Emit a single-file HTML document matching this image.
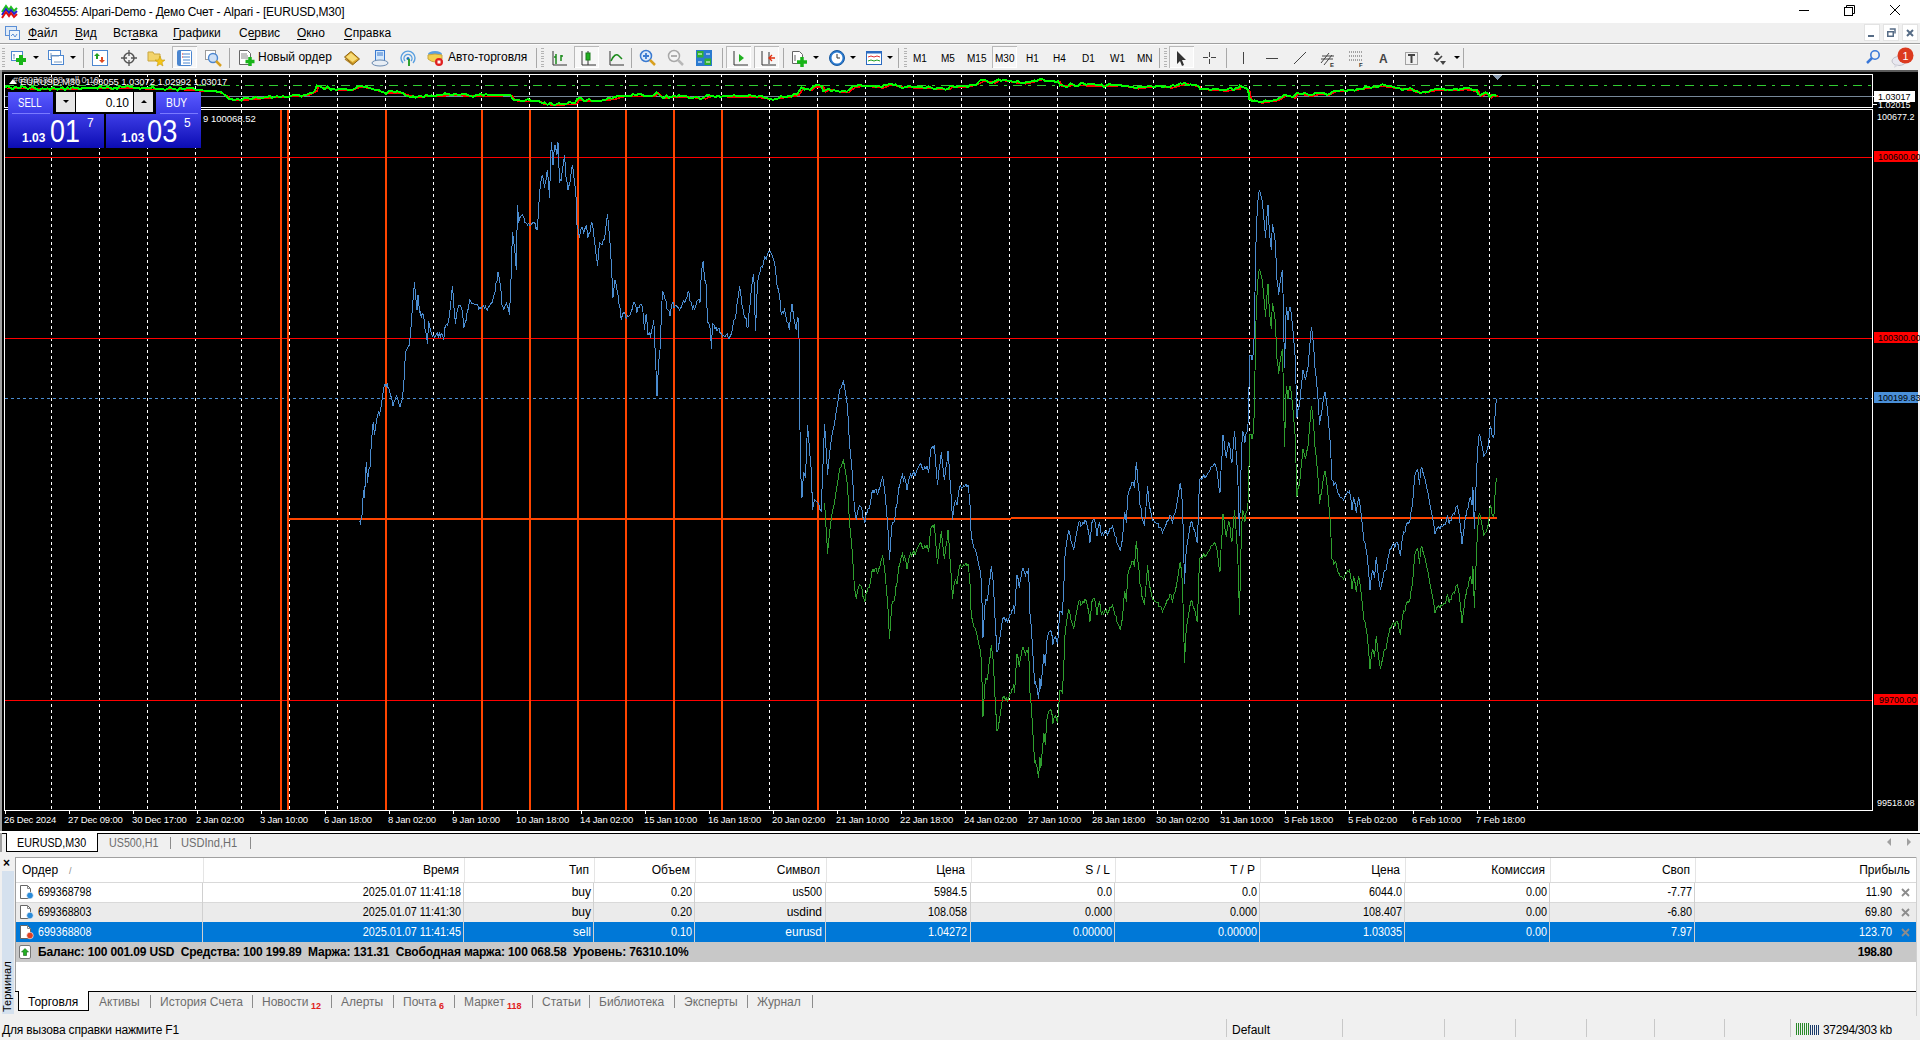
<!DOCTYPE html>
<html><head><meta charset="utf-8"><title>MT4</title>
<style>
html,body{margin:0;padding:0;}
body{width:1920px;height:1040px;position:relative;overflow:hidden;background:#f0f0f0;font-family:"Liberation Sans", sans-serif;}
.t{position:absolute;white-space:nowrap;}
.r{position:absolute;}
</style></head><body>
<div class="r" style="left:0px;top:0px;width:1920px;height:23px;background:#ffffff;"></div>
<svg class="r" style="left:1px;top:3px" width="18" height="16" viewBox="0 0 18 16">
<polyline points="1,9 5,3 8,7 10,4 13,8 16,5" fill="none" stroke="#1fbf1f" stroke-width="2"/>
<polyline points="1,12 5,6 8,10 10,7 13,11 16,8" fill="none" stroke="#2020d0" stroke-width="2"/>
<polyline points="1,15 5,9 8,13 10,10 13,14 16,11" fill="none" stroke="#e01010" stroke-width="2"/>
</svg>
<div class="t" style="left:24px;top:4.53px;font-size:12px;line-height:15px;color:#000;font-weight:normal;letter-spacing:-0.21px;">16304555: Alpari-Demo - Демо Счет - Alpari - [EURUSD,M30]</div>
<div class="r" style="left:1799px;top:10px;width:10px;height:1px;background:#000;"></div>
<svg class="r" style="left:1843px;top:4px" width="13" height="13" viewBox="0 0 13 13">
<rect x="1.5" y="3.5" width="8" height="8" fill="none" stroke="#000" stroke-width="1"/>
<polyline points="3.5,3.5 3.5,1.5 11.5,1.5 11.5,9.5 9.5,9.5" fill="none" stroke="#000" stroke-width="1"/>
</svg>
<svg class="r" style="left:1889px;top:4px" width="12" height="12" viewBox="0 0 12 12">
<path d="M1,1 L11,11 M11,1 L1,11" stroke="#000" stroke-width="1"/></svg>
<div class="r" style="left:0px;top:23px;width:1920px;height:20px;background:#f0f0f0;"></div>
<div class="r" style="left:0px;top:43px;width:1920px;height:1px;background:#a0a0a0;"></div>
<svg class="r" style="left:4px;top:25px" width="16" height="16" viewBox="0 0 16 16">
<rect x="1.5" y="1.5" width="11" height="9" fill="#dfeaf7" stroke="#5b8fd6"/>
<rect x="5.5" y="5.5" width="10" height="9" fill="#eef4fb" stroke="#5b8fd6"/>
<polyline points="7,11 9,9 11,12 13,9" fill="none" stroke="#5b8fd6"/>
</svg>
<div class="t" style="left:28px;top:25.53px;font-size:12px;line-height:15px;color:#000;font-weight:normal;">Файл</div>
<div class="t" style="left:75px;top:25.53px;font-size:12px;line-height:15px;color:#000;font-weight:normal;">Вид</div>
<div class="t" style="left:113px;top:25.53px;font-size:12px;line-height:15px;color:#000;font-weight:normal;">Вставка</div>
<div class="t" style="left:173px;top:25.53px;font-size:12px;line-height:15px;color:#000;font-weight:normal;">Графики</div>
<div class="t" style="left:239px;top:25.53px;font-size:12px;line-height:15px;color:#000;font-weight:normal;">Сервис</div>
<div class="t" style="left:297px;top:25.53px;font-size:12px;line-height:15px;color:#000;font-weight:normal;">Окно</div>
<div class="t" style="left:344px;top:25.53px;font-size:12px;line-height:15px;color:#000;font-weight:normal;">Справка</div>
<div class="r" style="left:28px;top:39px;width:9px;height:1px;background:#000;"></div>
<div class="r" style="left:75px;top:39px;width:8px;height:1px;background:#000;"></div>
<div class="r" style="left:131px;top:39px;width:7px;height:1px;background:#000;"></div>
<div class="r" style="left:173px;top:39px;width:7px;height:1px;background:#000;"></div>
<div class="r" style="left:249px;top:39px;width:7px;height:1px;background:#000;"></div>
<div class="r" style="left:297px;top:39px;width:9px;height:1px;background:#000;"></div>
<div class="r" style="left:344px;top:39px;width:8px;height:1px;background:#000;"></div>
<div class="r" style="left:1864px;top:24px;width:16px;height:17px;background:#ffffff;box-shadow:inset 0 0 0 1px #e3e3e3;"></div>
<div class="r" style="left:1883px;top:24px;width:16px;height:17px;background:#ffffff;box-shadow:inset 0 0 0 1px #e3e3e3;"></div>
<div class="r" style="left:1902px;top:24px;width:16px;height:17px;background:#ffffff;box-shadow:inset 0 0 0 1px #e3e3e3;"></div>
<div class="r" style="left:1868px;top:35px;width:6px;height:2px;background:#556b85;"></div>
<svg class="r" style="left:1887px;top:28px" width="9" height="9" viewBox="0 0 9 9">
<rect x="0.75" y="3.75" width="5.5" height="4.5" fill="none" stroke="#556b85" stroke-width="1.5"/>
<polyline points="2.75,1 8,1 8,5.5" fill="none" stroke="#556b85" stroke-width="1.5"/></svg>
<svg class="r" style="left:1906px;top:29px" width="8" height="8" viewBox="0 0 8 8">
<path d="M1,1 L7,7 M7,1 L1,7" stroke="#556b85" stroke-width="2"/></svg>
<div class="r" style="left:0px;top:44px;width:1920px;height:26px;background:#f0f0f0;"></div>
<div class="r" style="left:0px;top:44px;width:1920px;height:1px;background:#fcfcfc;"></div>
<div class="r" style="left:0px;top:70px;width:1920px;height:2px;background:#5a5a5a;"></div>
<div class="r" style="left:2px;top:48.0px;width:3px;height:1px;background:#b4b4b4;"></div>
<div class="r" style="left:2px;top:50.6px;width:3px;height:1px;background:#b4b4b4;"></div>
<div class="r" style="left:2px;top:53.2px;width:3px;height:1px;background:#b4b4b4;"></div>
<div class="r" style="left:2px;top:55.8px;width:3px;height:1px;background:#b4b4b4;"></div>
<div class="r" style="left:2px;top:58.4px;width:3px;height:1px;background:#b4b4b4;"></div>
<div class="r" style="left:2px;top:61.0px;width:3px;height:1px;background:#b4b4b4;"></div>
<div class="r" style="left:2px;top:63.6px;width:3px;height:1px;background:#b4b4b4;"></div>
<div class="r" style="left:2px;top:66.2px;width:3px;height:1px;background:#b4b4b4;"></div>
<div class="r" style="left:541px;top:48.0px;width:3px;height:1px;background:#b4b4b4;"></div>
<div class="r" style="left:541px;top:50.6px;width:3px;height:1px;background:#b4b4b4;"></div>
<div class="r" style="left:541px;top:53.2px;width:3px;height:1px;background:#b4b4b4;"></div>
<div class="r" style="left:541px;top:55.8px;width:3px;height:1px;background:#b4b4b4;"></div>
<div class="r" style="left:541px;top:58.4px;width:3px;height:1px;background:#b4b4b4;"></div>
<div class="r" style="left:541px;top:61.0px;width:3px;height:1px;background:#b4b4b4;"></div>
<div class="r" style="left:541px;top:63.6px;width:3px;height:1px;background:#b4b4b4;"></div>
<div class="r" style="left:541px;top:66.2px;width:3px;height:1px;background:#b4b4b4;"></div>
<div class="r" style="left:904px;top:48.0px;width:3px;height:1px;background:#b4b4b4;"></div>
<div class="r" style="left:904px;top:50.6px;width:3px;height:1px;background:#b4b4b4;"></div>
<div class="r" style="left:904px;top:53.2px;width:3px;height:1px;background:#b4b4b4;"></div>
<div class="r" style="left:904px;top:55.8px;width:3px;height:1px;background:#b4b4b4;"></div>
<div class="r" style="left:904px;top:58.4px;width:3px;height:1px;background:#b4b4b4;"></div>
<div class="r" style="left:904px;top:61.0px;width:3px;height:1px;background:#b4b4b4;"></div>
<div class="r" style="left:904px;top:63.6px;width:3px;height:1px;background:#b4b4b4;"></div>
<div class="r" style="left:904px;top:66.2px;width:3px;height:1px;background:#b4b4b4;"></div>
<div class="r" style="left:1164px;top:48.0px;width:3px;height:1px;background:#b4b4b4;"></div>
<div class="r" style="left:1164px;top:50.6px;width:3px;height:1px;background:#b4b4b4;"></div>
<div class="r" style="left:1164px;top:53.2px;width:3px;height:1px;background:#b4b4b4;"></div>
<div class="r" style="left:1164px;top:55.8px;width:3px;height:1px;background:#b4b4b4;"></div>
<div class="r" style="left:1164px;top:58.4px;width:3px;height:1px;background:#b4b4b4;"></div>
<div class="r" style="left:1164px;top:61.0px;width:3px;height:1px;background:#b4b4b4;"></div>
<div class="r" style="left:1164px;top:63.6px;width:3px;height:1px;background:#b4b4b4;"></div>
<div class="r" style="left:1164px;top:66.2px;width:3px;height:1px;background:#b4b4b4;"></div>
<div class="r" style="left:1463px;top:48px;width:1px;height:20px;background:#a8a8a8;"></div>
<div class="r" style="left:83px;top:48px;width:1px;height:20px;background:#a8a8a8;"></div>
<div class="r" style="left:229px;top:48px;width:1px;height:20px;background:#a8a8a8;"></div>
<div class="r" style="left:536px;top:48px;width:1px;height:20px;background:#a8a8a8;"></div>
<div class="r" style="left:631px;top:48px;width:1px;height:20px;background:#a8a8a8;"></div>
<div class="r" style="left:722px;top:48px;width:1px;height:20px;background:#a8a8a8;"></div>
<div class="r" style="left:783px;top:48px;width:1px;height:20px;background:#a8a8a8;"></div>
<div class="r" style="left:898px;top:48px;width:1px;height:20px;background:#a8a8a8;"></div>
<div class="r" style="left:1159px;top:48px;width:1px;height:20px;background:#a8a8a8;"></div>
<div class="r" style="left:1226px;top:48px;width:1px;height:20px;background:#a8a8a8;"></div>
<div class="r" style="left:172px;top:46px;width:25px;height:22px;background:#f7f7f7;box-shadow:inset 1px 1px 0 #b9b9b9, inset -1px -1px 0 #ffffff;"></div>
<div class="r" style="left:574px;top:46px;width:25px;height:22px;background:#f7f7f7;box-shadow:inset 1px 1px 0 #b9b9b9, inset -1px -1px 0 #ffffff;"></div>
<div class="r" style="left:726px;top:46px;width:25px;height:22px;background:#f7f7f7;box-shadow:inset 1px 1px 0 #b9b9b9, inset -1px -1px 0 #ffffff;"></div>
<div class="r" style="left:754px;top:46px;width:25px;height:22px;background:#f7f7f7;box-shadow:inset 1px 1px 0 #b9b9b9, inset -1px -1px 0 #ffffff;"></div>
<div class="r" style="left:992px;top:46px;width:25px;height:22px;background:#f7f7f7;box-shadow:inset 1px 1px 0 #b9b9b9, inset -1px -1px 0 #ffffff;"></div>
<div class="r" style="left:1169px;top:46px;width:25px;height:22px;background:#f7f7f7;box-shadow:inset 1px 1px 0 #b9b9b9, inset -1px -1px 0 #ffffff;"></div>
<svg class="r" style="left:10px;top:49px" width="18" height="18" viewBox="0 0 18 18"><rect x="1.5" y="2.5" width="11" height="9" fill="#fff" stroke="#4b86d0"/><path d="M4,5v5M3,6h2" stroke="#7a9ac0"/><path d="M11,6v10M6,11h10" stroke="#18b418" stroke-width="4"/></svg>
<svg class="r" style="left:33px;top:56px" width="6" height="4"><polygon points="0,0 6,0 3,3" fill="#000"/></svg>
<svg class="r" style="left:47px;top:49px" width="18" height="18" viewBox="0 0 18 18"><rect x="1.5" y="1.5" width="12" height="9" fill="#fff" stroke="#4b86d0"/><rect x="4.5" y="6.5" width="12" height="9" fill="#fff" stroke="#4b86d0"/><path d="M4,4v5M4,7h8M7,13h8" stroke="#7a9ac0"/></svg>
<svg class="r" style="left:70px;top:56px" width="6" height="4"><polygon points="0,0 6,0 3,3" fill="#000"/></svg>
<svg class="r" style="left:91px;top:49px" width="18" height="18" viewBox="0 0 18 18"><rect x="1.5" y="1.5" width="15" height="15" fill="#fff" stroke="#4b86d0"/><path d="M6,4l-3,3h2v3h2v-3h2z" fill="#20a020"/><path d="M11,14l3,-3h-2v-3h-2v3h-2z" fill="#e04a20"/></svg>
<svg class="r" style="left:120px;top:49px" width="18" height="18" viewBox="0 0 18 18"><circle cx="9" cy="9" r="5" fill="none" stroke="#555" stroke-width="1.5"/><path d="M9,1v6M9,11v6M1,9h6M11,9h6" stroke="#555" stroke-width="1.3"/></svg>
<svg class="r" style="left:147px;top:49px" width="18" height="18" viewBox="0 0 18 18"><path d="M1,3h5l1,2h6v7h-12z" fill="#f3d46b" stroke="#c9a640"/><polygon points="13,7 14.5,11 18,11 15,13.5 16,17 13,15 10,17 11,13.5 8,11 11.5,11" fill="#f5c518" stroke="#c49a10" stroke-width="0.6"/></svg>
<svg class="r" style="left:176px;top:49px" width="18" height="18" viewBox="0 0 18 18"><rect x="1.5" y="1.5" width="14" height="15" rx="1" fill="#fff" stroke="#4b86d0"/><rect x="2" y="2" width="3" height="14" fill="#4b86d0"/><path d="M7,5h7M7,8h7M7,11h7M7,14h7" stroke="#4b86d0"/><path d="M6,5h1M6,8h1" stroke="#e02020"/></svg>
<svg class="r" style="left:204px;top:49px" width="18" height="18" viewBox="0 0 18 18"><rect x="1.5" y="1.5" width="10" height="9" fill="#fff" stroke="#9a9a9a"/><circle cx="9" cy="9" r="4.5" fill="#cfe0f5" stroke="#4b86d0" stroke-width="1.4"/><path d="M12,12l5,5" stroke="#d8a020" stroke-width="2.5"/></svg>
<svg class="r" style="left:238px;top:49px" width="18" height="18" viewBox="0 0 18 18"><path d="M1.5,1.5h8l3,3v11h-11z" fill="#fff" stroke="#666"/><path d="M3,5h6M3,7h7M3,9h7" stroke="#888"/><path d="M12,8v9M7.5,12.5h9" stroke="#18b418" stroke-width="3.5"/></svg>
<div class="t" style="left:258px;top:49.53px;font-size:12px;line-height:15px;color:#000;font-weight:normal;">Новый ордер</div>
<svg class="r" style="left:343px;top:49px" width="18" height="18" viewBox="0 0 18 18"><polygon points="1.5,8 8,2.5 16.5,10 10,15.5" fill="#d9a52a" stroke="#8a6010"/><polygon points="3,8 8,4 14.5,9.5 9.5,13" fill="#f8dc78"/><path d="M2,10l8,6" stroke="#b08020" stroke-width="1.2"/></svg>
<svg class="r" style="left:371px;top:49px" width="18" height="18" viewBox="0 0 18 18"><rect x="4.5" y="1.5" width="9" height="11" fill="#d6e8fa" stroke="#3a7ad0"/><path d="M6,4h6M6,6h6" stroke="#3a7ad0"/><ellipse cx="9" cy="14" rx="8" ry="3" fill="#e8eef5" stroke="#6a8ab0"/></svg>
<svg class="r" style="left:399px;top:49px" width="18" height="18" viewBox="0 0 18 18"><path d="M4,14a7,7 0 1,1 10,0" fill="none" stroke="#5aa0e0" stroke-width="1.4"/><path d="M6,12a4,4 0 1,1 6,0" fill="none" stroke="#5aa0e0" stroke-width="1.4"/><circle cx="9" cy="9.5" r="1.5" fill="#1a6fc0"/><path d="M10,10v7" stroke="#30a030" stroke-width="2"/></svg>
<svg class="r" style="left:426px;top:49px" width="18" height="18" viewBox="0 0 18 18"><ellipse cx="9" cy="5" rx="7" ry="3" fill="#5aa0e0"/><path d="M2,6q7,-2 14,0v4q-7,6 -14,0z" fill="#f2d050" stroke="#c9a640"/><circle cx="13" cy="13" r="4" fill="#e02020"/><rect x="11.5" y="11.5" width="3" height="3" fill="#fff"/></svg>
<div class="t" style="left:448px;top:49.53px;font-size:12px;line-height:15px;color:#000;font-weight:normal;">Авто-торговля</div>
<svg class="r" style="left:550px;top:49px" width="18" height="18" viewBox="0 0 18 18"><path d="M3,2v14h14" stroke="#333" fill="none"/><path d="M6,5v10M6,8h-2M11,6v6M11,7h2" stroke="#1a8a1a" stroke-width="1.5"/></svg>
<svg class="r" style="left:579px;top:49px" width="18" height="18" viewBox="0 0 18 18"><path d="M3,2v14h14" stroke="#333" fill="none"/><path d="M9,2v14" stroke="#333"/><rect x="7" y="4" width="4" height="7" fill="#20b020" stroke="#1a7a1a"/></svg>
<svg class="r" style="left:607px;top:49px" width="18" height="18" viewBox="0 0 18 18"><path d="M3,2v14h14" stroke="#333" fill="none"/><path d="M4,12q4,-9 8,-5l3,3" stroke="#1a8a1a" fill="none" stroke-width="1.5"/></svg>
<svg class="r" style="left:639px;top:49px" width="18" height="18" viewBox="0 0 18 18"><circle cx="7" cy="7" r="5.5" fill="#dceafa" stroke="#3a7ad0" stroke-width="1.5"/><path d="M4,7h6M7,4v6" stroke="#3a7ad0" stroke-width="1.8"/><path d="M11,11l5,5" stroke="#d8a020" stroke-width="2.5"/></svg>
<svg class="r" style="left:667px;top:49px" width="18" height="18" viewBox="0 0 18 18"><circle cx="7" cy="7" r="5.5" fill="#f4f4f4" stroke="#a8a8a8" stroke-width="1.5"/><path d="M4,7h6" stroke="#a8a8a8" stroke-width="1.8"/><path d="M11,11l5,5" stroke="#b8b8b8" stroke-width="2.5"/></svg>
<svg class="r" style="left:695px;top:49px" width="18" height="18" viewBox="0 0 18 18"><rect x="1" y="1" width="16" height="16" fill="#2a7ad0"/><rect x="2" y="2" width="6.5" height="6.5" fill="#30b030"/><rect x="9.5" y="9.5" width="6.5" height="6.5" fill="#30b030"/><path d="M3,5h4M11,5h4M3,13h4M11,13h4" stroke="#fff"/></svg>
<svg class="r" style="left:731px;top:49px" width="18" height="18" viewBox="0 0 18 18"><path d="M3,2v14h14" stroke="#333" fill="none"/><polygon points="8,5 13,9 8,13" fill="#20b020"/></svg>
<svg class="r" style="left:759px;top:49px" width="18" height="18" viewBox="0 0 18 18"><path d="M3,2v14h14M10,3v12" stroke="#333" fill="none"/><path d="M16,9h-5M13,6l-3,3 3,3" stroke="#e03010" fill="none" stroke-width="1.3"/></svg>
<svg class="r" style="left:791px;top:49px" width="18" height="18" viewBox="0 0 18 18"><path d="M1.5,2.5h7l3,3v9h-10z" fill="#fff" stroke="#666"/><path d="M4,6v6" stroke="#666"/><path d="M11,8v10M6,13h10" stroke="#18b418" stroke-width="3.5"/></svg>
<svg class="r" style="left:813px;top:56px" width="6" height="4"><polygon points="0,0 6,0 3,3" fill="#000"/></svg>
<svg class="r" style="left:828px;top:49px" width="18" height="18" viewBox="0 0 18 18"><circle cx="9" cy="9" r="7.5" fill="#2a7ad0" stroke="#1a5aa0"/><circle cx="9" cy="9" r="5.5" fill="#fff"/><path d="M9,5v4h3" stroke="#333" fill="none"/></svg>
<svg class="r" style="left:850px;top:56px" width="6" height="4"><polygon points="0,0 6,0 3,3" fill="#000"/></svg>
<svg class="r" style="left:865px;top:49px" width="18" height="18" viewBox="0 0 18 18"><rect x="1.5" y="2.5" width="15" height="13" fill="#fff" stroke="#2a6ac0"/><rect x="1.5" y="2.5" width="15" height="2" fill="#2a6ac0"/><path d="M3,8l3,-1 3,1 3,-1 3,1" stroke="#e03030" fill="none"/><path d="M3,12l3,-1 3,1 3,-1 3,1" stroke="#20a020" fill="none"/></svg>
<svg class="r" style="left:887px;top:56px" width="6" height="4"><polygon points="0,0 6,0 3,3" fill="#000"/></svg>
<div class="t" style="left:913px;top:52.70px;font-size:10px;line-height:12px;color:#000;font-weight:normal;">M1</div>
<div class="t" style="left:941px;top:52.70px;font-size:10px;line-height:12px;color:#000;font-weight:normal;">M5</div>
<div class="t" style="left:967px;top:52.70px;font-size:10px;line-height:12px;color:#000;font-weight:normal;">M15</div>
<div class="t" style="left:995px;top:52.70px;font-size:10px;line-height:12px;color:#000;font-weight:normal;">M30</div>
<div class="t" style="left:1026px;top:52.70px;font-size:10px;line-height:12px;color:#000;font-weight:normal;">H1</div>
<div class="t" style="left:1053px;top:52.70px;font-size:10px;line-height:12px;color:#000;font-weight:normal;">H4</div>
<div class="t" style="left:1082px;top:52.70px;font-size:10px;line-height:12px;color:#000;font-weight:normal;">D1</div>
<div class="t" style="left:1110px;top:52.70px;font-size:10px;line-height:12px;color:#000;font-weight:normal;">W1</div>
<div class="t" style="left:1137px;top:52.70px;font-size:10px;line-height:12px;color:#000;font-weight:normal;">MN</div>
<svg class="r" style="left:1172px;top:49px" width="18" height="18" viewBox="0 0 18 18"><polygon points="5,2 5,15 8,12 10,17 12,16 10,11 14,11" fill="#333"/></svg>
<svg class="r" style="left:1201px;top:49px" width="18" height="18" shape-rendering="crispEdges"><path d="M8.5,3v5M8.5,10v5M2,8.5h5M10,8.5h5" stroke="#444" stroke-width="1"/></svg>
<div class="r" style="left:1243px;top:52px;width:1px;height:12px;background:#444;"></div>
<div class="r" style="left:1266px;top:58px;width:12px;height:1px;background:#444;"></div>
<svg class="r" style="left:1293px;top:51px" width="14" height="14"><path d="M1,13L13,1" stroke="#444"/></svg>
<svg class="r" style="left:1319px;top:49px" width="18" height="18" viewBox="0 0 18 18"><path d="M2,14l8,-10M5,16l8,-10M2,10h12M3,7h12" stroke="#444" fill="none"/><text x="11" y="18" font-size="6" font-family="Liberation Sans" fill="#333" font-weight="bold">E</text></svg>
<svg class="r" style="left:1348px;top:49px" width="18" height="18" viewBox="0 0 18 18"><path d="M1,3h13M1,7h13M1,11h13" stroke="#555" stroke-dasharray="1,1" fill="none"/><text x="11" y="18" font-size="6" font-family="Liberation Sans" fill="#333" font-weight="bold">F</text></svg>
<div class="t" style="left:1379px;top:51.53px;font-size:12px;line-height:15px;color:#444;font-weight:bold;">A</div>
<svg class="r" style="left:1403px;top:49px" width="18" height="18" viewBox="0 0 18 18"><rect x="2.5" y="3.5" width="12" height="12" fill="none" stroke="#555" stroke-dasharray="1,1"/><path d="M5,6h7M8.5,6v8" stroke="#444" stroke-width="2"/></svg>
<svg class="r" style="left:1431px;top:49px" width="18" height="18" viewBox="0 0 18 18"><polygon points="3,6 6,2 9,6" fill="#444"/><path d="M3,9l3,3 5,-5" stroke="#444" fill="none" stroke-width="1.6"/><polygon points="9,12 15,12 12,16" fill="#444"/></svg>
<svg class="r" style="left:1454px;top:56px" width="6" height="4"><polygon points="0,0 6,0 3,3" fill="#000"/></svg>
<svg class="r" style="left:1865px;top:49px" width="18" height="18" viewBox="0 0 18 18"><circle cx="10" cy="6" r="4.2" fill="none" stroke="#3a78d8" stroke-width="1.6"/><path d="M7,9l-5,5" stroke="#3a78d8" stroke-width="2.5"/></svg>
<svg class="r" style="left:1889px;top:47px" width="31" height="22" viewBox="0 0 31 22"><ellipse cx="10" cy="14" rx="7" ry="4.5" fill="#e8e8f0" stroke="#c0c0c8"/><polygon points="6,17 5,21 10,18" fill="#d8d8e0"/><circle cx="16.5" cy="8.5" r="8" fill="#dc3a1f"/><text x="16.5" y="13" font-size="11" font-family="Liberation Sans" fill="#fff" text-anchor="middle">1</text></svg>
<div class="r" style="left:0px;top:72px;width:1920px;height:759px;background:#000;"></div>
<div class="r" style="left:0px;top:70px;width:2px;height:763px;background:#a0a0a0;"></div>
<div class="r" style="left:1918px;top:70px;width:2px;height:763px;background:#f0f0f0;"></div>
<svg class="r" style="left:0;top:0" width="1920" height="1040" viewBox="0 0 1920 1040" shape-rendering="crispEdges"><path d="M51.5,74V77M51.5,80V83M51.5,86V89M51.5,92V95M51.5,98V101M51.5,104V107" stroke="#fff" stroke-width="1"/><path d="M51.5,110V113M51.5,116V119M51.5,122V125M51.5,128V131M51.5,134V137M51.5,140V143M51.5,146V149M51.5,152V155M51.5,158V161M51.5,164V167M51.5,170V173M51.5,176V179M51.5,182V185M51.5,188V191M51.5,194V197M51.5,200V203M51.5,206V209M51.5,212V215M51.5,218V221M51.5,224V227M51.5,230V233M51.5,236V239M51.5,242V245M51.5,248V251M51.5,254V257M51.5,260V263M51.5,266V269M51.5,272V275M51.5,278V281M51.5,284V287M51.5,290V293M51.5,296V299M51.5,302V305M51.5,308V311M51.5,314V317M51.5,320V323M51.5,326V329M51.5,332V335M51.5,338V341M51.5,344V347M51.5,350V353M51.5,356V359M51.5,362V365M51.5,368V371M51.5,374V377M51.5,380V383M51.5,386V389M51.5,392V395M51.5,398V401M51.5,404V407M51.5,410V413M51.5,416V419M51.5,422V425M51.5,428V431M51.5,434V437M51.5,440V443M51.5,446V449M51.5,452V455M51.5,458V461M51.5,464V467M51.5,470V473M51.5,476V479M51.5,482V485M51.5,488V491M51.5,494V497M51.5,500V503M51.5,506V509M51.5,512V515M51.5,518V521M51.5,524V527M51.5,530V533M51.5,536V539M51.5,542V545M51.5,548V551M51.5,554V557M51.5,560V563M51.5,566V569M51.5,572V575M51.5,578V581M51.5,584V587M51.5,590V593M51.5,596V599M51.5,602V605M51.5,608V611M51.5,614V617M51.5,620V623M51.5,626V629M51.5,632V635M51.5,638V641M51.5,644V647M51.5,650V653M51.5,656V659M51.5,662V665M51.5,668V671M51.5,674V677M51.5,680V683M51.5,686V689M51.5,692V695M51.5,698V701M51.5,704V707M51.5,710V713M51.5,716V719M51.5,722V725M51.5,728V731M51.5,734V737M51.5,740V743M51.5,746V749M51.5,752V755M51.5,758V761M51.5,764V767M51.5,770V773M51.5,776V779M51.5,782V785M51.5,788V791M51.5,794V797M51.5,800V803M51.5,806V809" stroke="#fff" stroke-width="1"/><path d="M99.5,74V77M99.5,80V83M99.5,86V89M99.5,92V95M99.5,98V101M99.5,104V107" stroke="#fff" stroke-width="1"/><path d="M99.5,110V113M99.5,116V119M99.5,122V125M99.5,128V131M99.5,134V137M99.5,140V143M99.5,146V149M99.5,152V155M99.5,158V161M99.5,164V167M99.5,170V173M99.5,176V179M99.5,182V185M99.5,188V191M99.5,194V197M99.5,200V203M99.5,206V209M99.5,212V215M99.5,218V221M99.5,224V227M99.5,230V233M99.5,236V239M99.5,242V245M99.5,248V251M99.5,254V257M99.5,260V263M99.5,266V269M99.5,272V275M99.5,278V281M99.5,284V287M99.5,290V293M99.5,296V299M99.5,302V305M99.5,308V311M99.5,314V317M99.5,320V323M99.5,326V329M99.5,332V335M99.5,338V341M99.5,344V347M99.5,350V353M99.5,356V359M99.5,362V365M99.5,368V371M99.5,374V377M99.5,380V383M99.5,386V389M99.5,392V395M99.5,398V401M99.5,404V407M99.5,410V413M99.5,416V419M99.5,422V425M99.5,428V431M99.5,434V437M99.5,440V443M99.5,446V449M99.5,452V455M99.5,458V461M99.5,464V467M99.5,470V473M99.5,476V479M99.5,482V485M99.5,488V491M99.5,494V497M99.5,500V503M99.5,506V509M99.5,512V515M99.5,518V521M99.5,524V527M99.5,530V533M99.5,536V539M99.5,542V545M99.5,548V551M99.5,554V557M99.5,560V563M99.5,566V569M99.5,572V575M99.5,578V581M99.5,584V587M99.5,590V593M99.5,596V599M99.5,602V605M99.5,608V611M99.5,614V617M99.5,620V623M99.5,626V629M99.5,632V635M99.5,638V641M99.5,644V647M99.5,650V653M99.5,656V659M99.5,662V665M99.5,668V671M99.5,674V677M99.5,680V683M99.5,686V689M99.5,692V695M99.5,698V701M99.5,704V707M99.5,710V713M99.5,716V719M99.5,722V725M99.5,728V731M99.5,734V737M99.5,740V743M99.5,746V749M99.5,752V755M99.5,758V761M99.5,764V767M99.5,770V773M99.5,776V779M99.5,782V785M99.5,788V791M99.5,794V797M99.5,800V803M99.5,806V809" stroke="#fff" stroke-width="1"/><path d="M147.5,74V77M147.5,80V83M147.5,86V89M147.5,92V95M147.5,98V101M147.5,104V107" stroke="#fff" stroke-width="1"/><path d="M147.5,110V113M147.5,116V119M147.5,122V125M147.5,128V131M147.5,134V137M147.5,140V143M147.5,146V149M147.5,152V155M147.5,158V161M147.5,164V167M147.5,170V173M147.5,176V179M147.5,182V185M147.5,188V191M147.5,194V197M147.5,200V203M147.5,206V209M147.5,212V215M147.5,218V221M147.5,224V227M147.5,230V233M147.5,236V239M147.5,242V245M147.5,248V251M147.5,254V257M147.5,260V263M147.5,266V269M147.5,272V275M147.5,278V281M147.5,284V287M147.5,290V293M147.5,296V299M147.5,302V305M147.5,308V311M147.5,314V317M147.5,320V323M147.5,326V329M147.5,332V335M147.5,338V341M147.5,344V347M147.5,350V353M147.5,356V359M147.5,362V365M147.5,368V371M147.5,374V377M147.5,380V383M147.5,386V389M147.5,392V395M147.5,398V401M147.5,404V407M147.5,410V413M147.5,416V419M147.5,422V425M147.5,428V431M147.5,434V437M147.5,440V443M147.5,446V449M147.5,452V455M147.5,458V461M147.5,464V467M147.5,470V473M147.5,476V479M147.5,482V485M147.5,488V491M147.5,494V497M147.5,500V503M147.5,506V509M147.5,512V515M147.5,518V521M147.5,524V527M147.5,530V533M147.5,536V539M147.5,542V545M147.5,548V551M147.5,554V557M147.5,560V563M147.5,566V569M147.5,572V575M147.5,578V581M147.5,584V587M147.5,590V593M147.5,596V599M147.5,602V605M147.5,608V611M147.5,614V617M147.5,620V623M147.5,626V629M147.5,632V635M147.5,638V641M147.5,644V647M147.5,650V653M147.5,656V659M147.5,662V665M147.5,668V671M147.5,674V677M147.5,680V683M147.5,686V689M147.5,692V695M147.5,698V701M147.5,704V707M147.5,710V713M147.5,716V719M147.5,722V725M147.5,728V731M147.5,734V737M147.5,740V743M147.5,746V749M147.5,752V755M147.5,758V761M147.5,764V767M147.5,770V773M147.5,776V779M147.5,782V785M147.5,788V791M147.5,794V797M147.5,800V803M147.5,806V809" stroke="#fff" stroke-width="1"/><path d="M195.5,74V77M195.5,80V83M195.5,86V89M195.5,92V95M195.5,98V101M195.5,104V107" stroke="#fff" stroke-width="1"/><path d="M195.5,110V113M195.5,116V119M195.5,122V125M195.5,128V131M195.5,134V137M195.5,140V143M195.5,146V149M195.5,152V155M195.5,158V161M195.5,164V167M195.5,170V173M195.5,176V179M195.5,182V185M195.5,188V191M195.5,194V197M195.5,200V203M195.5,206V209M195.5,212V215M195.5,218V221M195.5,224V227M195.5,230V233M195.5,236V239M195.5,242V245M195.5,248V251M195.5,254V257M195.5,260V263M195.5,266V269M195.5,272V275M195.5,278V281M195.5,284V287M195.5,290V293M195.5,296V299M195.5,302V305M195.5,308V311M195.5,314V317M195.5,320V323M195.5,326V329M195.5,332V335M195.5,338V341M195.5,344V347M195.5,350V353M195.5,356V359M195.5,362V365M195.5,368V371M195.5,374V377M195.5,380V383M195.5,386V389M195.5,392V395M195.5,398V401M195.5,404V407M195.5,410V413M195.5,416V419M195.5,422V425M195.5,428V431M195.5,434V437M195.5,440V443M195.5,446V449M195.5,452V455M195.5,458V461M195.5,464V467M195.5,470V473M195.5,476V479M195.5,482V485M195.5,488V491M195.5,494V497M195.5,500V503M195.5,506V509M195.5,512V515M195.5,518V521M195.5,524V527M195.5,530V533M195.5,536V539M195.5,542V545M195.5,548V551M195.5,554V557M195.5,560V563M195.5,566V569M195.5,572V575M195.5,578V581M195.5,584V587M195.5,590V593M195.5,596V599M195.5,602V605M195.5,608V611M195.5,614V617M195.5,620V623M195.5,626V629M195.5,632V635M195.5,638V641M195.5,644V647M195.5,650V653M195.5,656V659M195.5,662V665M195.5,668V671M195.5,674V677M195.5,680V683M195.5,686V689M195.5,692V695M195.5,698V701M195.5,704V707M195.5,710V713M195.5,716V719M195.5,722V725M195.5,728V731M195.5,734V737M195.5,740V743M195.5,746V749M195.5,752V755M195.5,758V761M195.5,764V767M195.5,770V773M195.5,776V779M195.5,782V785M195.5,788V791M195.5,794V797M195.5,800V803M195.5,806V809" stroke="#fff" stroke-width="1"/><path d="M241.5,74V77M241.5,80V83M241.5,86V89M241.5,92V95M241.5,98V101M241.5,104V107" stroke="#fff" stroke-width="1"/><path d="M241.5,110V113M241.5,116V119M241.5,122V125M241.5,128V131M241.5,134V137M241.5,140V143M241.5,146V149M241.5,152V155M241.5,158V161M241.5,164V167M241.5,170V173M241.5,176V179M241.5,182V185M241.5,188V191M241.5,194V197M241.5,200V203M241.5,206V209M241.5,212V215M241.5,218V221M241.5,224V227M241.5,230V233M241.5,236V239M241.5,242V245M241.5,248V251M241.5,254V257M241.5,260V263M241.5,266V269M241.5,272V275M241.5,278V281M241.5,284V287M241.5,290V293M241.5,296V299M241.5,302V305M241.5,308V311M241.5,314V317M241.5,320V323M241.5,326V329M241.5,332V335M241.5,338V341M241.5,344V347M241.5,350V353M241.5,356V359M241.5,362V365M241.5,368V371M241.5,374V377M241.5,380V383M241.5,386V389M241.5,392V395M241.5,398V401M241.5,404V407M241.5,410V413M241.5,416V419M241.5,422V425M241.5,428V431M241.5,434V437M241.5,440V443M241.5,446V449M241.5,452V455M241.5,458V461M241.5,464V467M241.5,470V473M241.5,476V479M241.5,482V485M241.5,488V491M241.5,494V497M241.5,500V503M241.5,506V509M241.5,512V515M241.5,518V521M241.5,524V527M241.5,530V533M241.5,536V539M241.5,542V545M241.5,548V551M241.5,554V557M241.5,560V563M241.5,566V569M241.5,572V575M241.5,578V581M241.5,584V587M241.5,590V593M241.5,596V599M241.5,602V605M241.5,608V611M241.5,614V617M241.5,620V623M241.5,626V629M241.5,632V635M241.5,638V641M241.5,644V647M241.5,650V653M241.5,656V659M241.5,662V665M241.5,668V671M241.5,674V677M241.5,680V683M241.5,686V689M241.5,692V695M241.5,698V701M241.5,704V707M241.5,710V713M241.5,716V719M241.5,722V725M241.5,728V731M241.5,734V737M241.5,740V743M241.5,746V749M241.5,752V755M241.5,758V761M241.5,764V767M241.5,770V773M241.5,776V779M241.5,782V785M241.5,788V791M241.5,794V797M241.5,800V803M241.5,806V809" stroke="#fff" stroke-width="1"/><path d="M289.5,74V77M289.5,80V83M289.5,86V89M289.5,92V95M289.5,98V101M289.5,104V107" stroke="#fff" stroke-width="1"/><path d="M289.5,110V113M289.5,116V119M289.5,122V125M289.5,128V131M289.5,134V137M289.5,140V143M289.5,146V149M289.5,152V155M289.5,158V161M289.5,164V167M289.5,170V173M289.5,176V179M289.5,182V185M289.5,188V191M289.5,194V197M289.5,200V203M289.5,206V209M289.5,212V215M289.5,218V221M289.5,224V227M289.5,230V233M289.5,236V239M289.5,242V245M289.5,248V251M289.5,254V257M289.5,260V263M289.5,266V269M289.5,272V275M289.5,278V281M289.5,284V287M289.5,290V293M289.5,296V299M289.5,302V305M289.5,308V311M289.5,314V317M289.5,320V323M289.5,326V329M289.5,332V335M289.5,338V341M289.5,344V347M289.5,350V353M289.5,356V359M289.5,362V365M289.5,368V371M289.5,374V377M289.5,380V383M289.5,386V389M289.5,392V395M289.5,398V401M289.5,404V407M289.5,410V413M289.5,416V419M289.5,422V425M289.5,428V431M289.5,434V437M289.5,440V443M289.5,446V449M289.5,452V455M289.5,458V461M289.5,464V467M289.5,470V473M289.5,476V479M289.5,482V485M289.5,488V491M289.5,494V497M289.5,500V503M289.5,506V509M289.5,512V515M289.5,518V521M289.5,524V527M289.5,530V533M289.5,536V539M289.5,542V545M289.5,548V551M289.5,554V557M289.5,560V563M289.5,566V569M289.5,572V575M289.5,578V581M289.5,584V587M289.5,590V593M289.5,596V599M289.5,602V605M289.5,608V611M289.5,614V617M289.5,620V623M289.5,626V629M289.5,632V635M289.5,638V641M289.5,644V647M289.5,650V653M289.5,656V659M289.5,662V665M289.5,668V671M289.5,674V677M289.5,680V683M289.5,686V689M289.5,692V695M289.5,698V701M289.5,704V707M289.5,710V713M289.5,716V719M289.5,722V725M289.5,728V731M289.5,734V737M289.5,740V743M289.5,746V749M289.5,752V755M289.5,758V761M289.5,764V767M289.5,770V773M289.5,776V779M289.5,782V785M289.5,788V791M289.5,794V797M289.5,800V803M289.5,806V809" stroke="#fff" stroke-width="1"/><path d="M337.5,74V77M337.5,80V83M337.5,86V89M337.5,92V95M337.5,98V101M337.5,104V107" stroke="#fff" stroke-width="1"/><path d="M337.5,110V113M337.5,116V119M337.5,122V125M337.5,128V131M337.5,134V137M337.5,140V143M337.5,146V149M337.5,152V155M337.5,158V161M337.5,164V167M337.5,170V173M337.5,176V179M337.5,182V185M337.5,188V191M337.5,194V197M337.5,200V203M337.5,206V209M337.5,212V215M337.5,218V221M337.5,224V227M337.5,230V233M337.5,236V239M337.5,242V245M337.5,248V251M337.5,254V257M337.5,260V263M337.5,266V269M337.5,272V275M337.5,278V281M337.5,284V287M337.5,290V293M337.5,296V299M337.5,302V305M337.5,308V311M337.5,314V317M337.5,320V323M337.5,326V329M337.5,332V335M337.5,338V341M337.5,344V347M337.5,350V353M337.5,356V359M337.5,362V365M337.5,368V371M337.5,374V377M337.5,380V383M337.5,386V389M337.5,392V395M337.5,398V401M337.5,404V407M337.5,410V413M337.5,416V419M337.5,422V425M337.5,428V431M337.5,434V437M337.5,440V443M337.5,446V449M337.5,452V455M337.5,458V461M337.5,464V467M337.5,470V473M337.5,476V479M337.5,482V485M337.5,488V491M337.5,494V497M337.5,500V503M337.5,506V509M337.5,512V515M337.5,518V521M337.5,524V527M337.5,530V533M337.5,536V539M337.5,542V545M337.5,548V551M337.5,554V557M337.5,560V563M337.5,566V569M337.5,572V575M337.5,578V581M337.5,584V587M337.5,590V593M337.5,596V599M337.5,602V605M337.5,608V611M337.5,614V617M337.5,620V623M337.5,626V629M337.5,632V635M337.5,638V641M337.5,644V647M337.5,650V653M337.5,656V659M337.5,662V665M337.5,668V671M337.5,674V677M337.5,680V683M337.5,686V689M337.5,692V695M337.5,698V701M337.5,704V707M337.5,710V713M337.5,716V719M337.5,722V725M337.5,728V731M337.5,734V737M337.5,740V743M337.5,746V749M337.5,752V755M337.5,758V761M337.5,764V767M337.5,770V773M337.5,776V779M337.5,782V785M337.5,788V791M337.5,794V797M337.5,800V803M337.5,806V809" stroke="#fff" stroke-width="1"/><path d="M385.5,74V77M385.5,80V83M385.5,86V89M385.5,92V95M385.5,98V101M385.5,104V107" stroke="#fff" stroke-width="1"/><path d="M385.5,110V113M385.5,116V119M385.5,122V125M385.5,128V131M385.5,134V137M385.5,140V143M385.5,146V149M385.5,152V155M385.5,158V161M385.5,164V167M385.5,170V173M385.5,176V179M385.5,182V185M385.5,188V191M385.5,194V197M385.5,200V203M385.5,206V209M385.5,212V215M385.5,218V221M385.5,224V227M385.5,230V233M385.5,236V239M385.5,242V245M385.5,248V251M385.5,254V257M385.5,260V263M385.5,266V269M385.5,272V275M385.5,278V281M385.5,284V287M385.5,290V293M385.5,296V299M385.5,302V305M385.5,308V311M385.5,314V317M385.5,320V323M385.5,326V329M385.5,332V335M385.5,338V341M385.5,344V347M385.5,350V353M385.5,356V359M385.5,362V365M385.5,368V371M385.5,374V377M385.5,380V383M385.5,386V389M385.5,392V395M385.5,398V401M385.5,404V407M385.5,410V413M385.5,416V419M385.5,422V425M385.5,428V431M385.5,434V437M385.5,440V443M385.5,446V449M385.5,452V455M385.5,458V461M385.5,464V467M385.5,470V473M385.5,476V479M385.5,482V485M385.5,488V491M385.5,494V497M385.5,500V503M385.5,506V509M385.5,512V515M385.5,518V521M385.5,524V527M385.5,530V533M385.5,536V539M385.5,542V545M385.5,548V551M385.5,554V557M385.5,560V563M385.5,566V569M385.5,572V575M385.5,578V581M385.5,584V587M385.5,590V593M385.5,596V599M385.5,602V605M385.5,608V611M385.5,614V617M385.5,620V623M385.5,626V629M385.5,632V635M385.5,638V641M385.5,644V647M385.5,650V653M385.5,656V659M385.5,662V665M385.5,668V671M385.5,674V677M385.5,680V683M385.5,686V689M385.5,692V695M385.5,698V701M385.5,704V707M385.5,710V713M385.5,716V719M385.5,722V725M385.5,728V731M385.5,734V737M385.5,740V743M385.5,746V749M385.5,752V755M385.5,758V761M385.5,764V767M385.5,770V773M385.5,776V779M385.5,782V785M385.5,788V791M385.5,794V797M385.5,800V803M385.5,806V809" stroke="#fff" stroke-width="1"/><path d="M433.5,74V77M433.5,80V83M433.5,86V89M433.5,92V95M433.5,98V101M433.5,104V107" stroke="#fff" stroke-width="1"/><path d="M433.5,110V113M433.5,116V119M433.5,122V125M433.5,128V131M433.5,134V137M433.5,140V143M433.5,146V149M433.5,152V155M433.5,158V161M433.5,164V167M433.5,170V173M433.5,176V179M433.5,182V185M433.5,188V191M433.5,194V197M433.5,200V203M433.5,206V209M433.5,212V215M433.5,218V221M433.5,224V227M433.5,230V233M433.5,236V239M433.5,242V245M433.5,248V251M433.5,254V257M433.5,260V263M433.5,266V269M433.5,272V275M433.5,278V281M433.5,284V287M433.5,290V293M433.5,296V299M433.5,302V305M433.5,308V311M433.5,314V317M433.5,320V323M433.5,326V329M433.5,332V335M433.5,338V341M433.5,344V347M433.5,350V353M433.5,356V359M433.5,362V365M433.5,368V371M433.5,374V377M433.5,380V383M433.5,386V389M433.5,392V395M433.5,398V401M433.5,404V407M433.5,410V413M433.5,416V419M433.5,422V425M433.5,428V431M433.5,434V437M433.5,440V443M433.5,446V449M433.5,452V455M433.5,458V461M433.5,464V467M433.5,470V473M433.5,476V479M433.5,482V485M433.5,488V491M433.5,494V497M433.5,500V503M433.5,506V509M433.5,512V515M433.5,518V521M433.5,524V527M433.5,530V533M433.5,536V539M433.5,542V545M433.5,548V551M433.5,554V557M433.5,560V563M433.5,566V569M433.5,572V575M433.5,578V581M433.5,584V587M433.5,590V593M433.5,596V599M433.5,602V605M433.5,608V611M433.5,614V617M433.5,620V623M433.5,626V629M433.5,632V635M433.5,638V641M433.5,644V647M433.5,650V653M433.5,656V659M433.5,662V665M433.5,668V671M433.5,674V677M433.5,680V683M433.5,686V689M433.5,692V695M433.5,698V701M433.5,704V707M433.5,710V713M433.5,716V719M433.5,722V725M433.5,728V731M433.5,734V737M433.5,740V743M433.5,746V749M433.5,752V755M433.5,758V761M433.5,764V767M433.5,770V773M433.5,776V779M433.5,782V785M433.5,788V791M433.5,794V797M433.5,800V803M433.5,806V809" stroke="#fff" stroke-width="1"/><path d="M481.5,74V77M481.5,80V83M481.5,86V89M481.5,92V95M481.5,98V101M481.5,104V107" stroke="#fff" stroke-width="1"/><path d="M481.5,110V113M481.5,116V119M481.5,122V125M481.5,128V131M481.5,134V137M481.5,140V143M481.5,146V149M481.5,152V155M481.5,158V161M481.5,164V167M481.5,170V173M481.5,176V179M481.5,182V185M481.5,188V191M481.5,194V197M481.5,200V203M481.5,206V209M481.5,212V215M481.5,218V221M481.5,224V227M481.5,230V233M481.5,236V239M481.5,242V245M481.5,248V251M481.5,254V257M481.5,260V263M481.5,266V269M481.5,272V275M481.5,278V281M481.5,284V287M481.5,290V293M481.5,296V299M481.5,302V305M481.5,308V311M481.5,314V317M481.5,320V323M481.5,326V329M481.5,332V335M481.5,338V341M481.5,344V347M481.5,350V353M481.5,356V359M481.5,362V365M481.5,368V371M481.5,374V377M481.5,380V383M481.5,386V389M481.5,392V395M481.5,398V401M481.5,404V407M481.5,410V413M481.5,416V419M481.5,422V425M481.5,428V431M481.5,434V437M481.5,440V443M481.5,446V449M481.5,452V455M481.5,458V461M481.5,464V467M481.5,470V473M481.5,476V479M481.5,482V485M481.5,488V491M481.5,494V497M481.5,500V503M481.5,506V509M481.5,512V515M481.5,518V521M481.5,524V527M481.5,530V533M481.5,536V539M481.5,542V545M481.5,548V551M481.5,554V557M481.5,560V563M481.5,566V569M481.5,572V575M481.5,578V581M481.5,584V587M481.5,590V593M481.5,596V599M481.5,602V605M481.5,608V611M481.5,614V617M481.5,620V623M481.5,626V629M481.5,632V635M481.5,638V641M481.5,644V647M481.5,650V653M481.5,656V659M481.5,662V665M481.5,668V671M481.5,674V677M481.5,680V683M481.5,686V689M481.5,692V695M481.5,698V701M481.5,704V707M481.5,710V713M481.5,716V719M481.5,722V725M481.5,728V731M481.5,734V737M481.5,740V743M481.5,746V749M481.5,752V755M481.5,758V761M481.5,764V767M481.5,770V773M481.5,776V779M481.5,782V785M481.5,788V791M481.5,794V797M481.5,800V803M481.5,806V809" stroke="#fff" stroke-width="1"/><path d="M529.5,74V77M529.5,80V83M529.5,86V89M529.5,92V95M529.5,98V101M529.5,104V107" stroke="#fff" stroke-width="1"/><path d="M529.5,110V113M529.5,116V119M529.5,122V125M529.5,128V131M529.5,134V137M529.5,140V143M529.5,146V149M529.5,152V155M529.5,158V161M529.5,164V167M529.5,170V173M529.5,176V179M529.5,182V185M529.5,188V191M529.5,194V197M529.5,200V203M529.5,206V209M529.5,212V215M529.5,218V221M529.5,224V227M529.5,230V233M529.5,236V239M529.5,242V245M529.5,248V251M529.5,254V257M529.5,260V263M529.5,266V269M529.5,272V275M529.5,278V281M529.5,284V287M529.5,290V293M529.5,296V299M529.5,302V305M529.5,308V311M529.5,314V317M529.5,320V323M529.5,326V329M529.5,332V335M529.5,338V341M529.5,344V347M529.5,350V353M529.5,356V359M529.5,362V365M529.5,368V371M529.5,374V377M529.5,380V383M529.5,386V389M529.5,392V395M529.5,398V401M529.5,404V407M529.5,410V413M529.5,416V419M529.5,422V425M529.5,428V431M529.5,434V437M529.5,440V443M529.5,446V449M529.5,452V455M529.5,458V461M529.5,464V467M529.5,470V473M529.5,476V479M529.5,482V485M529.5,488V491M529.5,494V497M529.5,500V503M529.5,506V509M529.5,512V515M529.5,518V521M529.5,524V527M529.5,530V533M529.5,536V539M529.5,542V545M529.5,548V551M529.5,554V557M529.5,560V563M529.5,566V569M529.5,572V575M529.5,578V581M529.5,584V587M529.5,590V593M529.5,596V599M529.5,602V605M529.5,608V611M529.5,614V617M529.5,620V623M529.5,626V629M529.5,632V635M529.5,638V641M529.5,644V647M529.5,650V653M529.5,656V659M529.5,662V665M529.5,668V671M529.5,674V677M529.5,680V683M529.5,686V689M529.5,692V695M529.5,698V701M529.5,704V707M529.5,710V713M529.5,716V719M529.5,722V725M529.5,728V731M529.5,734V737M529.5,740V743M529.5,746V749M529.5,752V755M529.5,758V761M529.5,764V767M529.5,770V773M529.5,776V779M529.5,782V785M529.5,788V791M529.5,794V797M529.5,800V803M529.5,806V809" stroke="#fff" stroke-width="1"/><path d="M577.5,74V77M577.5,80V83M577.5,86V89M577.5,92V95M577.5,98V101M577.5,104V107" stroke="#fff" stroke-width="1"/><path d="M577.5,110V113M577.5,116V119M577.5,122V125M577.5,128V131M577.5,134V137M577.5,140V143M577.5,146V149M577.5,152V155M577.5,158V161M577.5,164V167M577.5,170V173M577.5,176V179M577.5,182V185M577.5,188V191M577.5,194V197M577.5,200V203M577.5,206V209M577.5,212V215M577.5,218V221M577.5,224V227M577.5,230V233M577.5,236V239M577.5,242V245M577.5,248V251M577.5,254V257M577.5,260V263M577.5,266V269M577.5,272V275M577.5,278V281M577.5,284V287M577.5,290V293M577.5,296V299M577.5,302V305M577.5,308V311M577.5,314V317M577.5,320V323M577.5,326V329M577.5,332V335M577.5,338V341M577.5,344V347M577.5,350V353M577.5,356V359M577.5,362V365M577.5,368V371M577.5,374V377M577.5,380V383M577.5,386V389M577.5,392V395M577.5,398V401M577.5,404V407M577.5,410V413M577.5,416V419M577.5,422V425M577.5,428V431M577.5,434V437M577.5,440V443M577.5,446V449M577.5,452V455M577.5,458V461M577.5,464V467M577.5,470V473M577.5,476V479M577.5,482V485M577.5,488V491M577.5,494V497M577.5,500V503M577.5,506V509M577.5,512V515M577.5,518V521M577.5,524V527M577.5,530V533M577.5,536V539M577.5,542V545M577.5,548V551M577.5,554V557M577.5,560V563M577.5,566V569M577.5,572V575M577.5,578V581M577.5,584V587M577.5,590V593M577.5,596V599M577.5,602V605M577.5,608V611M577.5,614V617M577.5,620V623M577.5,626V629M577.5,632V635M577.5,638V641M577.5,644V647M577.5,650V653M577.5,656V659M577.5,662V665M577.5,668V671M577.5,674V677M577.5,680V683M577.5,686V689M577.5,692V695M577.5,698V701M577.5,704V707M577.5,710V713M577.5,716V719M577.5,722V725M577.5,728V731M577.5,734V737M577.5,740V743M577.5,746V749M577.5,752V755M577.5,758V761M577.5,764V767M577.5,770V773M577.5,776V779M577.5,782V785M577.5,788V791M577.5,794V797M577.5,800V803M577.5,806V809" stroke="#fff" stroke-width="1"/><path d="M625.5,74V77M625.5,80V83M625.5,86V89M625.5,92V95M625.5,98V101M625.5,104V107" stroke="#fff" stroke-width="1"/><path d="M625.5,110V113M625.5,116V119M625.5,122V125M625.5,128V131M625.5,134V137M625.5,140V143M625.5,146V149M625.5,152V155M625.5,158V161M625.5,164V167M625.5,170V173M625.5,176V179M625.5,182V185M625.5,188V191M625.5,194V197M625.5,200V203M625.5,206V209M625.5,212V215M625.5,218V221M625.5,224V227M625.5,230V233M625.5,236V239M625.5,242V245M625.5,248V251M625.5,254V257M625.5,260V263M625.5,266V269M625.5,272V275M625.5,278V281M625.5,284V287M625.5,290V293M625.5,296V299M625.5,302V305M625.5,308V311M625.5,314V317M625.5,320V323M625.5,326V329M625.5,332V335M625.5,338V341M625.5,344V347M625.5,350V353M625.5,356V359M625.5,362V365M625.5,368V371M625.5,374V377M625.5,380V383M625.5,386V389M625.5,392V395M625.5,398V401M625.5,404V407M625.5,410V413M625.5,416V419M625.5,422V425M625.5,428V431M625.5,434V437M625.5,440V443M625.5,446V449M625.5,452V455M625.5,458V461M625.5,464V467M625.5,470V473M625.5,476V479M625.5,482V485M625.5,488V491M625.5,494V497M625.5,500V503M625.5,506V509M625.5,512V515M625.5,518V521M625.5,524V527M625.5,530V533M625.5,536V539M625.5,542V545M625.5,548V551M625.5,554V557M625.5,560V563M625.5,566V569M625.5,572V575M625.5,578V581M625.5,584V587M625.5,590V593M625.5,596V599M625.5,602V605M625.5,608V611M625.5,614V617M625.5,620V623M625.5,626V629M625.5,632V635M625.5,638V641M625.5,644V647M625.5,650V653M625.5,656V659M625.5,662V665M625.5,668V671M625.5,674V677M625.5,680V683M625.5,686V689M625.5,692V695M625.5,698V701M625.5,704V707M625.5,710V713M625.5,716V719M625.5,722V725M625.5,728V731M625.5,734V737M625.5,740V743M625.5,746V749M625.5,752V755M625.5,758V761M625.5,764V767M625.5,770V773M625.5,776V779M625.5,782V785M625.5,788V791M625.5,794V797M625.5,800V803M625.5,806V809" stroke="#fff" stroke-width="1"/><path d="M673.5,74V77M673.5,80V83M673.5,86V89M673.5,92V95M673.5,98V101M673.5,104V107" stroke="#fff" stroke-width="1"/><path d="M673.5,110V113M673.5,116V119M673.5,122V125M673.5,128V131M673.5,134V137M673.5,140V143M673.5,146V149M673.5,152V155M673.5,158V161M673.5,164V167M673.5,170V173M673.5,176V179M673.5,182V185M673.5,188V191M673.5,194V197M673.5,200V203M673.5,206V209M673.5,212V215M673.5,218V221M673.5,224V227M673.5,230V233M673.5,236V239M673.5,242V245M673.5,248V251M673.5,254V257M673.5,260V263M673.5,266V269M673.5,272V275M673.5,278V281M673.5,284V287M673.5,290V293M673.5,296V299M673.5,302V305M673.5,308V311M673.5,314V317M673.5,320V323M673.5,326V329M673.5,332V335M673.5,338V341M673.5,344V347M673.5,350V353M673.5,356V359M673.5,362V365M673.5,368V371M673.5,374V377M673.5,380V383M673.5,386V389M673.5,392V395M673.5,398V401M673.5,404V407M673.5,410V413M673.5,416V419M673.5,422V425M673.5,428V431M673.5,434V437M673.5,440V443M673.5,446V449M673.5,452V455M673.5,458V461M673.5,464V467M673.5,470V473M673.5,476V479M673.5,482V485M673.5,488V491M673.5,494V497M673.5,500V503M673.5,506V509M673.5,512V515M673.5,518V521M673.5,524V527M673.5,530V533M673.5,536V539M673.5,542V545M673.5,548V551M673.5,554V557M673.5,560V563M673.5,566V569M673.5,572V575M673.5,578V581M673.5,584V587M673.5,590V593M673.5,596V599M673.5,602V605M673.5,608V611M673.5,614V617M673.5,620V623M673.5,626V629M673.5,632V635M673.5,638V641M673.5,644V647M673.5,650V653M673.5,656V659M673.5,662V665M673.5,668V671M673.5,674V677M673.5,680V683M673.5,686V689M673.5,692V695M673.5,698V701M673.5,704V707M673.5,710V713M673.5,716V719M673.5,722V725M673.5,728V731M673.5,734V737M673.5,740V743M673.5,746V749M673.5,752V755M673.5,758V761M673.5,764V767M673.5,770V773M673.5,776V779M673.5,782V785M673.5,788V791M673.5,794V797M673.5,800V803M673.5,806V809" stroke="#fff" stroke-width="1"/><path d="M721.5,74V77M721.5,80V83M721.5,86V89M721.5,92V95M721.5,98V101M721.5,104V107" stroke="#fff" stroke-width="1"/><path d="M721.5,110V113M721.5,116V119M721.5,122V125M721.5,128V131M721.5,134V137M721.5,140V143M721.5,146V149M721.5,152V155M721.5,158V161M721.5,164V167M721.5,170V173M721.5,176V179M721.5,182V185M721.5,188V191M721.5,194V197M721.5,200V203M721.5,206V209M721.5,212V215M721.5,218V221M721.5,224V227M721.5,230V233M721.5,236V239M721.5,242V245M721.5,248V251M721.5,254V257M721.5,260V263M721.5,266V269M721.5,272V275M721.5,278V281M721.5,284V287M721.5,290V293M721.5,296V299M721.5,302V305M721.5,308V311M721.5,314V317M721.5,320V323M721.5,326V329M721.5,332V335M721.5,338V341M721.5,344V347M721.5,350V353M721.5,356V359M721.5,362V365M721.5,368V371M721.5,374V377M721.5,380V383M721.5,386V389M721.5,392V395M721.5,398V401M721.5,404V407M721.5,410V413M721.5,416V419M721.5,422V425M721.5,428V431M721.5,434V437M721.5,440V443M721.5,446V449M721.5,452V455M721.5,458V461M721.5,464V467M721.5,470V473M721.5,476V479M721.5,482V485M721.5,488V491M721.5,494V497M721.5,500V503M721.5,506V509M721.5,512V515M721.5,518V521M721.5,524V527M721.5,530V533M721.5,536V539M721.5,542V545M721.5,548V551M721.5,554V557M721.5,560V563M721.5,566V569M721.5,572V575M721.5,578V581M721.5,584V587M721.5,590V593M721.5,596V599M721.5,602V605M721.5,608V611M721.5,614V617M721.5,620V623M721.5,626V629M721.5,632V635M721.5,638V641M721.5,644V647M721.5,650V653M721.5,656V659M721.5,662V665M721.5,668V671M721.5,674V677M721.5,680V683M721.5,686V689M721.5,692V695M721.5,698V701M721.5,704V707M721.5,710V713M721.5,716V719M721.5,722V725M721.5,728V731M721.5,734V737M721.5,740V743M721.5,746V749M721.5,752V755M721.5,758V761M721.5,764V767M721.5,770V773M721.5,776V779M721.5,782V785M721.5,788V791M721.5,794V797M721.5,800V803M721.5,806V809" stroke="#fff" stroke-width="1"/><path d="M769.5,74V77M769.5,80V83M769.5,86V89M769.5,92V95M769.5,98V101M769.5,104V107" stroke="#fff" stroke-width="1"/><path d="M769.5,110V113M769.5,116V119M769.5,122V125M769.5,128V131M769.5,134V137M769.5,140V143M769.5,146V149M769.5,152V155M769.5,158V161M769.5,164V167M769.5,170V173M769.5,176V179M769.5,182V185M769.5,188V191M769.5,194V197M769.5,200V203M769.5,206V209M769.5,212V215M769.5,218V221M769.5,224V227M769.5,230V233M769.5,236V239M769.5,242V245M769.5,248V251M769.5,254V257M769.5,260V263M769.5,266V269M769.5,272V275M769.5,278V281M769.5,284V287M769.5,290V293M769.5,296V299M769.5,302V305M769.5,308V311M769.5,314V317M769.5,320V323M769.5,326V329M769.5,332V335M769.5,338V341M769.5,344V347M769.5,350V353M769.5,356V359M769.5,362V365M769.5,368V371M769.5,374V377M769.5,380V383M769.5,386V389M769.5,392V395M769.5,398V401M769.5,404V407M769.5,410V413M769.5,416V419M769.5,422V425M769.5,428V431M769.5,434V437M769.5,440V443M769.5,446V449M769.5,452V455M769.5,458V461M769.5,464V467M769.5,470V473M769.5,476V479M769.5,482V485M769.5,488V491M769.5,494V497M769.5,500V503M769.5,506V509M769.5,512V515M769.5,518V521M769.5,524V527M769.5,530V533M769.5,536V539M769.5,542V545M769.5,548V551M769.5,554V557M769.5,560V563M769.5,566V569M769.5,572V575M769.5,578V581M769.5,584V587M769.5,590V593M769.5,596V599M769.5,602V605M769.5,608V611M769.5,614V617M769.5,620V623M769.5,626V629M769.5,632V635M769.5,638V641M769.5,644V647M769.5,650V653M769.5,656V659M769.5,662V665M769.5,668V671M769.5,674V677M769.5,680V683M769.5,686V689M769.5,692V695M769.5,698V701M769.5,704V707M769.5,710V713M769.5,716V719M769.5,722V725M769.5,728V731M769.5,734V737M769.5,740V743M769.5,746V749M769.5,752V755M769.5,758V761M769.5,764V767M769.5,770V773M769.5,776V779M769.5,782V785M769.5,788V791M769.5,794V797M769.5,800V803M769.5,806V809" stroke="#fff" stroke-width="1"/><path d="M817.5,74V77M817.5,80V83M817.5,86V89M817.5,92V95M817.5,98V101M817.5,104V107" stroke="#fff" stroke-width="1"/><path d="M817.5,110V113M817.5,116V119M817.5,122V125M817.5,128V131M817.5,134V137M817.5,140V143M817.5,146V149M817.5,152V155M817.5,158V161M817.5,164V167M817.5,170V173M817.5,176V179M817.5,182V185M817.5,188V191M817.5,194V197M817.5,200V203M817.5,206V209M817.5,212V215M817.5,218V221M817.5,224V227M817.5,230V233M817.5,236V239M817.5,242V245M817.5,248V251M817.5,254V257M817.5,260V263M817.5,266V269M817.5,272V275M817.5,278V281M817.5,284V287M817.5,290V293M817.5,296V299M817.5,302V305M817.5,308V311M817.5,314V317M817.5,320V323M817.5,326V329M817.5,332V335M817.5,338V341M817.5,344V347M817.5,350V353M817.5,356V359M817.5,362V365M817.5,368V371M817.5,374V377M817.5,380V383M817.5,386V389M817.5,392V395M817.5,398V401M817.5,404V407M817.5,410V413M817.5,416V419M817.5,422V425M817.5,428V431M817.5,434V437M817.5,440V443M817.5,446V449M817.5,452V455M817.5,458V461M817.5,464V467M817.5,470V473M817.5,476V479M817.5,482V485M817.5,488V491M817.5,494V497M817.5,500V503M817.5,506V509M817.5,512V515M817.5,518V521M817.5,524V527M817.5,530V533M817.5,536V539M817.5,542V545M817.5,548V551M817.5,554V557M817.5,560V563M817.5,566V569M817.5,572V575M817.5,578V581M817.5,584V587M817.5,590V593M817.5,596V599M817.5,602V605M817.5,608V611M817.5,614V617M817.5,620V623M817.5,626V629M817.5,632V635M817.5,638V641M817.5,644V647M817.5,650V653M817.5,656V659M817.5,662V665M817.5,668V671M817.5,674V677M817.5,680V683M817.5,686V689M817.5,692V695M817.5,698V701M817.5,704V707M817.5,710V713M817.5,716V719M817.5,722V725M817.5,728V731M817.5,734V737M817.5,740V743M817.5,746V749M817.5,752V755M817.5,758V761M817.5,764V767M817.5,770V773M817.5,776V779M817.5,782V785M817.5,788V791M817.5,794V797M817.5,800V803M817.5,806V809" stroke="#fff" stroke-width="1"/><path d="M865.5,74V77M865.5,80V83M865.5,86V89M865.5,92V95M865.5,98V101M865.5,104V107" stroke="#fff" stroke-width="1"/><path d="M865.5,110V113M865.5,116V119M865.5,122V125M865.5,128V131M865.5,134V137M865.5,140V143M865.5,146V149M865.5,152V155M865.5,158V161M865.5,164V167M865.5,170V173M865.5,176V179M865.5,182V185M865.5,188V191M865.5,194V197M865.5,200V203M865.5,206V209M865.5,212V215M865.5,218V221M865.5,224V227M865.5,230V233M865.5,236V239M865.5,242V245M865.5,248V251M865.5,254V257M865.5,260V263M865.5,266V269M865.5,272V275M865.5,278V281M865.5,284V287M865.5,290V293M865.5,296V299M865.5,302V305M865.5,308V311M865.5,314V317M865.5,320V323M865.5,326V329M865.5,332V335M865.5,338V341M865.5,344V347M865.5,350V353M865.5,356V359M865.5,362V365M865.5,368V371M865.5,374V377M865.5,380V383M865.5,386V389M865.5,392V395M865.5,398V401M865.5,404V407M865.5,410V413M865.5,416V419M865.5,422V425M865.5,428V431M865.5,434V437M865.5,440V443M865.5,446V449M865.5,452V455M865.5,458V461M865.5,464V467M865.5,470V473M865.5,476V479M865.5,482V485M865.5,488V491M865.5,494V497M865.5,500V503M865.5,506V509M865.5,512V515M865.5,518V521M865.5,524V527M865.5,530V533M865.5,536V539M865.5,542V545M865.5,548V551M865.5,554V557M865.5,560V563M865.5,566V569M865.5,572V575M865.5,578V581M865.5,584V587M865.5,590V593M865.5,596V599M865.5,602V605M865.5,608V611M865.5,614V617M865.5,620V623M865.5,626V629M865.5,632V635M865.5,638V641M865.5,644V647M865.5,650V653M865.5,656V659M865.5,662V665M865.5,668V671M865.5,674V677M865.5,680V683M865.5,686V689M865.5,692V695M865.5,698V701M865.5,704V707M865.5,710V713M865.5,716V719M865.5,722V725M865.5,728V731M865.5,734V737M865.5,740V743M865.5,746V749M865.5,752V755M865.5,758V761M865.5,764V767M865.5,770V773M865.5,776V779M865.5,782V785M865.5,788V791M865.5,794V797M865.5,800V803M865.5,806V809" stroke="#fff" stroke-width="1"/><path d="M913.5,74V77M913.5,80V83M913.5,86V89M913.5,92V95M913.5,98V101M913.5,104V107" stroke="#fff" stroke-width="1"/><path d="M913.5,110V113M913.5,116V119M913.5,122V125M913.5,128V131M913.5,134V137M913.5,140V143M913.5,146V149M913.5,152V155M913.5,158V161M913.5,164V167M913.5,170V173M913.5,176V179M913.5,182V185M913.5,188V191M913.5,194V197M913.5,200V203M913.5,206V209M913.5,212V215M913.5,218V221M913.5,224V227M913.5,230V233M913.5,236V239M913.5,242V245M913.5,248V251M913.5,254V257M913.5,260V263M913.5,266V269M913.5,272V275M913.5,278V281M913.5,284V287M913.5,290V293M913.5,296V299M913.5,302V305M913.5,308V311M913.5,314V317M913.5,320V323M913.5,326V329M913.5,332V335M913.5,338V341M913.5,344V347M913.5,350V353M913.5,356V359M913.5,362V365M913.5,368V371M913.5,374V377M913.5,380V383M913.5,386V389M913.5,392V395M913.5,398V401M913.5,404V407M913.5,410V413M913.5,416V419M913.5,422V425M913.5,428V431M913.5,434V437M913.5,440V443M913.5,446V449M913.5,452V455M913.5,458V461M913.5,464V467M913.5,470V473M913.5,476V479M913.5,482V485M913.5,488V491M913.5,494V497M913.5,500V503M913.5,506V509M913.5,512V515M913.5,518V521M913.5,524V527M913.5,530V533M913.5,536V539M913.5,542V545M913.5,548V551M913.5,554V557M913.5,560V563M913.5,566V569M913.5,572V575M913.5,578V581M913.5,584V587M913.5,590V593M913.5,596V599M913.5,602V605M913.5,608V611M913.5,614V617M913.5,620V623M913.5,626V629M913.5,632V635M913.5,638V641M913.5,644V647M913.5,650V653M913.5,656V659M913.5,662V665M913.5,668V671M913.5,674V677M913.5,680V683M913.5,686V689M913.5,692V695M913.5,698V701M913.5,704V707M913.5,710V713M913.5,716V719M913.5,722V725M913.5,728V731M913.5,734V737M913.5,740V743M913.5,746V749M913.5,752V755M913.5,758V761M913.5,764V767M913.5,770V773M913.5,776V779M913.5,782V785M913.5,788V791M913.5,794V797M913.5,800V803M913.5,806V809" stroke="#fff" stroke-width="1"/><path d="M961.5,74V77M961.5,80V83M961.5,86V89M961.5,92V95M961.5,98V101M961.5,104V107" stroke="#fff" stroke-width="1"/><path d="M961.5,110V113M961.5,116V119M961.5,122V125M961.5,128V131M961.5,134V137M961.5,140V143M961.5,146V149M961.5,152V155M961.5,158V161M961.5,164V167M961.5,170V173M961.5,176V179M961.5,182V185M961.5,188V191M961.5,194V197M961.5,200V203M961.5,206V209M961.5,212V215M961.5,218V221M961.5,224V227M961.5,230V233M961.5,236V239M961.5,242V245M961.5,248V251M961.5,254V257M961.5,260V263M961.5,266V269M961.5,272V275M961.5,278V281M961.5,284V287M961.5,290V293M961.5,296V299M961.5,302V305M961.5,308V311M961.5,314V317M961.5,320V323M961.5,326V329M961.5,332V335M961.5,338V341M961.5,344V347M961.5,350V353M961.5,356V359M961.5,362V365M961.5,368V371M961.5,374V377M961.5,380V383M961.5,386V389M961.5,392V395M961.5,398V401M961.5,404V407M961.5,410V413M961.5,416V419M961.5,422V425M961.5,428V431M961.5,434V437M961.5,440V443M961.5,446V449M961.5,452V455M961.5,458V461M961.5,464V467M961.5,470V473M961.5,476V479M961.5,482V485M961.5,488V491M961.5,494V497M961.5,500V503M961.5,506V509M961.5,512V515M961.5,518V521M961.5,524V527M961.5,530V533M961.5,536V539M961.5,542V545M961.5,548V551M961.5,554V557M961.5,560V563M961.5,566V569M961.5,572V575M961.5,578V581M961.5,584V587M961.5,590V593M961.5,596V599M961.5,602V605M961.5,608V611M961.5,614V617M961.5,620V623M961.5,626V629M961.5,632V635M961.5,638V641M961.5,644V647M961.5,650V653M961.5,656V659M961.5,662V665M961.5,668V671M961.5,674V677M961.5,680V683M961.5,686V689M961.5,692V695M961.5,698V701M961.5,704V707M961.5,710V713M961.5,716V719M961.5,722V725M961.5,728V731M961.5,734V737M961.5,740V743M961.5,746V749M961.5,752V755M961.5,758V761M961.5,764V767M961.5,770V773M961.5,776V779M961.5,782V785M961.5,788V791M961.5,794V797M961.5,800V803M961.5,806V809" stroke="#fff" stroke-width="1"/><path d="M1009.5,74V77M1009.5,80V83M1009.5,86V89M1009.5,92V95M1009.5,98V101M1009.5,104V107" stroke="#fff" stroke-width="1"/><path d="M1009.5,110V113M1009.5,116V119M1009.5,122V125M1009.5,128V131M1009.5,134V137M1009.5,140V143M1009.5,146V149M1009.5,152V155M1009.5,158V161M1009.5,164V167M1009.5,170V173M1009.5,176V179M1009.5,182V185M1009.5,188V191M1009.5,194V197M1009.5,200V203M1009.5,206V209M1009.5,212V215M1009.5,218V221M1009.5,224V227M1009.5,230V233M1009.5,236V239M1009.5,242V245M1009.5,248V251M1009.5,254V257M1009.5,260V263M1009.5,266V269M1009.5,272V275M1009.5,278V281M1009.5,284V287M1009.5,290V293M1009.5,296V299M1009.5,302V305M1009.5,308V311M1009.5,314V317M1009.5,320V323M1009.5,326V329M1009.5,332V335M1009.5,338V341M1009.5,344V347M1009.5,350V353M1009.5,356V359M1009.5,362V365M1009.5,368V371M1009.5,374V377M1009.5,380V383M1009.5,386V389M1009.5,392V395M1009.5,398V401M1009.5,404V407M1009.5,410V413M1009.5,416V419M1009.5,422V425M1009.5,428V431M1009.5,434V437M1009.5,440V443M1009.5,446V449M1009.5,452V455M1009.5,458V461M1009.5,464V467M1009.5,470V473M1009.5,476V479M1009.5,482V485M1009.5,488V491M1009.5,494V497M1009.5,500V503M1009.5,506V509M1009.5,512V515M1009.5,518V521M1009.5,524V527M1009.5,530V533M1009.5,536V539M1009.5,542V545M1009.5,548V551M1009.5,554V557M1009.5,560V563M1009.5,566V569M1009.5,572V575M1009.5,578V581M1009.5,584V587M1009.5,590V593M1009.5,596V599M1009.5,602V605M1009.5,608V611M1009.5,614V617M1009.5,620V623M1009.5,626V629M1009.5,632V635M1009.5,638V641M1009.5,644V647M1009.5,650V653M1009.5,656V659M1009.5,662V665M1009.5,668V671M1009.5,674V677M1009.5,680V683M1009.5,686V689M1009.5,692V695M1009.5,698V701M1009.5,704V707M1009.5,710V713M1009.5,716V719M1009.5,722V725M1009.5,728V731M1009.5,734V737M1009.5,740V743M1009.5,746V749M1009.5,752V755M1009.5,758V761M1009.5,764V767M1009.5,770V773M1009.5,776V779M1009.5,782V785M1009.5,788V791M1009.5,794V797M1009.5,800V803M1009.5,806V809" stroke="#fff" stroke-width="1"/><path d="M1057.5,74V77M1057.5,80V83M1057.5,86V89M1057.5,92V95M1057.5,98V101M1057.5,104V107" stroke="#fff" stroke-width="1"/><path d="M1057.5,110V113M1057.5,116V119M1057.5,122V125M1057.5,128V131M1057.5,134V137M1057.5,140V143M1057.5,146V149M1057.5,152V155M1057.5,158V161M1057.5,164V167M1057.5,170V173M1057.5,176V179M1057.5,182V185M1057.5,188V191M1057.5,194V197M1057.5,200V203M1057.5,206V209M1057.5,212V215M1057.5,218V221M1057.5,224V227M1057.5,230V233M1057.5,236V239M1057.5,242V245M1057.5,248V251M1057.5,254V257M1057.5,260V263M1057.5,266V269M1057.5,272V275M1057.5,278V281M1057.5,284V287M1057.5,290V293M1057.5,296V299M1057.5,302V305M1057.5,308V311M1057.5,314V317M1057.5,320V323M1057.5,326V329M1057.5,332V335M1057.5,338V341M1057.5,344V347M1057.5,350V353M1057.5,356V359M1057.5,362V365M1057.5,368V371M1057.5,374V377M1057.5,380V383M1057.5,386V389M1057.5,392V395M1057.5,398V401M1057.5,404V407M1057.5,410V413M1057.5,416V419M1057.5,422V425M1057.5,428V431M1057.5,434V437M1057.5,440V443M1057.5,446V449M1057.5,452V455M1057.5,458V461M1057.5,464V467M1057.5,470V473M1057.5,476V479M1057.5,482V485M1057.5,488V491M1057.5,494V497M1057.5,500V503M1057.5,506V509M1057.5,512V515M1057.5,518V521M1057.5,524V527M1057.5,530V533M1057.5,536V539M1057.5,542V545M1057.5,548V551M1057.5,554V557M1057.5,560V563M1057.5,566V569M1057.5,572V575M1057.5,578V581M1057.5,584V587M1057.5,590V593M1057.5,596V599M1057.5,602V605M1057.5,608V611M1057.5,614V617M1057.5,620V623M1057.5,626V629M1057.5,632V635M1057.5,638V641M1057.5,644V647M1057.5,650V653M1057.5,656V659M1057.5,662V665M1057.5,668V671M1057.5,674V677M1057.5,680V683M1057.5,686V689M1057.5,692V695M1057.5,698V701M1057.5,704V707M1057.5,710V713M1057.5,716V719M1057.5,722V725M1057.5,728V731M1057.5,734V737M1057.5,740V743M1057.5,746V749M1057.5,752V755M1057.5,758V761M1057.5,764V767M1057.5,770V773M1057.5,776V779M1057.5,782V785M1057.5,788V791M1057.5,794V797M1057.5,800V803M1057.5,806V809" stroke="#fff" stroke-width="1"/><path d="M1105.5,74V77M1105.5,80V83M1105.5,86V89M1105.5,92V95M1105.5,98V101M1105.5,104V107" stroke="#fff" stroke-width="1"/><path d="M1105.5,110V113M1105.5,116V119M1105.5,122V125M1105.5,128V131M1105.5,134V137M1105.5,140V143M1105.5,146V149M1105.5,152V155M1105.5,158V161M1105.5,164V167M1105.5,170V173M1105.5,176V179M1105.5,182V185M1105.5,188V191M1105.5,194V197M1105.5,200V203M1105.5,206V209M1105.5,212V215M1105.5,218V221M1105.5,224V227M1105.5,230V233M1105.5,236V239M1105.5,242V245M1105.5,248V251M1105.5,254V257M1105.5,260V263M1105.5,266V269M1105.5,272V275M1105.5,278V281M1105.5,284V287M1105.5,290V293M1105.5,296V299M1105.5,302V305M1105.5,308V311M1105.5,314V317M1105.5,320V323M1105.5,326V329M1105.5,332V335M1105.5,338V341M1105.5,344V347M1105.5,350V353M1105.5,356V359M1105.5,362V365M1105.5,368V371M1105.5,374V377M1105.5,380V383M1105.5,386V389M1105.5,392V395M1105.5,398V401M1105.5,404V407M1105.5,410V413M1105.5,416V419M1105.5,422V425M1105.5,428V431M1105.5,434V437M1105.5,440V443M1105.5,446V449M1105.5,452V455M1105.5,458V461M1105.5,464V467M1105.5,470V473M1105.5,476V479M1105.5,482V485M1105.5,488V491M1105.5,494V497M1105.5,500V503M1105.5,506V509M1105.5,512V515M1105.5,518V521M1105.5,524V527M1105.5,530V533M1105.5,536V539M1105.5,542V545M1105.5,548V551M1105.5,554V557M1105.5,560V563M1105.5,566V569M1105.5,572V575M1105.5,578V581M1105.5,584V587M1105.5,590V593M1105.5,596V599M1105.5,602V605M1105.5,608V611M1105.5,614V617M1105.5,620V623M1105.5,626V629M1105.5,632V635M1105.5,638V641M1105.5,644V647M1105.5,650V653M1105.5,656V659M1105.5,662V665M1105.5,668V671M1105.5,674V677M1105.5,680V683M1105.5,686V689M1105.5,692V695M1105.5,698V701M1105.5,704V707M1105.5,710V713M1105.5,716V719M1105.5,722V725M1105.5,728V731M1105.5,734V737M1105.5,740V743M1105.5,746V749M1105.5,752V755M1105.5,758V761M1105.5,764V767M1105.5,770V773M1105.5,776V779M1105.5,782V785M1105.5,788V791M1105.5,794V797M1105.5,800V803M1105.5,806V809" stroke="#fff" stroke-width="1"/><path d="M1153.5,74V77M1153.5,80V83M1153.5,86V89M1153.5,92V95M1153.5,98V101M1153.5,104V107" stroke="#fff" stroke-width="1"/><path d="M1153.5,110V113M1153.5,116V119M1153.5,122V125M1153.5,128V131M1153.5,134V137M1153.5,140V143M1153.5,146V149M1153.5,152V155M1153.5,158V161M1153.5,164V167M1153.5,170V173M1153.5,176V179M1153.5,182V185M1153.5,188V191M1153.5,194V197M1153.5,200V203M1153.5,206V209M1153.5,212V215M1153.5,218V221M1153.5,224V227M1153.5,230V233M1153.5,236V239M1153.5,242V245M1153.5,248V251M1153.5,254V257M1153.5,260V263M1153.5,266V269M1153.5,272V275M1153.5,278V281M1153.5,284V287M1153.5,290V293M1153.5,296V299M1153.5,302V305M1153.5,308V311M1153.5,314V317M1153.5,320V323M1153.5,326V329M1153.5,332V335M1153.5,338V341M1153.5,344V347M1153.5,350V353M1153.5,356V359M1153.5,362V365M1153.5,368V371M1153.5,374V377M1153.5,380V383M1153.5,386V389M1153.5,392V395M1153.5,398V401M1153.5,404V407M1153.5,410V413M1153.5,416V419M1153.5,422V425M1153.5,428V431M1153.5,434V437M1153.5,440V443M1153.5,446V449M1153.5,452V455M1153.5,458V461M1153.5,464V467M1153.5,470V473M1153.5,476V479M1153.5,482V485M1153.5,488V491M1153.5,494V497M1153.5,500V503M1153.5,506V509M1153.5,512V515M1153.5,518V521M1153.5,524V527M1153.5,530V533M1153.5,536V539M1153.5,542V545M1153.5,548V551M1153.5,554V557M1153.5,560V563M1153.5,566V569M1153.5,572V575M1153.5,578V581M1153.5,584V587M1153.5,590V593M1153.5,596V599M1153.5,602V605M1153.5,608V611M1153.5,614V617M1153.5,620V623M1153.5,626V629M1153.5,632V635M1153.5,638V641M1153.5,644V647M1153.5,650V653M1153.5,656V659M1153.5,662V665M1153.5,668V671M1153.5,674V677M1153.5,680V683M1153.5,686V689M1153.5,692V695M1153.5,698V701M1153.5,704V707M1153.5,710V713M1153.5,716V719M1153.5,722V725M1153.5,728V731M1153.5,734V737M1153.5,740V743M1153.5,746V749M1153.5,752V755M1153.5,758V761M1153.5,764V767M1153.5,770V773M1153.5,776V779M1153.5,782V785M1153.5,788V791M1153.5,794V797M1153.5,800V803M1153.5,806V809" stroke="#fff" stroke-width="1"/><path d="M1201.5,74V77M1201.5,80V83M1201.5,86V89M1201.5,92V95M1201.5,98V101M1201.5,104V107" stroke="#fff" stroke-width="1"/><path d="M1201.5,110V113M1201.5,116V119M1201.5,122V125M1201.5,128V131M1201.5,134V137M1201.5,140V143M1201.5,146V149M1201.5,152V155M1201.5,158V161M1201.5,164V167M1201.5,170V173M1201.5,176V179M1201.5,182V185M1201.5,188V191M1201.5,194V197M1201.5,200V203M1201.5,206V209M1201.5,212V215M1201.5,218V221M1201.5,224V227M1201.5,230V233M1201.5,236V239M1201.5,242V245M1201.5,248V251M1201.5,254V257M1201.5,260V263M1201.5,266V269M1201.5,272V275M1201.5,278V281M1201.5,284V287M1201.5,290V293M1201.5,296V299M1201.5,302V305M1201.5,308V311M1201.5,314V317M1201.5,320V323M1201.5,326V329M1201.5,332V335M1201.5,338V341M1201.5,344V347M1201.5,350V353M1201.5,356V359M1201.5,362V365M1201.5,368V371M1201.5,374V377M1201.5,380V383M1201.5,386V389M1201.5,392V395M1201.5,398V401M1201.5,404V407M1201.5,410V413M1201.5,416V419M1201.5,422V425M1201.5,428V431M1201.5,434V437M1201.5,440V443M1201.5,446V449M1201.5,452V455M1201.5,458V461M1201.5,464V467M1201.5,470V473M1201.5,476V479M1201.5,482V485M1201.5,488V491M1201.5,494V497M1201.5,500V503M1201.5,506V509M1201.5,512V515M1201.5,518V521M1201.5,524V527M1201.5,530V533M1201.5,536V539M1201.5,542V545M1201.5,548V551M1201.5,554V557M1201.5,560V563M1201.5,566V569M1201.5,572V575M1201.5,578V581M1201.5,584V587M1201.5,590V593M1201.5,596V599M1201.5,602V605M1201.5,608V611M1201.5,614V617M1201.5,620V623M1201.5,626V629M1201.5,632V635M1201.5,638V641M1201.5,644V647M1201.5,650V653M1201.5,656V659M1201.5,662V665M1201.5,668V671M1201.5,674V677M1201.5,680V683M1201.5,686V689M1201.5,692V695M1201.5,698V701M1201.5,704V707M1201.5,710V713M1201.5,716V719M1201.5,722V725M1201.5,728V731M1201.5,734V737M1201.5,740V743M1201.5,746V749M1201.5,752V755M1201.5,758V761M1201.5,764V767M1201.5,770V773M1201.5,776V779M1201.5,782V785M1201.5,788V791M1201.5,794V797M1201.5,800V803M1201.5,806V809" stroke="#fff" stroke-width="1"/><path d="M1249.5,74V77M1249.5,80V83M1249.5,86V89M1249.5,92V95M1249.5,98V101M1249.5,104V107" stroke="#fff" stroke-width="1"/><path d="M1249.5,110V113M1249.5,116V119M1249.5,122V125M1249.5,128V131M1249.5,134V137M1249.5,140V143M1249.5,146V149M1249.5,152V155M1249.5,158V161M1249.5,164V167M1249.5,170V173M1249.5,176V179M1249.5,182V185M1249.5,188V191M1249.5,194V197M1249.5,200V203M1249.5,206V209M1249.5,212V215M1249.5,218V221M1249.5,224V227M1249.5,230V233M1249.5,236V239M1249.5,242V245M1249.5,248V251M1249.5,254V257M1249.5,260V263M1249.5,266V269M1249.5,272V275M1249.5,278V281M1249.5,284V287M1249.5,290V293M1249.5,296V299M1249.5,302V305M1249.5,308V311M1249.5,314V317M1249.5,320V323M1249.5,326V329M1249.5,332V335M1249.5,338V341M1249.5,344V347M1249.5,350V353M1249.5,356V359M1249.5,362V365M1249.5,368V371M1249.5,374V377M1249.5,380V383M1249.5,386V389M1249.5,392V395M1249.5,398V401M1249.5,404V407M1249.5,410V413M1249.5,416V419M1249.5,422V425M1249.5,428V431M1249.5,434V437M1249.5,440V443M1249.5,446V449M1249.5,452V455M1249.5,458V461M1249.5,464V467M1249.5,470V473M1249.5,476V479M1249.5,482V485M1249.5,488V491M1249.5,494V497M1249.5,500V503M1249.5,506V509M1249.5,512V515M1249.5,518V521M1249.5,524V527M1249.5,530V533M1249.5,536V539M1249.5,542V545M1249.5,548V551M1249.5,554V557M1249.5,560V563M1249.5,566V569M1249.5,572V575M1249.5,578V581M1249.5,584V587M1249.5,590V593M1249.5,596V599M1249.5,602V605M1249.5,608V611M1249.5,614V617M1249.5,620V623M1249.5,626V629M1249.5,632V635M1249.5,638V641M1249.5,644V647M1249.5,650V653M1249.5,656V659M1249.5,662V665M1249.5,668V671M1249.5,674V677M1249.5,680V683M1249.5,686V689M1249.5,692V695M1249.5,698V701M1249.5,704V707M1249.5,710V713M1249.5,716V719M1249.5,722V725M1249.5,728V731M1249.5,734V737M1249.5,740V743M1249.5,746V749M1249.5,752V755M1249.5,758V761M1249.5,764V767M1249.5,770V773M1249.5,776V779M1249.5,782V785M1249.5,788V791M1249.5,794V797M1249.5,800V803M1249.5,806V809" stroke="#fff" stroke-width="1"/><path d="M1297.5,74V77M1297.5,80V83M1297.5,86V89M1297.5,92V95M1297.5,98V101M1297.5,104V107" stroke="#fff" stroke-width="1"/><path d="M1297.5,110V113M1297.5,116V119M1297.5,122V125M1297.5,128V131M1297.5,134V137M1297.5,140V143M1297.5,146V149M1297.5,152V155M1297.5,158V161M1297.5,164V167M1297.5,170V173M1297.5,176V179M1297.5,182V185M1297.5,188V191M1297.5,194V197M1297.5,200V203M1297.5,206V209M1297.5,212V215M1297.5,218V221M1297.5,224V227M1297.5,230V233M1297.5,236V239M1297.5,242V245M1297.5,248V251M1297.5,254V257M1297.5,260V263M1297.5,266V269M1297.5,272V275M1297.5,278V281M1297.5,284V287M1297.5,290V293M1297.5,296V299M1297.5,302V305M1297.5,308V311M1297.5,314V317M1297.5,320V323M1297.5,326V329M1297.5,332V335M1297.5,338V341M1297.5,344V347M1297.5,350V353M1297.5,356V359M1297.5,362V365M1297.5,368V371M1297.5,374V377M1297.5,380V383M1297.5,386V389M1297.5,392V395M1297.5,398V401M1297.5,404V407M1297.5,410V413M1297.5,416V419M1297.5,422V425M1297.5,428V431M1297.5,434V437M1297.5,440V443M1297.5,446V449M1297.5,452V455M1297.5,458V461M1297.5,464V467M1297.5,470V473M1297.5,476V479M1297.5,482V485M1297.5,488V491M1297.5,494V497M1297.5,500V503M1297.5,506V509M1297.5,512V515M1297.5,518V521M1297.5,524V527M1297.5,530V533M1297.5,536V539M1297.5,542V545M1297.5,548V551M1297.5,554V557M1297.5,560V563M1297.5,566V569M1297.5,572V575M1297.5,578V581M1297.5,584V587M1297.5,590V593M1297.5,596V599M1297.5,602V605M1297.5,608V611M1297.5,614V617M1297.5,620V623M1297.5,626V629M1297.5,632V635M1297.5,638V641M1297.5,644V647M1297.5,650V653M1297.5,656V659M1297.5,662V665M1297.5,668V671M1297.5,674V677M1297.5,680V683M1297.5,686V689M1297.5,692V695M1297.5,698V701M1297.5,704V707M1297.5,710V713M1297.5,716V719M1297.5,722V725M1297.5,728V731M1297.5,734V737M1297.5,740V743M1297.5,746V749M1297.5,752V755M1297.5,758V761M1297.5,764V767M1297.5,770V773M1297.5,776V779M1297.5,782V785M1297.5,788V791M1297.5,794V797M1297.5,800V803M1297.5,806V809" stroke="#fff" stroke-width="1"/><path d="M1345.5,74V77M1345.5,80V83M1345.5,86V89M1345.5,92V95M1345.5,98V101M1345.5,104V107" stroke="#fff" stroke-width="1"/><path d="M1345.5,110V113M1345.5,116V119M1345.5,122V125M1345.5,128V131M1345.5,134V137M1345.5,140V143M1345.5,146V149M1345.5,152V155M1345.5,158V161M1345.5,164V167M1345.5,170V173M1345.5,176V179M1345.5,182V185M1345.5,188V191M1345.5,194V197M1345.5,200V203M1345.5,206V209M1345.5,212V215M1345.5,218V221M1345.5,224V227M1345.5,230V233M1345.5,236V239M1345.5,242V245M1345.5,248V251M1345.5,254V257M1345.5,260V263M1345.5,266V269M1345.5,272V275M1345.5,278V281M1345.5,284V287M1345.5,290V293M1345.5,296V299M1345.5,302V305M1345.5,308V311M1345.5,314V317M1345.5,320V323M1345.5,326V329M1345.5,332V335M1345.5,338V341M1345.5,344V347M1345.5,350V353M1345.5,356V359M1345.5,362V365M1345.5,368V371M1345.5,374V377M1345.5,380V383M1345.5,386V389M1345.5,392V395M1345.5,398V401M1345.5,404V407M1345.5,410V413M1345.5,416V419M1345.5,422V425M1345.5,428V431M1345.5,434V437M1345.5,440V443M1345.5,446V449M1345.5,452V455M1345.5,458V461M1345.5,464V467M1345.5,470V473M1345.5,476V479M1345.5,482V485M1345.5,488V491M1345.5,494V497M1345.5,500V503M1345.5,506V509M1345.5,512V515M1345.5,518V521M1345.5,524V527M1345.5,530V533M1345.5,536V539M1345.5,542V545M1345.5,548V551M1345.5,554V557M1345.5,560V563M1345.5,566V569M1345.5,572V575M1345.5,578V581M1345.5,584V587M1345.5,590V593M1345.5,596V599M1345.5,602V605M1345.5,608V611M1345.5,614V617M1345.5,620V623M1345.5,626V629M1345.5,632V635M1345.5,638V641M1345.5,644V647M1345.5,650V653M1345.5,656V659M1345.5,662V665M1345.5,668V671M1345.5,674V677M1345.5,680V683M1345.5,686V689M1345.5,692V695M1345.5,698V701M1345.5,704V707M1345.5,710V713M1345.5,716V719M1345.5,722V725M1345.5,728V731M1345.5,734V737M1345.5,740V743M1345.5,746V749M1345.5,752V755M1345.5,758V761M1345.5,764V767M1345.5,770V773M1345.5,776V779M1345.5,782V785M1345.5,788V791M1345.5,794V797M1345.5,800V803M1345.5,806V809" stroke="#fff" stroke-width="1"/><path d="M1393.5,74V77M1393.5,80V83M1393.5,86V89M1393.5,92V95M1393.5,98V101M1393.5,104V107" stroke="#fff" stroke-width="1"/><path d="M1393.5,110V113M1393.5,116V119M1393.5,122V125M1393.5,128V131M1393.5,134V137M1393.5,140V143M1393.5,146V149M1393.5,152V155M1393.5,158V161M1393.5,164V167M1393.5,170V173M1393.5,176V179M1393.5,182V185M1393.5,188V191M1393.5,194V197M1393.5,200V203M1393.5,206V209M1393.5,212V215M1393.5,218V221M1393.5,224V227M1393.5,230V233M1393.5,236V239M1393.5,242V245M1393.5,248V251M1393.5,254V257M1393.5,260V263M1393.5,266V269M1393.5,272V275M1393.5,278V281M1393.5,284V287M1393.5,290V293M1393.5,296V299M1393.5,302V305M1393.5,308V311M1393.5,314V317M1393.5,320V323M1393.5,326V329M1393.5,332V335M1393.5,338V341M1393.5,344V347M1393.5,350V353M1393.5,356V359M1393.5,362V365M1393.5,368V371M1393.5,374V377M1393.5,380V383M1393.5,386V389M1393.5,392V395M1393.5,398V401M1393.5,404V407M1393.5,410V413M1393.5,416V419M1393.5,422V425M1393.5,428V431M1393.5,434V437M1393.5,440V443M1393.5,446V449M1393.5,452V455M1393.5,458V461M1393.5,464V467M1393.5,470V473M1393.5,476V479M1393.5,482V485M1393.5,488V491M1393.5,494V497M1393.5,500V503M1393.5,506V509M1393.5,512V515M1393.5,518V521M1393.5,524V527M1393.5,530V533M1393.5,536V539M1393.5,542V545M1393.5,548V551M1393.5,554V557M1393.5,560V563M1393.5,566V569M1393.5,572V575M1393.5,578V581M1393.5,584V587M1393.5,590V593M1393.5,596V599M1393.5,602V605M1393.5,608V611M1393.5,614V617M1393.5,620V623M1393.5,626V629M1393.5,632V635M1393.5,638V641M1393.5,644V647M1393.5,650V653M1393.5,656V659M1393.5,662V665M1393.5,668V671M1393.5,674V677M1393.5,680V683M1393.5,686V689M1393.5,692V695M1393.5,698V701M1393.5,704V707M1393.5,710V713M1393.5,716V719M1393.5,722V725M1393.5,728V731M1393.5,734V737M1393.5,740V743M1393.5,746V749M1393.5,752V755M1393.5,758V761M1393.5,764V767M1393.5,770V773M1393.5,776V779M1393.5,782V785M1393.5,788V791M1393.5,794V797M1393.5,800V803M1393.5,806V809" stroke="#fff" stroke-width="1"/><path d="M1441.5,74V77M1441.5,80V83M1441.5,86V89M1441.5,92V95M1441.5,98V101M1441.5,104V107" stroke="#fff" stroke-width="1"/><path d="M1441.5,110V113M1441.5,116V119M1441.5,122V125M1441.5,128V131M1441.5,134V137M1441.5,140V143M1441.5,146V149M1441.5,152V155M1441.5,158V161M1441.5,164V167M1441.5,170V173M1441.5,176V179M1441.5,182V185M1441.5,188V191M1441.5,194V197M1441.5,200V203M1441.5,206V209M1441.5,212V215M1441.5,218V221M1441.5,224V227M1441.5,230V233M1441.5,236V239M1441.5,242V245M1441.5,248V251M1441.5,254V257M1441.5,260V263M1441.5,266V269M1441.5,272V275M1441.5,278V281M1441.5,284V287M1441.5,290V293M1441.5,296V299M1441.5,302V305M1441.5,308V311M1441.5,314V317M1441.5,320V323M1441.5,326V329M1441.5,332V335M1441.5,338V341M1441.5,344V347M1441.5,350V353M1441.5,356V359M1441.5,362V365M1441.5,368V371M1441.5,374V377M1441.5,380V383M1441.5,386V389M1441.5,392V395M1441.5,398V401M1441.5,404V407M1441.5,410V413M1441.5,416V419M1441.5,422V425M1441.5,428V431M1441.5,434V437M1441.5,440V443M1441.5,446V449M1441.5,452V455M1441.5,458V461M1441.5,464V467M1441.5,470V473M1441.5,476V479M1441.5,482V485M1441.5,488V491M1441.5,494V497M1441.5,500V503M1441.5,506V509M1441.5,512V515M1441.5,518V521M1441.5,524V527M1441.5,530V533M1441.5,536V539M1441.5,542V545M1441.5,548V551M1441.5,554V557M1441.5,560V563M1441.5,566V569M1441.5,572V575M1441.5,578V581M1441.5,584V587M1441.5,590V593M1441.5,596V599M1441.5,602V605M1441.5,608V611M1441.5,614V617M1441.5,620V623M1441.5,626V629M1441.5,632V635M1441.5,638V641M1441.5,644V647M1441.5,650V653M1441.5,656V659M1441.5,662V665M1441.5,668V671M1441.5,674V677M1441.5,680V683M1441.5,686V689M1441.5,692V695M1441.5,698V701M1441.5,704V707M1441.5,710V713M1441.5,716V719M1441.5,722V725M1441.5,728V731M1441.5,734V737M1441.5,740V743M1441.5,746V749M1441.5,752V755M1441.5,758V761M1441.5,764V767M1441.5,770V773M1441.5,776V779M1441.5,782V785M1441.5,788V791M1441.5,794V797M1441.5,800V803M1441.5,806V809" stroke="#fff" stroke-width="1"/><path d="M1489.5,74V77M1489.5,80V83M1489.5,86V89M1489.5,92V95M1489.5,98V101M1489.5,104V107" stroke="#fff" stroke-width="1"/><path d="M1489.5,110V113M1489.5,116V119M1489.5,122V125M1489.5,128V131M1489.5,134V137M1489.5,140V143M1489.5,146V149M1489.5,152V155M1489.5,158V161M1489.5,164V167M1489.5,170V173M1489.5,176V179M1489.5,182V185M1489.5,188V191M1489.5,194V197M1489.5,200V203M1489.5,206V209M1489.5,212V215M1489.5,218V221M1489.5,224V227M1489.5,230V233M1489.5,236V239M1489.5,242V245M1489.5,248V251M1489.5,254V257M1489.5,260V263M1489.5,266V269M1489.5,272V275M1489.5,278V281M1489.5,284V287M1489.5,290V293M1489.5,296V299M1489.5,302V305M1489.5,308V311M1489.5,314V317M1489.5,320V323M1489.5,326V329M1489.5,332V335M1489.5,338V341M1489.5,344V347M1489.5,350V353M1489.5,356V359M1489.5,362V365M1489.5,368V371M1489.5,374V377M1489.5,380V383M1489.5,386V389M1489.5,392V395M1489.5,398V401M1489.5,404V407M1489.5,410V413M1489.5,416V419M1489.5,422V425M1489.5,428V431M1489.5,434V437M1489.5,440V443M1489.5,446V449M1489.5,452V455M1489.5,458V461M1489.5,464V467M1489.5,470V473M1489.5,476V479M1489.5,482V485M1489.5,488V491M1489.5,494V497M1489.5,500V503M1489.5,506V509M1489.5,512V515M1489.5,518V521M1489.5,524V527M1489.5,530V533M1489.5,536V539M1489.5,542V545M1489.5,548V551M1489.5,554V557M1489.5,560V563M1489.5,566V569M1489.5,572V575M1489.5,578V581M1489.5,584V587M1489.5,590V593M1489.5,596V599M1489.5,602V605M1489.5,608V611M1489.5,614V617M1489.5,620V623M1489.5,626V629M1489.5,632V635M1489.5,638V641M1489.5,644V647M1489.5,650V653M1489.5,656V659M1489.5,662V665M1489.5,668V671M1489.5,674V677M1489.5,680V683M1489.5,686V689M1489.5,692V695M1489.5,698V701M1489.5,704V707M1489.5,710V713M1489.5,716V719M1489.5,722V725M1489.5,728V731M1489.5,734V737M1489.5,740V743M1489.5,746V749M1489.5,752V755M1489.5,758V761M1489.5,764V767M1489.5,770V773M1489.5,776V779M1489.5,782V785M1489.5,788V791M1489.5,794V797M1489.5,800V803M1489.5,806V809" stroke="#fff" stroke-width="1"/><path d="M1537.5,74V77M1537.5,80V83M1537.5,86V89M1537.5,92V95M1537.5,98V101M1537.5,104V107" stroke="#fff" stroke-width="1"/><path d="M1537.5,110V113M1537.5,116V119M1537.5,122V125M1537.5,128V131M1537.5,134V137M1537.5,140V143M1537.5,146V149M1537.5,152V155M1537.5,158V161M1537.5,164V167M1537.5,170V173M1537.5,176V179M1537.5,182V185M1537.5,188V191M1537.5,194V197M1537.5,200V203M1537.5,206V209M1537.5,212V215M1537.5,218V221M1537.5,224V227M1537.5,230V233M1537.5,236V239M1537.5,242V245M1537.5,248V251M1537.5,254V257M1537.5,260V263M1537.5,266V269M1537.5,272V275M1537.5,278V281M1537.5,284V287M1537.5,290V293M1537.5,296V299M1537.5,302V305M1537.5,308V311M1537.5,314V317M1537.5,320V323M1537.5,326V329M1537.5,332V335M1537.5,338V341M1537.5,344V347M1537.5,350V353M1537.5,356V359M1537.5,362V365M1537.5,368V371M1537.5,374V377M1537.5,380V383M1537.5,386V389M1537.5,392V395M1537.5,398V401M1537.5,404V407M1537.5,410V413M1537.5,416V419M1537.5,422V425M1537.5,428V431M1537.5,434V437M1537.5,440V443M1537.5,446V449M1537.5,452V455M1537.5,458V461M1537.5,464V467M1537.5,470V473M1537.5,476V479M1537.5,482V485M1537.5,488V491M1537.5,494V497M1537.5,500V503M1537.5,506V509M1537.5,512V515M1537.5,518V521M1537.5,524V527M1537.5,530V533M1537.5,536V539M1537.5,542V545M1537.5,548V551M1537.5,554V557M1537.5,560V563M1537.5,566V569M1537.5,572V575M1537.5,578V581M1537.5,584V587M1537.5,590V593M1537.5,596V599M1537.5,602V605M1537.5,608V611M1537.5,614V617M1537.5,620V623M1537.5,626V629M1537.5,632V635M1537.5,638V641M1537.5,644V647M1537.5,650V653M1537.5,656V659M1537.5,662V665M1537.5,668V671M1537.5,674V677M1537.5,680V683M1537.5,686V689M1537.5,692V695M1537.5,698V701M1537.5,704V707M1537.5,710V713M1537.5,716V719M1537.5,722V725M1537.5,728V731M1537.5,734V737M1537.5,740V743M1537.5,746V749M1537.5,752V755M1537.5,758V761M1537.5,764V767M1537.5,770V773M1537.5,776V779M1537.5,782V785M1537.5,788V791M1537.5,794V797M1537.5,800V803M1537.5,806V809" stroke="#fff" stroke-width="1"/><path d="M5,85.5H14M20,85.5H23M29,85.5H38M44,85.5H47M53,85.5H62M68,85.5H71M77,85.5H86M92,85.5H95M101,85.5H110M116,85.5H119M125,85.5H134M140,85.5H143M149,85.5H158M164,85.5H167M173,85.5H182M188,85.5H191M197,85.5H206M212,85.5H215M221,85.5H230M236,85.5H239M245,85.5H254M260,85.5H263M269,85.5H278M284,85.5H287M293,85.5H302M308,85.5H311M317,85.5H326M332,85.5H335M341,85.5H350M356,85.5H359M365,85.5H374M380,85.5H383M389,85.5H398M404,85.5H407M413,85.5H422M428,85.5H431M437,85.5H446M452,85.5H455M461,85.5H470M476,85.5H479M485,85.5H494M500,85.5H503M509,85.5H518M524,85.5H527M533,85.5H542M548,85.5H551M557,85.5H566M572,85.5H575M581,85.5H590M596,85.5H599M605,85.5H614M620,85.5H623M629,85.5H638M644,85.5H647M653,85.5H662M668,85.5H671M677,85.5H686M692,85.5H695M701,85.5H710M716,85.5H719M725,85.5H734M740,85.5H743M749,85.5H758M764,85.5H767M773,85.5H782M788,85.5H791M797,85.5H806M812,85.5H815M821,85.5H830M836,85.5H839M845,85.5H854M860,85.5H863M869,85.5H878M884,85.5H887M893,85.5H902M908,85.5H911M917,85.5H926M932,85.5H935M941,85.5H950M956,85.5H959M965,85.5H974M980,85.5H983M989,85.5H998M1004,85.5H1007M1013,85.5H1022M1028,85.5H1031M1037,85.5H1046M1052,85.5H1055M1061,85.5H1070M1076,85.5H1079M1085,85.5H1094M1100,85.5H1103M1109,85.5H1118M1124,85.5H1127M1133,85.5H1142M1148,85.5H1151M1157,85.5H1166M1172,85.5H1175M1181,85.5H1190M1196,85.5H1199M1205,85.5H1214M1220,85.5H1223M1229,85.5H1238M1244,85.5H1247M1253,85.5H1262M1268,85.5H1271M1277,85.5H1286M1292,85.5H1295M1301,85.5H1310M1316,85.5H1319M1325,85.5H1334M1340,85.5H1343M1349,85.5H1358M1364,85.5H1367M1373,85.5H1382M1388,85.5H1391M1397,85.5H1406M1412,85.5H1415M1421,85.5H1430M1436,85.5H1439M1445,85.5H1454M1460,85.5H1463M1469,85.5H1478M1484,85.5H1487M1493,85.5H1502M1508,85.5H1511M1517,85.5H1526M1532,85.5H1535M1541,85.5H1550M1556,85.5H1559M1565,85.5H1574M1580,85.5H1583M1589,85.5H1598M1604,85.5H1607M1613,85.5H1622M1628,85.5H1631M1637,85.5H1646M1652,85.5H1655M1661,85.5H1670M1676,85.5H1679M1685,85.5H1694M1700,85.5H1703M1709,85.5H1718M1724,85.5H1727M1733,85.5H1742M1748,85.5H1751M1757,85.5H1766M1772,85.5H1775M1781,85.5H1790M1796,85.5H1799M1805,85.5H1814M1820,85.5H1823M1829,85.5H1838M1844,85.5H1847M1853,85.5H1862M1868,85.5H1871" stroke="#32cd32" stroke-width="1"/><path d="M5,96.5H1872" stroke="#778899" stroke-width="1"/><polyline points="7.0,88.3 32.0,88.8 62.0,89.3 92.0,88.3 112.0,88.8 132.0,87.8 152.0,89.3 187.0,89.8 205.3,91.3 217.0,91.8 225.3,94.6 231.2,99.6 235.3,100.5 252.0,99.6 268.7,98.0 285.3,96.8 308.7,95.5 317.0,91.3 318.7,86.3 323.7,88.0 335.3,89.6 352.0,90.5 360.3,87.1 368.7,88.0 385.3,93.0 402.0,93.0 415.3,97.1 452.0,95.5 485.3,96.3 512.0,95.5 515.3,100.5 522.0,101.3 540.3,101.3 543.7,103.8 555.3,105.5 577.0,103.8 579.5,99.6 588.7,101.3 613.7,99.6 625.3,96.3 655.3,96.3 658.7,93.0 663.7,98.0 688.7,97.1 705.3,98.8 712.0,96.3 738.7,97.1 757.0,97.1 772.0,99.6 798.7,95.5 803.7,88.0 812.0,90.5 815.3,87.1 823.7,87.1 825.3,92.1 830.3,89.6 842.0,92.5 848.7,92.5 855.3,87.1 867.0,86.3 883.7,88.0 892.0,84.6 900.3,87.1 917.0,88.0 933.7,88.8 950.3,89.6 952.0,87.1 963.7,87.1 975.3,85.5 985.3,80.8 995.3,83.0 1000.3,80.1 1008.7,81.3 1017.0,83.0 1025.3,83.8 1033.7,82.1 1042.0,79.6 1050.3,81.3 1060.3,82.1 1062.0,86.3 1075.3,85.5 1108.7,86.3 1122.0,85.5 1138.7,88.8 1150.3,87.1 1162.0,86.3 1172.0,88.0 1187.0,83.8 1200.3,87.1 1202.0,89.6 1220.3,90.1 1225.3,91.3 1240.3,88.8 1242.0,86.3 1250.3,91.3 1251.2,99.6 1262.0,103.0 1278.7,100.5 1286.2,95.5 1295.3,98.0 1298.7,93.8 1312.0,96.3 1322.0,93.8 1328.7,95.5 1337.0,91.3 1353.7,90.5 1370.3,88.0 1382.0,86.3 1395.3,88.0 1407.0,89.8 1414.5,89.8 1415.8,91.8 1425.3,92.8 1435.3,90.6 1443.7,90.2 1460.3,90.6 1465.3,89.4 1474.5,91.0 1478.7,90.6 1479.9,94.8 1482.0,96.0 1485.3,94.4 1490.3,94.8 1491.6,97.8 1493.7,96.0 1497.0,96.0 1498.7,96.8" fill="none" stroke="#ff0000" stroke-width="1.5"/><polyline points="5.0,87.5 7.5,86.0 10.0,87.6 12.5,89.2 15.0,86.7 17.5,87.8 20.0,87.8 22.5,86.3 25.0,86.9 27.5,89.0 30.0,88.0 32.5,87.0 35.0,88.1 37.5,89.6 40.0,89.7 42.5,88.2 45.0,89.2 47.5,88.3 50.0,89.8 52.5,87.4 55.0,88.4 57.5,89.5 60.0,88.5 62.5,87.4 65.0,89.8 67.5,87.2 70.0,89.2 72.5,87.1 75.0,88.0 77.5,87.9 80.0,89.3 82.5,87.8 85.0,87.7 87.5,87.6 90.0,87.5 92.5,87.6 95.0,87.6 97.5,88.7 100.0,86.2 102.5,87.8 105.0,87.9 107.5,86.9 110.0,88.0 112.5,88.9 115.0,87.8 117.5,89.1 120.0,86.0 122.5,87.4 125.0,87.2 127.5,85.6 130.0,87.0 132.5,87.2 135.0,88.4 137.5,87.6 140.0,88.8 142.5,87.9 145.0,88.1 147.5,88.3 150.0,88.5 152.5,87.0 155.0,88.6 157.5,88.6 160.0,88.6 162.5,88.7 165.0,90.2 167.5,88.8 170.0,87.3 172.5,88.8 175.0,88.9 177.5,90.4 180.0,87.9 182.5,89.0 185.0,89.0 187.6,87.7 190.2,87.9 192.8,88.1 195.5,89.9 198.1,90.1 200.7,90.3 203.3,90.5 206.2,90.6 209.2,90.8 212.1,90.9 215.0,91.0 217.8,91.9 220.5,91.9 223.3,93.8 226.2,96.3 229.2,98.8 233.3,99.7 236.1,99.5 238.9,99.4 241.7,100.8 244.4,97.6 247.2,98.0 250.0,98.8 252.8,98.5 255.6,96.8 258.4,98.0 261.1,97.7 263.9,97.5 266.7,97.2 269.5,96.0 272.2,97.8 275.0,96.6 277.8,96.4 280.5,97.2 283.3,96.0 285.9,97.4 288.5,97.2 291.1,95.6 293.7,95.4 296.3,95.3 298.9,95.1 301.5,96.5 304.1,94.8 306.7,94.7 309.5,93.3 312.2,93.4 315.0,90.5 316.7,85.5 319.2,86.3 321.7,87.2 324.6,89.1 327.5,86.5 330.4,89.9 333.3,88.8 336.1,90.0 338.9,89.1 341.6,89.2 344.4,89.4 347.2,89.5 350.0,89.7 352.8,89.6 355.5,88.4 358.3,86.3 361.1,85.6 363.9,86.9 366.7,87.2 369.5,88.0 372.2,88.9 375.0,89.7 377.8,89.5 380.5,91.4 383.3,92.2 386.1,93.7 388.9,90.7 391.6,90.7 394.4,92.2 397.2,91.2 400.0,92.2 402.7,93.0 405.3,95.3 408.0,96.2 410.6,97.0 413.3,96.3 415.9,97.7 418.5,96.1 421.2,96.0 423.8,97.3 426.4,94.7 429.0,96.6 431.6,95.5 434.3,96.4 436.9,95.3 439.5,95.2 442.1,95.0 444.8,93.4 447.4,93.8 450.0,94.7 452.6,94.8 455.1,93.8 457.7,94.9 460.2,94.9 462.8,93.5 465.4,94.1 467.9,95.1 470.5,96.2 473.1,96.8 475.6,95.3 478.2,95.4 480.7,93.9 483.3,95.5 486.0,93.9 488.6,95.3 491.3,95.3 494.0,95.2 496.6,95.1 499.3,95.0 502.0,94.9 504.7,94.9 507.3,94.8 510.0,94.7 513.3,99.7 516.6,100.1 520.0,100.5 522.6,100.5 525.2,100.5 527.8,99.0 530.5,100.5 533.1,100.5 535.7,100.5 538.3,100.5 541.7,103.0 544.6,102.4 547.5,104.8 550.4,102.8 553.3,104.7 556.0,104.5 558.7,103.3 561.4,104.1 564.1,103.8 566.9,103.6 569.6,101.9 572.3,103.2 575.0,103.0 577.5,98.8 580.6,97.9 583.6,100.9 586.7,100.5 589.2,98.8 591.7,101.2 594.2,101.0 596.7,100.8 599.2,101.2 601.7,100.5 604.2,100.3 606.7,99.1 609.2,97.5 611.7,98.8 614.6,97.0 617.5,96.2 620.4,96.3 623.3,95.5 625.8,95.5 628.3,95.5 630.8,96.5 633.3,94.0 635.8,95.5 638.3,94.0 640.8,94.0 643.3,95.5 645.8,96.5 648.3,95.5 650.8,96.5 653.3,95.5 656.7,92.2 659.2,94.7 661.7,97.2 664.2,98.1 666.7,95.5 669.2,97.9 671.7,96.8 674.2,95.8 676.7,96.7 679.2,95.1 681.7,96.5 684.2,96.4 686.7,96.3 689.5,98.1 692.2,97.9 695.0,97.2 697.8,97.4 700.5,99.2 703.3,98.0 706.6,95.2 710.0,95.5 712.7,95.6 715.3,97.2 718.0,95.7 720.7,97.3 723.4,95.9 726.0,96.0 728.7,96.1 731.4,96.1 734.0,95.2 736.7,96.3 739.3,96.3 741.9,96.3 744.5,96.3 747.2,96.3 749.8,94.8 752.4,96.3 755.0,96.3 757.5,96.7 760.0,96.1 762.5,96.5 765.0,98.0 767.5,98.4 770.0,98.8 772.7,99.9 775.3,99.0 778.0,98.6 780.7,96.2 783.4,96.8 786.0,97.3 788.7,95.9 791.4,96.5 794.0,93.6 796.7,94.7 799.2,91.0 801.7,87.2 804.5,89.5 807.2,88.9 810.0,89.7 813.3,86.3 816.1,85.3 818.9,84.8 821.7,86.3 823.3,91.3 825.8,90.0 828.3,88.8 831.2,91.0 834.1,90.2 837.1,91.0 840.0,91.7 843.4,90.7 846.7,91.7 850.0,89.0 853.3,86.3 856.2,86.1 859.1,84.9 862.1,85.7 865.0,85.5 867.8,85.8 870.6,86.1 873.4,86.3 876.1,86.6 878.9,85.9 881.7,87.2 884.5,84.6 887.2,84.9 890.0,83.8 892.8,84.6 895.5,84.5 898.3,86.3 901.1,87.5 903.9,87.6 906.6,86.8 909.4,85.9 912.2,87.0 915.0,87.2 917.8,87.3 920.6,86.5 923.4,87.6 926.1,87.7 928.9,86.4 931.7,88.0 934.5,89.1 937.2,88.3 940.0,88.4 942.8,88.5 945.5,89.7 948.3,88.8 950.0,86.3 952.9,86.3 955.9,87.3 958.8,86.3 961.7,86.3 964.6,85.9 967.5,87.0 970.4,85.1 973.3,84.7 975.8,85.0 978.3,82.3 980.8,79.7 983.3,80.0 985.8,80.5 988.3,82.1 990.8,83.2 993.3,82.2 995.8,80.8 998.3,79.3 1001.1,80.7 1003.9,80.1 1006.7,80.5 1009.5,81.1 1012.2,81.6 1015.0,82.2 1017.8,81.0 1020.5,82.7 1023.3,83.0 1026.1,82.4 1028.9,81.9 1031.7,81.3 1034.5,80.5 1037.2,80.6 1040.0,78.8 1042.8,79.4 1045.5,81.4 1048.3,80.5 1050.8,80.7 1053.3,80.9 1055.8,82.1 1058.3,81.3 1060.0,85.5 1062.7,85.3 1065.3,86.7 1068.0,86.5 1070.6,83.4 1073.3,84.7 1075.9,86.3 1078.4,85.8 1081.0,83.4 1083.6,83.4 1086.1,85.0 1088.7,83.6 1091.3,84.1 1093.9,83.7 1096.4,85.3 1099.0,85.3 1101.6,84.4 1104.1,86.9 1106.7,85.5 1109.4,83.8 1112.0,85.2 1114.7,85.0 1117.3,84.9 1120.0,84.7 1122.8,86.2 1125.6,85.8 1128.3,86.3 1131.1,86.9 1133.9,87.5 1136.7,88.0 1139.6,86.6 1142.5,87.2 1145.4,86.7 1148.3,86.3 1151.2,86.1 1154.2,87.4 1157.1,85.7 1160.0,85.5 1162.5,87.4 1165.0,86.3 1167.5,86.8 1170.0,87.2 1172.5,85.0 1175.0,85.8 1177.5,85.1 1180.0,83.4 1182.5,83.7 1185.0,83.0 1187.7,85.2 1190.3,84.3 1193.0,85.0 1195.6,84.6 1198.3,86.3 1200.0,88.8 1202.6,88.9 1205.2,88.9 1207.8,89.0 1210.5,90.1 1213.1,89.2 1215.7,89.2 1218.3,89.3 1220.8,89.9 1223.3,90.5 1225.8,90.1 1228.3,88.7 1230.8,87.8 1233.3,90.3 1235.8,88.4 1238.3,88.0 1240.0,85.5 1242.8,87.2 1245.5,87.8 1248.3,90.5 1249.2,98.8 1251.9,100.7 1254.6,100.5 1257.3,101.3 1260.0,102.2 1262.8,101.8 1265.6,100.4 1268.3,101.0 1271.1,101.5 1273.9,100.1 1276.7,99.7 1279.2,98.0 1281.7,97.4 1284.2,94.7 1287.2,95.5 1290.3,96.4 1293.3,97.2 1296.7,93.0 1299.4,93.5 1302.0,94.0 1304.7,93.0 1307.3,94.0 1310.0,95.5 1312.5,94.9 1315.0,93.2 1317.5,92.6 1320.0,93.0 1323.3,92.8 1326.7,94.7 1329.5,94.3 1332.2,91.9 1335.0,90.5 1337.8,91.4 1340.6,90.2 1343.3,90.1 1346.1,91.5 1348.9,89.8 1351.7,89.7 1354.5,90.8 1357.2,88.9 1360.0,89.5 1362.8,89.0 1365.5,86.1 1368.3,87.2 1371.2,87.8 1374.2,86.3 1377.1,87.4 1380.0,85.5 1382.7,84.3 1385.3,85.2 1388.0,86.5 1390.6,85.9 1393.3,87.2 1396.2,87.7 1399.2,88.1 1402.1,90.0 1405.0,89.0 1407.5,89.0 1410.0,88.0 1412.5,89.0 1413.8,91.0 1416.9,91.3 1420.1,93.2 1423.3,92.0 1425.8,91.5 1428.3,91.9 1430.8,90.3 1433.3,89.8 1436.1,88.7 1438.9,89.5 1441.7,89.4 1444.5,89.5 1447.2,89.5 1450.0,89.6 1452.8,89.7 1455.5,88.7 1458.3,89.8 1460.8,89.2 1463.3,88.6 1466.4,87.6 1469.4,88.2 1472.5,90.2 1476.7,89.8 1477.9,94.0 1480.0,95.2 1483.3,93.6 1485.8,92.3 1488.3,94.0 1489.6,97.0 1491.7,95.2 1495.0,95.2 1496.7,96.0" fill="none" stroke="#00ff00" stroke-width="2"/><polygon points="1493,75 1502,75 1497.5,80" fill="#8a9bb0"/><path d="M5,157.5H1872" stroke="#ff0000" stroke-width="1"/><path d="M5,338.5H1872" stroke="#ff0000" stroke-width="1"/><path d="M5,700.5H1872" stroke="#ff0000" stroke-width="1"/><path d="M5,398.5H8M11,398.5H14M17,398.5H20M23,398.5H26M29,398.5H32M35,398.5H38M41,398.5H44M47,398.5H50M53,398.5H56M59,398.5H62M65,398.5H68M71,398.5H74M77,398.5H80M83,398.5H86M89,398.5H92M95,398.5H98M101,398.5H104M107,398.5H110M113,398.5H116M119,398.5H122M125,398.5H128M131,398.5H134M137,398.5H140M143,398.5H146M149,398.5H152M155,398.5H158M161,398.5H164M167,398.5H170M173,398.5H176M179,398.5H182M185,398.5H188M191,398.5H194M197,398.5H200M203,398.5H206M209,398.5H212M215,398.5H218M221,398.5H224M227,398.5H230M233,398.5H236M239,398.5H242M245,398.5H248M251,398.5H254M257,398.5H260M263,398.5H266M269,398.5H272M275,398.5H278M281,398.5H284M287,398.5H290M293,398.5H296M299,398.5H302M305,398.5H308M311,398.5H314M317,398.5H320M323,398.5H326M329,398.5H332M335,398.5H338M341,398.5H344M347,398.5H350M353,398.5H356M359,398.5H362M365,398.5H368M371,398.5H374M377,398.5H380M383,398.5H386M389,398.5H392M395,398.5H398M401,398.5H404M407,398.5H410M413,398.5H416M419,398.5H422M425,398.5H428M431,398.5H434M437,398.5H440M443,398.5H446M449,398.5H452M455,398.5H458M461,398.5H464M467,398.5H470M473,398.5H476M479,398.5H482M485,398.5H488M491,398.5H494M497,398.5H500M503,398.5H506M509,398.5H512M515,398.5H518M521,398.5H524M527,398.5H530M533,398.5H536M539,398.5H542M545,398.5H548M551,398.5H554M557,398.5H560M563,398.5H566M569,398.5H572M575,398.5H578M581,398.5H584M587,398.5H590M593,398.5H596M599,398.5H602M605,398.5H608M611,398.5H614M617,398.5H620M623,398.5H626M629,398.5H632M635,398.5H638M641,398.5H644M647,398.5H650M653,398.5H656M659,398.5H662M665,398.5H668M671,398.5H674M677,398.5H680M683,398.5H686M689,398.5H692M695,398.5H698M701,398.5H704M707,398.5H710M713,398.5H716M719,398.5H722M725,398.5H728M731,398.5H734M737,398.5H740M743,398.5H746M749,398.5H752M755,398.5H758M761,398.5H764M767,398.5H770M773,398.5H776M779,398.5H782M785,398.5H788M791,398.5H794M797,398.5H800M803,398.5H806M809,398.5H812M815,398.5H818M821,398.5H824M827,398.5H830M833,398.5H836M839,398.5H842M845,398.5H848M851,398.5H854M857,398.5H860M863,398.5H866M869,398.5H872M875,398.5H878M881,398.5H884M887,398.5H890M893,398.5H896M899,398.5H902M905,398.5H908M911,398.5H914M917,398.5H920M923,398.5H926M929,398.5H932M935,398.5H938M941,398.5H944M947,398.5H950M953,398.5H956M959,398.5H962M965,398.5H968M971,398.5H974M977,398.5H980M983,398.5H986M989,398.5H992M995,398.5H998M1001,398.5H1004M1007,398.5H1010M1013,398.5H1016M1019,398.5H1022M1025,398.5H1028M1031,398.5H1034M1037,398.5H1040M1043,398.5H1046M1049,398.5H1052M1055,398.5H1058M1061,398.5H1064M1067,398.5H1070M1073,398.5H1076M1079,398.5H1082M1085,398.5H1088M1091,398.5H1094M1097,398.5H1100M1103,398.5H1106M1109,398.5H1112M1115,398.5H1118M1121,398.5H1124M1127,398.5H1130M1133,398.5H1136M1139,398.5H1142M1145,398.5H1148M1151,398.5H1154M1157,398.5H1160M1163,398.5H1166M1169,398.5H1172M1175,398.5H1178M1181,398.5H1184M1187,398.5H1190M1193,398.5H1196M1199,398.5H1202M1205,398.5H1208M1211,398.5H1214M1217,398.5H1220M1223,398.5H1226M1229,398.5H1232M1235,398.5H1238M1241,398.5H1244M1247,398.5H1250M1253,398.5H1256M1259,398.5H1262M1265,398.5H1268M1271,398.5H1274M1277,398.5H1280M1283,398.5H1286M1289,398.5H1292M1295,398.5H1298M1301,398.5H1304M1307,398.5H1310M1313,398.5H1316M1319,398.5H1322M1325,398.5H1328M1331,398.5H1334M1337,398.5H1340M1343,398.5H1346M1349,398.5H1352M1355,398.5H1358M1361,398.5H1364M1367,398.5H1370M1373,398.5H1376M1379,398.5H1382M1385,398.5H1388M1391,398.5H1394M1397,398.5H1400M1403,398.5H1406M1409,398.5H1412M1415,398.5H1418M1421,398.5H1424M1427,398.5H1430M1433,398.5H1436M1439,398.5H1442M1445,398.5H1448M1451,398.5H1454M1457,398.5H1460M1463,398.5H1466M1469,398.5H1472M1475,398.5H1478M1481,398.5H1484M1487,398.5H1490M1493,398.5H1496M1499,398.5H1502M1505,398.5H1508M1511,398.5H1514M1517,398.5H1520M1523,398.5H1526M1529,398.5H1532M1535,398.5H1538M1541,398.5H1544M1547,398.5H1550M1553,398.5H1556M1559,398.5H1562M1565,398.5H1568M1571,398.5H1574M1577,398.5H1580M1583,398.5H1586M1589,398.5H1592M1595,398.5H1598M1601,398.5H1604M1607,398.5H1610M1613,398.5H1616M1619,398.5H1622M1625,398.5H1628M1631,398.5H1634M1637,398.5H1640M1643,398.5H1646M1649,398.5H1652M1655,398.5H1658M1661,398.5H1664M1667,398.5H1670M1673,398.5H1676M1679,398.5H1682M1685,398.5H1688M1691,398.5H1694M1697,398.5H1700M1703,398.5H1706M1709,398.5H1712M1715,398.5H1718M1721,398.5H1724M1727,398.5H1730M1733,398.5H1736M1739,398.5H1742M1745,398.5H1748M1751,398.5H1754M1757,398.5H1760M1763,398.5H1766M1769,398.5H1772M1775,398.5H1778M1781,398.5H1784M1787,398.5H1790M1793,398.5H1796M1799,398.5H1802M1805,398.5H1808M1811,398.5H1814M1817,398.5H1820M1823,398.5H1826M1829,398.5H1832M1835,398.5H1838M1841,398.5H1844M1847,398.5H1850M1853,398.5H1856M1859,398.5H1862M1865,398.5H1868M1871,398.5H1872" stroke="#4a8cd0" stroke-width="1"/><rect x="280" y="110" width="2" height="700" fill="#ff4500"/><rect x="287" y="110" width="2" height="700" fill="#ff4500"/><rect x="385" y="110" width="2" height="700" fill="#ff4500"/><rect x="481" y="110" width="2" height="700" fill="#ff4500"/><rect x="529" y="110" width="2" height="700" fill="#ff4500"/><rect x="577" y="110" width="2" height="700" fill="#ff4500"/><rect x="625" y="110" width="2" height="700" fill="#ff4500"/><rect x="673" y="110" width="2" height="700" fill="#ff4500"/><rect x="721" y="110" width="2" height="700" fill="#ff4500"/><rect x="817" y="110" width="2" height="700" fill="#ff4500"/><rect x="289" y="518" width="722" height="2" fill="#ff4500"/><rect x="1011" y="517" width="486" height="2" fill="#ff4500"/><polyline points="824.50,502.75 825.38,514.70 826.25,531.50 826.88,539.87 827.50,554.00 828.50,541.95 829.50,534.00 830.38,525.90 831.25,519.00 832.50,510.91 833.75,506.20 835.00,499.00 836.25,490.63 837.50,483.75 838.75,474.00 840.00,468.11 841.25,466.50 842.25,462.84 843.25,460.25 844.38,465.06 845.50,471.50 846.50,477.96 847.50,486.50 848.50,503.16 849.50,524.00 850.75,534.94 852.00,549.00 853.25,567.16 854.50,589.00 855.38,591.73 856.25,599.00 857.12,592.82 858.00,589.00 859.38,584.75 860.75,585.25 861.88,588.16 863.00,596.50 864.00,598.74 865.00,601.50 866.00,593.70 867.00,591.50 868.25,587.46 869.50,587.75 870.75,579.24 872.00,571.50 873.00,569.31 874.00,571.71 875.00,569.00 876.25,568.77 877.50,574.00 878.75,569.12 880.00,566.50 881.25,559.79 882.50,556.50 883.50,560.11 884.50,569.00 885.50,576.61 886.50,591.83 887.50,599.00 888.50,617.61 889.50,639.00 890.75,619.55 892.00,604.00 893.00,600.89 894.00,601.17 895.00,596.50 896.00,586.54 897.00,583.42 898.00,574.00 899.08,566.01 900.17,562.97 901.25,556.50 902.33,553.80 903.42,559.44 904.50,556.50 905.75,559.82 907.00,569.00 908.25,561.14 909.50,556.50 910.50,553.29 911.50,555.79 912.50,554.00 913.75,550.44 915.00,554.90 916.25,551.50 917.50,547.54 918.75,545.91 920.00,542.75 921.25,543.51 922.50,548.57 923.75,549.00 924.83,545.45 925.92,547.96 927.00,545.25 927.88,548.29 928.75,551.50 930.00,536.57 931.25,526.50 932.25,525.47 933.25,527.23 934.25,524.00 935.33,536.81 936.42,551.67 937.50,564.00 938.75,550.80 940.00,542.75 941.25,531.50 942.33,540.22 943.42,551.38 944.50,559.00 945.67,547.25 946.83,542.35 948.00,530.25 949.00,542.56 950.00,559.00 951.25,576.16 952.50,599.00 953.50,588.77 954.50,581.50 955.75,579.90 957.00,584.00 958.25,574.37 959.50,565.25 960.50,565.00 961.50,567.66 962.50,566.50 963.75,565.00 965.00,565.25 966.00,562.65 967.00,566.33 968.00,564.00 969.00,572.43 970.00,584.00 970.62,597.72 971.25,616.50 972.50,619.82 973.75,626.50 975.00,628.06 976.25,631.50 977.50,636.61 978.75,644.00 980.00,648.96 981.25,659.00 982.12,685.05 983.00,716.50 984.00,699.63 985.00,684.00 986.00,678.11 987.00,680.24 988.00,674.00 989.08,662.84 990.17,656.55 991.25,645.25 992.12,651.52 993.00,659.00 994.07,676.89 995.13,699.51 996.20,717.50 996.60,722.18 997.00,730.50 997.75,729.17 998.50,728.00 999.50,717.43 1000.50,714.21 1001.50,705.00 1002.25,700.05 1003.00,697.50 1004.25,696.35 1005.50,700.00 1006.50,697.98 1007.50,700.81 1008.50,699.00 1009.75,693.93 1011.00,693.00 1011.93,689.67 1012.87,688.35 1013.80,683.60 1014.20,686.96 1014.60,692.80 1015.80,670.73 1017.00,654.40 1018.10,657.78 1019.20,666.70 1020.10,660.54 1021.00,656.00 1022.00,650.33 1023.00,647.50 1024.20,650.57 1025.40,654.40 1026.43,650.80 1027.47,652.25 1028.50,647.50 1029.25,667.45 1030.00,692.80 1030.75,699.87 1031.50,709.80 1032.53,726.25 1033.57,745.17 1034.60,762.00 1035.30,760.95 1036.00,763.60 1037.25,768.12 1038.50,778.20 1039.25,767.46 1040.00,757.50 1040.40,760.41 1040.80,768.00 1041.80,756.26 1042.80,745.25 1043.80,733.00 1044.60,738.32 1045.40,745.00 1046.20,729.94 1047.00,719.00 1048.10,713.78 1049.20,710.50 1050.35,709.68 1051.50,711.00 1052.15,715.44 1052.80,723.60 1053.70,719.49 1054.60,716.00 1055.63,715.81 1056.67,720.37 1057.70,722.00 1058.85,704.37 1060.00,689.80 1061.15,690.55 1062.30,692.80 1063.05,680.71 1063.80,669.80 1064.20,652.81 1064.60,639.00 1065.42,630.19 1066.25,624.00 1067.50,615.37 1068.75,609.00 1070.00,614.01 1071.25,621.50 1072.50,623.66 1073.75,629.00 1075.00,621.02 1076.25,614.00 1077.50,607.14 1078.75,601.50 1079.83,600.44 1080.92,605.08 1082.00,604.00 1083.00,600.74 1084.00,603.22 1085.00,599.00 1086.25,600.91 1087.50,606.50 1088.75,611.43 1090.00,621.50 1091.00,610.80 1092.00,601.50 1093.25,598.03 1094.50,599.00 1095.75,604.69 1097.00,615.25 1098.25,605.67 1099.50,601.50 1100.38,606.80 1101.25,614.00 1102.50,611.81 1103.75,614.27 1105.00,610.25 1106.25,610.01 1107.50,614.08 1108.75,611.50 1110.00,606.75 1111.25,607.74 1112.50,605.25 1113.75,609.53 1115.00,615.25 1116.00,615.99 1117.00,621.86 1118.00,624.00 1119.25,626.83 1120.50,630.25 1121.50,622.13 1122.50,619.00 1123.50,603.99 1124.50,591.50 1125.38,594.13 1126.25,601.50 1127.12,587.37 1128.00,574.00 1129.25,569.04 1130.50,566.50 1131.75,561.94 1133.00,561.50 1133.75,563.95 1134.50,566.50 1135.38,553.40 1136.25,541.50 1137.12,549.45 1138.00,561.50 1139.00,570.02 1140.00,584.00 1141.00,587.34 1142.00,596.50 1143.25,600.53 1144.50,605.25 1145.50,590.40 1146.50,580.86 1147.50,565.25 1148.50,574.37 1149.50,586.50 1150.50,588.61 1151.50,595.40 1152.50,599.00 1153.62,599.73 1154.75,601.19 1155.88,601.70 1157.00,602.75 1158.00,602.34 1159.00,606.79 1160.00,606.50 1161.25,607.29 1162.50,611.50 1163.75,608.14 1165.00,606.22 1166.25,602.75 1167.50,599.22 1168.75,599.44 1170.00,594.00 1171.25,595.40 1172.50,602.75 1173.75,594.55 1175.00,592.20 1176.25,586.50 1177.50,578.81 1178.75,571.50 1179.62,564.27 1180.50,562.75 1181.50,571.99 1182.50,584.00 1183.50,621.08 1184.50,662.75 1185.38,644.89 1186.25,629.00 1187.50,620.10 1188.75,614.00 1190.00,605.58 1191.25,600.25 1192.33,601.88 1193.42,607.89 1194.50,609.00 1195.50,613.13 1196.50,619.44 1197.50,621.50 1198.50,587.72 1199.50,559.00 1200.50,557.62 1201.50,558.70 1202.50,556.50 1203.75,553.87 1205.00,556.88 1206.25,555.25 1207.50,552.58 1208.75,551.58 1210.00,549.00 1211.25,545.80 1212.50,545.71 1213.75,544.00 1215.00,542.57 1216.25,546.50 1217.50,552.43 1218.75,565.28 1220.00,571.50 1221.00,549.75 1222.00,535.05 1223.00,514.00 1224.08,520.29 1225.17,530.80 1226.25,536.50 1227.50,527.49 1228.75,521.50 1229.83,525.22 1230.92,537.25 1232.00,541.50 1233.25,525.10 1234.50,510.25 1235.50,520.43 1236.50,538.32 1237.50,549.00 1238.50,579.79 1239.50,615.25 1240.38,574.68 1241.25,539.00 1241.88,523.41 1242.50,510.25 1243.75,513.19 1245.00,521.50 1246.00,512.61 1247.00,511.08 1248.00,502.75 1249.00,466.07 1250.00,434.00 1251.00,434.20 1252.00,439.00 1252.88,434.03 1253.75,431.50 1254.38,399.33 1255.00,371.50 1255.62,340.04 1256.25,309.00 1257.12,292.97 1258.00,279.00 1258.75,272.59 1259.50,269.00 1260.75,273.97 1262.00,279.00 1262.88,286.68 1263.75,296.50 1264.62,304.58 1265.50,316.50 1266.75,298.38 1268.00,284.00 1268.75,298.30 1269.50,314.00 1270.38,318.67 1271.25,329.00 1271.88,313.88 1272.50,302.75 1273.75,309.86 1275.00,319.00 1276.00,337.02 1277.00,359.00 1277.88,364.79 1278.75,374.00 1279.62,364.90 1280.50,359.00 1281.50,352.83 1282.50,349.00 1283.50,394.75 1284.50,446.50 1285.38,414.57 1286.25,386.50 1287.12,390.65 1288.00,399.00 1289.00,390.46 1290.00,386.50 1291.25,392.31 1292.50,404.00 1293.75,418.93 1295.00,434.00 1296.00,463.40 1297.00,496.50 1298.00,488.45 1299.00,485.60 1300.00,479.00 1301.00,467.80 1302.00,459.15 1303.00,449.00 1304.25,453.41 1305.50,459.00 1306.75,451.62 1308.00,446.50 1309.08,432.87 1310.17,420.59 1311.25,406.50 1312.12,410.03 1313.00,419.00 1314.00,431.10 1315.00,446.50 1316.25,457.48 1317.50,471.50 1318.50,484.85 1319.50,504.00 1320.50,495.63 1321.50,493.65 1322.50,484.00 1323.75,475.84 1325.00,471.50 1326.25,477.82 1327.50,489.00 1328.75,503.77 1330.00,519.00 1331.00,537.21 1332.00,559.00 1332.88,559.22 1333.75,564.00 1334.62,562.61 1335.50,561.50 1336.50,563.71 1337.50,571.50 1338.75,572.69 1340.00,576.25 1341.25,576.50 1342.50,577.24 1343.75,579.00 1345.00,575.01 1346.25,574.00 1347.33,570.92 1348.42,571.68 1349.50,570.25 1350.75,576.79 1352.00,589.00 1352.88,581.49 1353.75,576.50 1355.00,582.42 1356.25,591.50 1357.50,582.21 1358.75,576.50 1360.00,584.15 1361.25,594.00 1362.50,605.64 1363.75,619.00 1365.00,622.03 1366.25,629.00 1367.12,634.82 1368.00,644.00 1369.00,655.65 1370.00,669.00 1371.25,656.85 1372.50,649.00 1373.50,651.86 1374.50,656.50 1375.38,646.46 1376.25,636.50 1377.50,647.01 1378.75,659.00 1379.62,663.87 1380.50,669.00 1381.58,662.70 1382.67,659.60 1383.75,651.50 1385.00,649.08 1386.25,649.00 1387.50,638.81 1388.75,634.00 1390.00,628.42 1391.25,627.48 1392.50,624.00 1393.75,622.28 1395.00,626.50 1396.25,621.17 1397.50,621.50 1398.50,625.45 1399.50,632.55 1400.50,634.00 1401.50,623.96 1402.50,616.50 1403.75,610.90 1405.00,611.09 1406.25,604.00 1407.50,601.60 1408.75,602.24 1410.00,599.00 1411.25,588.69 1412.50,584.00 1413.75,566.83 1415.00,554.00 1416.25,550.09 1417.50,549.00 1418.50,553.56 1419.50,564.00 1420.38,552.80 1421.25,546.50 1422.33,548.02 1423.42,553.51 1424.50,556.50 1425.50,558.79 1426.50,566.20 1427.50,569.00 1428.75,575.89 1430.00,584.00 1431.25,590.09 1432.50,596.50 1433.75,603.04 1435.00,612.75 1436.25,609.25 1437.50,606.50 1438.75,605.92 1440.00,608.00 1441.38,604.65 1442.75,605.30 1444.12,603.03 1445.50,603.50 1446.40,598.59 1447.30,595.25 1448.20,597.18 1449.10,602.60 1450.03,598.89 1450.97,600.03 1451.90,595.25 1453.25,592.73 1454.60,593.40 1455.70,586.31 1456.80,585.20 1457.55,584.64 1458.30,589.80 1459.20,594.00 1460.10,602.60 1461.05,611.93 1462.00,622.70 1462.90,615.96 1463.80,609.90 1464.70,600.77 1465.60,597.00 1466.95,589.20 1468.30,586.10 1469.25,579.68 1470.20,577.00 1471.10,579.57 1472.00,584.30 1472.45,574.34 1472.90,566.00 1473.65,584.94 1474.40,608.00 1475.00,590.81 1475.60,577.00 1476.55,552.37 1477.50,531.30 1478.40,520.25 1479.30,513.00 1480.50,516.24 1481.70,524.00 1482.80,528.88 1483.90,534.90 1485.25,532.35 1486.60,531.30 1487.50,525.61 1488.40,525.80 1489.35,513.00 1490.30,505.70 1491.20,507.61 1492.10,514.80 1493.00,515.58 1493.90,516.60 1494.35,507.32 1494.80,498.40 1495.55,487.51 1496.30,478.25" fill="none" stroke="#2e9e2e" stroke-width="1"/><polyline points="359.50,521.25 360.00,521.52 360.50,524.50 361.25,518.07 362.00,515.00 362.88,499.73 363.75,490.00 364.12,492.35 364.50,497.50 365.38,478.48 366.25,462.50 366.88,470.74 367.50,482.50 368.12,475.70 368.75,470.00 369.38,467.21 370.00,467.50 371.00,449.36 372.00,435.00 372.62,426.37 373.25,422.50 373.88,428.47 374.50,435.00 375.38,427.84 376.25,422.50 377.25,417.23 378.25,412.50 378.88,411.82 379.50,416.00 380.38,408.92 381.25,406.00 382.50,396.62 383.75,387.50 385.00,383.80 386.25,386.00 387.12,383.86 388.00,387.50 389.25,389.29 390.50,395.00 391.75,398.65 393.00,406.00 394.08,402.19 395.17,399.38 396.25,396.00 397.50,398.08 398.75,403.51 400.00,407.00 401.25,402.30 402.50,398.75 403.12,391.15 403.75,385.00 404.62,368.66 405.50,352.50 406.50,349.23 407.50,348.75 408.50,345.55 409.50,345.00 410.38,332.47 411.25,325.00 411.88,314.69 412.50,307.50 413.50,293.08 414.50,282.50 415.00,288.50 415.50,297.50 416.25,301.76 417.00,310.00 417.50,301.13 418.00,295.00 418.75,302.92 419.50,312.50 420.38,312.01 421.25,317.50 422.25,313.26 423.25,315.00 424.12,319.35 425.00,328.75 426.25,334.13 427.50,343.75 428.12,331.55 428.75,321.25 429.62,325.56 430.50,331.25 431.50,332.88 432.50,336.25 433.75,335.46 435.00,337.38 436.25,334.50 437.25,333.15 438.25,336.74 439.25,332.89 440.25,336.77 441.25,333.75 442.50,334.33 443.75,340.00 444.38,333.75 445.00,327.50 446.25,324.37 447.50,325.23 448.75,320.00 449.62,312.34 450.50,307.50 451.50,293.93 452.50,286.25 453.12,294.43 453.75,305.00 454.62,314.16 455.50,323.75 456.50,314.99 457.50,310.00 458.75,305.16 460.00,305.00 461.25,307.32 462.50,311.25 463.12,319.11 463.75,327.50 465.00,322.75 466.25,320.00 467.33,310.44 468.42,308.94 469.50,300.00 470.50,300.90 471.50,303.24 472.50,303.75 473.75,303.86 475.00,304.76 476.25,305.00 477.50,304.48 478.75,308.75 480.00,307.38 481.25,308.76 482.50,306.25 483.50,305.66 484.50,308.32 485.50,306.30 486.50,309.64 487.50,310.00 488.50,306.32 489.50,306.85 490.50,303.49 491.50,303.64 492.50,301.25 493.75,296.07 495.00,292.50 496.00,282.92 497.00,281.58 498.00,272.50 499.00,276.59 500.00,282.50 501.00,291.10 502.00,305.00 502.88,306.87 503.75,310.00 504.62,306.32 505.50,305.00 506.50,303.06 507.50,306.25 508.50,308.70 509.50,315.00 510.38,294.07 511.25,273.75 511.88,250.16 512.50,232.50 513.12,236.86 513.75,242.50 514.38,246.73 515.00,252.50 515.62,258.93 516.25,270.00 516.88,236.51 517.50,205.00 518.12,212.86 518.75,222.50 519.38,219.78 520.00,217.50 521.25,215.98 522.50,215.00 523.75,217.00 525.00,222.50 526.25,223.02 527.50,225.00 528.75,223.20 530.00,226.12 531.25,225.00 532.50,222.39 533.75,222.50 535.00,223.37 536.25,230.00 536.88,227.92 537.50,228.75 538.50,210.15 539.50,195.00 540.38,184.90 541.25,180.00 541.88,176.95 542.50,175.00 543.50,180.79 544.50,187.50 545.38,181.02 546.25,180.00 546.88,172.55 547.50,170.00 548.50,183.00 549.50,197.50 550.38,169.43 551.25,142.50 552.12,151.53 553.00,165.00 554.00,152.18 555.00,145.00 556.00,149.41 557.00,155.00 557.50,145.90 558.00,142.50 558.75,159.85 559.50,182.50 560.38,179.44 561.25,180.00 562.33,170.40 563.42,163.64 564.50,155.00 565.38,167.38 566.25,180.00 567.12,182.11 568.00,190.00 569.00,185.53 570.00,182.50 571.25,171.64 572.50,165.00 573.50,172.98 574.50,182.50 575.38,188.78 576.25,200.00 576.62,210.71 577.00,225.00 578.25,230.37 579.50,237.50 580.38,231.97 581.25,227.50 582.50,227.84 583.75,232.50 585.00,228.54 586.25,225.00 587.12,230.56 588.00,237.50 589.00,233.32 590.00,232.50 591.00,224.94 592.00,222.50 592.88,226.91 593.75,235.00 594.75,242.91 595.75,252.50 596.62,256.62 597.50,266.25 598.50,253.76 599.50,242.50 600.75,243.70 602.00,245.00 603.00,240.86 604.00,239.67 605.00,235.00 606.25,224.19 607.50,213.75 608.75,227.60 610.00,242.50 611.00,258.89 612.00,277.50 612.50,285.78 613.00,297.50 614.00,288.36 615.00,280.00 616.00,283.91 617.00,290.00 617.88,293.58 618.75,302.50 620.00,308.31 621.25,320.00 622.50,314.28 623.75,312.50 625.00,313.55 626.25,318.75 627.50,315.75 628.75,316.67 630.00,315.00 631.12,311.77 632.25,308.80 633.38,302.89 634.50,302.50 635.75,305.40 637.00,312.50 638.00,307.11 639.00,307.56 640.00,305.00 641.25,304.34 642.50,307.50 643.50,317.30 644.50,330.00 645.38,319.68 646.25,313.75 647.12,323.42 648.00,335.00 649.25,332.63 650.50,336.25 651.58,330.61 652.67,327.05 653.75,320.00 654.62,337.79 655.50,360.00 656.25,375.42 657.00,396.25 657.88,377.16 658.75,362.50 659.38,354.14 660.00,350.00 660.62,332.62 661.25,320.00 661.88,302.88 662.50,291.25 663.75,293.94 665.00,298.75 666.00,300.44 667.00,308.95 668.00,310.00 669.00,310.51 670.00,316.25 671.00,308.75 672.00,303.75 673.00,302.21 674.00,308.01 675.00,306.25 676.25,305.16 677.50,307.50 678.50,307.50 679.50,311.25 680.50,307.19 681.50,307.16 682.50,302.50 683.75,300.67 685.00,302.50 686.08,298.51 687.17,296.92 688.25,291.25 689.12,293.27 690.00,301.25 691.25,302.36 692.50,308.75 693.50,306.15 694.50,309.08 695.50,307.50 696.75,301.54 698.00,300.00 699.00,299.51 700.00,302.50 700.62,287.43 701.25,275.00 702.25,265.61 703.25,261.25 703.88,270.37 704.50,280.00 705.38,280.25 706.25,285.00 706.88,303.66 707.50,322.50 708.75,323.20 710.00,327.50 710.75,336.68 711.50,348.75 712.00,335.56 712.50,323.75 713.75,324.15 715.00,328.75 716.00,327.26 717.00,330.59 718.00,328.75 719.00,327.86 720.00,332.50 721.25,333.61 722.50,336.25 723.75,335.80 725.00,336.32 726.25,335.00 727.33,334.22 728.42,338.11 729.50,338.75 730.50,334.49 731.50,333.97 732.50,327.50 733.75,320.52 735.00,318.83 736.25,312.50 737.33,301.07 738.42,295.98 739.50,286.25 740.75,293.63 742.00,305.00 743.00,308.57 744.00,314.63 745.00,317.50 746.00,318.42 747.00,326.91 748.00,327.50 749.08,312.36 750.17,303.65 751.25,290.00 752.50,280.13 753.75,273.75 754.62,301.55 755.50,331.25 756.50,306.47 757.50,282.50 758.75,276.01 760.00,272.50 761.25,266.24 762.50,267.55 763.75,261.25 765.00,256.62 766.25,259.10 767.50,253.75 768.75,251.67 770.00,251.25 771.25,253.24 772.50,256.25 773.75,259.90 775.00,266.25 776.00,274.80 777.00,285.00 778.25,289.36 779.50,295.00 780.38,303.76 781.25,315.00 782.33,311.46 783.42,313.15 784.50,310.00 785.50,313.22 786.50,320.85 787.50,322.50 788.38,323.30 789.25,330.00 790.62,315.52 792.00,303.75 792.88,310.40 793.75,317.50 795.00,323.66 796.25,330.00 797.12,321.13 798.00,317.50 798.50,327.38 799.00,337.50 799.25,362.87 799.50,392.50 800.00,429.54 800.50,470.00 801.25,482.82 802.00,497.50 802.88,482.63 803.75,472.50 804.62,474.94 805.50,477.50 806.50,450.84 807.50,425.00 808.50,436.14 809.50,450.00 810.38,459.93 811.25,470.00 811.88,487.51 812.50,510.00 813.50,504.29 814.50,500.00 815.50,500.41 816.50,501.81 817.50,502.50 818.75,503.53 820.00,509.67 821.25,511.25 822.33,480.19 823.42,454.88 824.50,423.75 825.38,435.70 826.25,452.50 826.88,460.87 827.50,475.00 828.50,462.95 829.50,455.00 830.38,446.90 831.25,440.00 832.50,431.91 833.75,427.20 835.00,420.00 836.25,411.63 837.50,404.75 838.75,395.00 840.00,389.11 841.25,387.50 842.25,383.84 843.25,381.25 844.38,386.06 845.50,392.50 846.50,398.96 847.50,407.50 848.50,424.16 849.50,445.00 850.75,455.94 852.00,470.00 853.25,488.16 854.50,510.00 855.38,512.73 856.25,520.00 857.12,513.82 858.00,510.00 859.38,505.75 860.75,506.25 861.88,509.16 863.00,517.50 864.00,519.74 865.00,522.50 866.00,514.70 867.00,512.50 868.25,508.46 869.50,508.75 870.75,500.24 872.00,492.50 873.00,490.31 874.00,492.71 875.00,490.00 876.25,489.77 877.50,495.00 878.75,490.12 880.00,487.50 881.25,480.79 882.50,477.50 883.50,481.11 884.50,490.00 885.50,497.61 886.50,512.83 887.50,520.00 888.50,538.61 889.50,560.00 890.75,540.55 892.00,525.00 893.00,521.89 894.00,522.17 895.00,517.50 896.00,507.54 897.00,504.42 898.00,495.00 899.08,487.01 900.17,483.97 901.25,477.50 902.33,474.80 903.42,480.44 904.50,477.50 905.75,480.82 907.00,490.00 908.25,482.14 909.50,477.50 910.50,474.29 911.50,476.79 912.50,475.00 913.75,471.44 915.00,475.90 916.25,472.50 917.50,468.54 918.75,466.91 920.00,463.75 921.25,464.51 922.50,469.57 923.75,470.00 924.83,466.45 925.92,468.96 927.00,466.25 927.88,469.29 928.75,472.50 930.00,457.57 931.25,447.50 932.25,446.47 933.25,448.23 934.25,445.00 935.33,457.81 936.42,472.67 937.50,485.00 938.75,471.80 940.00,463.75 941.25,452.50 942.33,461.22 943.42,472.38 944.50,480.00 945.67,468.25 946.83,463.35 948.00,451.25 949.00,463.56 950.00,480.00 951.25,497.16 952.50,520.00 953.50,509.77 954.50,502.50 955.75,500.90 957.00,505.00 958.25,495.37 959.50,486.25 960.50,486.00 961.50,488.66 962.50,487.50 963.75,486.00 965.00,486.25 966.00,483.65 967.00,487.33 968.00,485.00 969.00,493.43 970.00,505.00 970.62,518.72 971.25,537.50 972.50,540.82 973.75,547.50 975.00,549.06 976.25,552.50 977.50,557.61 978.75,565.00 980.00,569.96 981.25,580.00 982.12,606.05 983.00,637.50 984.00,620.63 985.00,605.00 986.00,599.11 987.00,601.24 988.00,595.00 989.08,583.84 990.17,577.55 991.25,566.25 992.12,572.52 993.00,580.00 994.07,597.89 995.13,620.51 996.20,638.50 996.60,643.18 997.00,651.50 997.75,650.17 998.50,649.00 999.50,638.43 1000.50,635.21 1001.50,626.00 1002.25,621.05 1003.00,618.50 1004.25,617.35 1005.50,621.00 1006.50,618.98 1007.50,621.81 1008.50,620.00 1009.75,614.93 1011.00,614.00 1011.93,610.67 1012.87,609.35 1013.80,604.60 1014.20,607.96 1014.60,613.80 1015.80,591.73 1017.00,575.40 1018.10,578.78 1019.20,587.70 1020.10,581.54 1021.00,577.00 1022.00,571.33 1023.00,568.50 1024.20,571.57 1025.40,575.40 1026.43,571.80 1027.47,573.25 1028.50,568.50 1029.25,588.45 1030.00,613.80 1030.75,620.87 1031.50,630.80 1032.53,647.25 1033.57,666.17 1034.60,683.00 1035.30,681.95 1036.00,684.60 1037.25,689.12 1038.50,699.20 1039.25,688.46 1040.00,678.50 1040.40,681.41 1040.80,689.00 1041.80,677.26 1042.80,666.25 1043.80,654.00 1044.60,659.32 1045.40,666.00 1046.20,650.94 1047.00,640.00 1048.10,634.78 1049.20,631.50 1050.35,630.68 1051.50,632.00 1052.15,636.44 1052.80,644.60 1053.70,640.49 1054.60,637.00 1055.63,636.81 1056.67,641.37 1057.70,643.00 1058.85,625.37 1060.00,610.80 1061.15,611.55 1062.30,613.80 1063.05,601.71 1063.80,590.80 1064.20,573.81 1064.60,560.00 1065.42,551.19 1066.25,545.00 1067.50,536.37 1068.75,530.00 1070.00,535.01 1071.25,542.50 1072.50,544.66 1073.75,550.00 1075.00,542.02 1076.25,535.00 1077.50,528.14 1078.75,522.50 1079.83,521.44 1080.92,526.08 1082.00,525.00 1083.00,521.74 1084.00,524.22 1085.00,520.00 1086.25,521.91 1087.50,527.50 1088.75,532.43 1090.00,542.50 1091.00,531.80 1092.00,522.50 1093.25,519.03 1094.50,520.00 1095.75,525.69 1097.00,536.25 1098.25,526.67 1099.50,522.50 1100.38,527.80 1101.25,535.00 1102.50,532.81 1103.75,535.27 1105.00,531.25 1106.25,531.01 1107.50,535.08 1108.75,532.50 1110.00,527.75 1111.25,528.74 1112.50,526.25 1113.75,530.53 1115.00,536.25 1116.00,536.99 1117.00,542.86 1118.00,545.00 1119.25,547.83 1120.50,551.25 1121.50,543.13 1122.50,540.00 1123.50,524.99 1124.50,512.50 1125.38,515.13 1126.25,522.50 1127.12,508.37 1128.00,495.00 1129.25,490.04 1130.50,487.50 1131.75,482.94 1133.00,482.50 1133.75,484.95 1134.50,487.50 1135.38,474.40 1136.25,462.50 1137.12,470.45 1138.00,482.50 1139.00,491.02 1140.00,505.00 1141.00,508.34 1142.00,517.50 1143.25,521.53 1144.50,526.25 1145.50,511.40 1146.50,501.86 1147.50,486.25 1148.50,495.37 1149.50,507.50 1150.50,509.61 1151.50,516.40 1152.50,520.00 1153.62,520.73 1154.75,522.19 1155.88,522.70 1157.00,523.75 1158.00,523.34 1159.00,527.79 1160.00,527.50 1161.25,528.29 1162.50,532.50 1163.75,529.14 1165.00,527.22 1166.25,523.75 1167.50,520.22 1168.75,520.44 1170.00,515.00 1171.25,516.40 1172.50,523.75 1173.75,515.55 1175.00,513.20 1176.25,507.50 1177.50,499.81 1178.75,492.50 1179.62,485.27 1180.50,483.75 1181.50,492.99 1182.50,505.00 1183.50,542.08 1184.50,583.75 1185.38,565.89 1186.25,550.00 1187.50,541.10 1188.75,535.00 1190.00,526.58 1191.25,521.25 1192.33,522.88 1193.42,528.89 1194.50,530.00 1195.50,534.13 1196.50,540.44 1197.50,542.50 1198.50,508.72 1199.50,480.00 1200.50,478.62 1201.50,479.70 1202.50,477.50 1203.75,474.87 1205.00,477.88 1206.25,476.25 1207.50,473.58 1208.75,472.58 1210.00,470.00 1211.25,466.80 1212.50,466.71 1213.75,465.00 1215.00,463.57 1216.25,467.50 1217.50,473.43 1218.75,486.28 1220.00,492.50 1221.00,470.75 1222.00,456.05 1223.00,435.00 1224.08,441.29 1225.17,451.80 1226.25,457.50 1227.50,448.49 1228.75,442.50 1229.83,446.22 1230.92,458.25 1232.00,462.50 1233.25,446.10 1234.50,431.25 1235.50,441.43 1236.50,459.32 1237.50,470.00 1238.50,500.79 1239.50,536.25 1240.38,495.68 1241.25,460.00 1241.88,444.41 1242.50,431.25 1243.75,434.19 1245.00,442.50 1246.00,433.61 1247.00,432.08 1248.00,423.75 1249.00,387.07 1250.00,355.00 1251.00,355.20 1252.00,360.00 1252.88,355.03 1253.75,352.50 1254.38,320.33 1255.00,292.50 1255.62,261.04 1256.25,230.00 1257.12,213.97 1258.00,200.00 1258.75,193.59 1259.50,190.00 1260.75,194.97 1262.00,200.00 1262.88,207.68 1263.75,217.50 1264.62,225.58 1265.50,237.50 1266.75,219.38 1268.00,205.00 1268.75,219.30 1269.50,235.00 1270.38,239.67 1271.25,250.00 1271.88,234.88 1272.50,223.75 1273.75,230.86 1275.00,240.00 1276.00,258.02 1277.00,280.00 1277.88,285.79 1278.75,295.00 1279.62,285.90 1280.50,280.00 1281.50,273.83 1282.50,270.00 1283.50,315.75 1284.50,367.50 1285.38,335.57 1286.25,307.50 1287.12,311.65 1288.00,320.00 1289.00,311.46 1290.00,307.50 1291.25,313.31 1292.50,325.00 1293.75,339.93 1295.00,355.00 1296.00,384.40 1297.00,417.50 1298.00,409.45 1299.00,406.60 1300.00,400.00 1301.00,388.80 1302.00,380.15 1303.00,370.00 1304.25,374.41 1305.50,380.00 1306.75,372.62 1308.00,367.50 1309.08,353.87 1310.17,341.59 1311.25,327.50 1312.12,331.03 1313.00,340.00 1314.00,352.10 1315.00,367.50 1316.25,378.48 1317.50,392.50 1318.50,405.85 1319.50,425.00 1320.50,416.63 1321.50,414.65 1322.50,405.00 1323.75,396.84 1325.00,392.50 1326.25,398.82 1327.50,410.00 1328.75,424.77 1330.00,440.00 1331.00,458.21 1332.00,480.00 1332.88,480.22 1333.75,485.00 1334.62,483.61 1335.50,482.50 1336.50,484.71 1337.50,492.50 1338.75,493.69 1340.00,497.25 1341.25,497.50 1342.50,498.24 1343.75,500.00 1345.00,496.01 1346.25,495.00 1347.33,491.92 1348.42,492.68 1349.50,491.25 1350.75,497.79 1352.00,510.00 1352.88,502.49 1353.75,497.50 1355.00,503.42 1356.25,512.50 1357.50,503.21 1358.75,497.50 1360.00,505.15 1361.25,515.00 1362.50,526.64 1363.75,540.00 1365.00,543.03 1366.25,550.00 1367.12,555.82 1368.00,565.00 1369.00,576.65 1370.00,590.00 1371.25,577.85 1372.50,570.00 1373.50,572.86 1374.50,577.50 1375.38,567.46 1376.25,557.50 1377.50,568.01 1378.75,580.00 1379.62,584.87 1380.50,590.00 1381.58,583.70 1382.67,580.60 1383.75,572.50 1385.00,570.08 1386.25,570.00 1387.50,559.81 1388.75,555.00 1390.00,549.42 1391.25,548.48 1392.50,545.00 1393.75,543.28 1395.00,547.50 1396.25,542.17 1397.50,542.50 1398.50,546.45 1399.50,553.55 1400.50,555.00 1401.50,544.96 1402.50,537.50 1403.75,531.90 1405.00,532.09 1406.25,525.00 1407.50,522.60 1408.75,523.24 1410.00,520.00 1411.25,509.69 1412.50,505.00 1413.75,487.83 1415.00,475.00 1416.25,471.09 1417.50,470.00 1418.50,474.56 1419.50,485.00 1420.38,473.80 1421.25,467.50 1422.33,469.02 1423.42,474.51 1424.50,477.50 1425.50,479.79 1426.50,487.20 1427.50,490.00 1428.75,496.89 1430.00,505.00 1431.25,511.09 1432.50,517.50 1433.75,524.04 1435.00,533.75 1436.25,530.25 1437.50,527.50 1438.75,526.92 1440.00,529.00 1441.38,525.65 1442.75,526.30 1444.12,524.03 1445.50,524.50 1446.40,519.59 1447.30,516.25 1448.20,518.18 1449.10,523.60 1450.03,519.89 1450.97,521.03 1451.90,516.25 1453.25,513.73 1454.60,514.40 1455.70,507.31 1456.80,506.20 1457.55,505.64 1458.30,510.80 1459.20,515.00 1460.10,523.60 1461.05,532.93 1462.00,543.70 1462.90,536.96 1463.80,530.90 1464.70,521.77 1465.60,518.00 1466.95,510.20 1468.30,507.10 1469.25,500.68 1470.20,498.00 1471.10,500.57 1472.00,505.30 1472.45,495.34 1472.90,487.00 1473.65,505.94 1474.40,529.00 1475.00,511.81 1475.60,498.00 1476.55,473.37 1477.50,452.30 1478.40,441.25 1479.30,434.00 1480.50,437.24 1481.70,445.00 1482.80,449.88 1483.90,455.90 1485.25,453.35 1486.60,452.30 1487.50,446.61 1488.40,446.80 1489.35,434.00 1490.30,426.70 1491.20,428.61 1492.10,435.80 1493.00,436.58 1493.90,437.60 1494.35,428.32 1494.80,419.40 1495.55,408.51 1496.30,399.25" fill="none" stroke="#4a8cd0" stroke-width="1"/><path d="M4.5,74.5H1872.5V107.5H4.5Z" fill="none" stroke="#fff" stroke-width="1"/><path d="M4.5,109.5H1872.5V810.5H4.5Z" fill="none" stroke="#fff" stroke-width="1"/><path d="M5.5,811V814" stroke="#fff"/><path d="M69.5,811V814" stroke="#fff"/><path d="M133.5,811V814" stroke="#fff"/><path d="M197.5,811V814" stroke="#fff"/><path d="M261.5,811V814" stroke="#fff"/><path d="M325.5,811V814" stroke="#fff"/><path d="M389.5,811V814" stroke="#fff"/><path d="M453.5,811V814" stroke="#fff"/><path d="M517.5,811V814" stroke="#fff"/><path d="M581.5,811V814" stroke="#fff"/><path d="M645.5,811V814" stroke="#fff"/><path d="M709.5,811V814" stroke="#fff"/><path d="M773.5,811V814" stroke="#fff"/><path d="M837.5,811V814" stroke="#fff"/><path d="M901.5,811V814" stroke="#fff"/><path d="M965.5,811V814" stroke="#fff"/><path d="M1029.5,811V814" stroke="#fff"/><path d="M1093.5,811V814" stroke="#fff"/><path d="M1157.5,811V814" stroke="#fff"/><path d="M1221.5,811V814" stroke="#fff"/><path d="M1285.5,811V814" stroke="#fff"/><path d="M1349.5,811V814" stroke="#fff"/><path d="M1413.5,811V814" stroke="#fff"/><path d="M1477.5,811V814" stroke="#fff"/><path d="M1873,96.5H1877" stroke="#fff"/><path d="M1873,104.5H1877" stroke="#fff"/></svg>
<div class="r" style="left:1874px;top:91px;width:41px;height:11px;background:#ffffff;"></div>
<div class="t" style="left:1878px;top:91.53px;font-size:9px;line-height:11px;color:#000;font-weight:normal;">1.03017</div>
<div class="t" style="left:1878px;top:99.53px;font-size:9px;line-height:11px;color:#fff;font-weight:normal;">1.02015</div>
<div class="t" style="left:1877px;top:111.53px;font-size:9px;line-height:11px;color:#fff;font-weight:normal;">100677.2</div>
<div class="r" style="left:1874px;top:151px;width:44px;height:11px;background:#ff0000;"></div>
<div class="t" style="left:1878px;top:151.53px;font-size:9px;line-height:11px;color:#000;font-weight:normal;">100600.00</div>
<div class="r" style="left:1874px;top:332px;width:44px;height:11px;background:#ff0000;"></div>
<div class="t" style="left:1878px;top:332.53px;font-size:9px;line-height:11px;color:#000;font-weight:normal;">100300.00</div>
<div class="r" style="left:1874px;top:392px;width:44px;height:11px;background:#4a90d9;"></div>
<div class="t" style="left:1878px;top:392.53px;font-size:9px;line-height:11px;color:#000;font-weight:normal;">100199.83</div>
<div class="r" style="left:1874px;top:694px;width:44px;height:11px;background:#ff0000;"></div>
<div class="t" style="left:1879px;top:694.53px;font-size:9px;line-height:11px;color:#000;font-weight:normal;">99700.00</div>
<div class="t" style="left:1877px;top:797.53px;font-size:9px;line-height:11px;color:#fff;font-weight:normal;">99518.08</div>
<div class="t" style="left:4px;top:813.86px;font-size:9.5px;line-height:12px;color:#fff;font-weight:normal;letter-spacing:-0.15px;">26 Dec 2024</div>
<div class="t" style="left:68px;top:813.86px;font-size:9.5px;line-height:12px;color:#fff;font-weight:normal;letter-spacing:-0.15px;">27 Dec 09:00</div>
<div class="t" style="left:132px;top:813.86px;font-size:9.5px;line-height:12px;color:#fff;font-weight:normal;letter-spacing:-0.15px;">30 Dec 17:00</div>
<div class="t" style="left:196px;top:813.86px;font-size:9.5px;line-height:12px;color:#fff;font-weight:normal;letter-spacing:-0.15px;">2 Jan 02:00</div>
<div class="t" style="left:260px;top:813.86px;font-size:9.5px;line-height:12px;color:#fff;font-weight:normal;letter-spacing:-0.15px;">3 Jan 10:00</div>
<div class="t" style="left:324px;top:813.86px;font-size:9.5px;line-height:12px;color:#fff;font-weight:normal;letter-spacing:-0.15px;">6 Jan 18:00</div>
<div class="t" style="left:388px;top:813.86px;font-size:9.5px;line-height:12px;color:#fff;font-weight:normal;letter-spacing:-0.15px;">8 Jan 02:00</div>
<div class="t" style="left:452px;top:813.86px;font-size:9.5px;line-height:12px;color:#fff;font-weight:normal;letter-spacing:-0.15px;">9 Jan 10:00</div>
<div class="t" style="left:516px;top:813.86px;font-size:9.5px;line-height:12px;color:#fff;font-weight:normal;letter-spacing:-0.15px;">10 Jan 18:00</div>
<div class="t" style="left:580px;top:813.86px;font-size:9.5px;line-height:12px;color:#fff;font-weight:normal;letter-spacing:-0.15px;">14 Jan 02:00</div>
<div class="t" style="left:644px;top:813.86px;font-size:9.5px;line-height:12px;color:#fff;font-weight:normal;letter-spacing:-0.15px;">15 Jan 10:00</div>
<div class="t" style="left:708px;top:813.86px;font-size:9.5px;line-height:12px;color:#fff;font-weight:normal;letter-spacing:-0.15px;">16 Jan 18:00</div>
<div class="t" style="left:772px;top:813.86px;font-size:9.5px;line-height:12px;color:#fff;font-weight:normal;letter-spacing:-0.15px;">20 Jan 02:00</div>
<div class="t" style="left:836px;top:813.86px;font-size:9.5px;line-height:12px;color:#fff;font-weight:normal;letter-spacing:-0.15px;">21 Jan 10:00</div>
<div class="t" style="left:900px;top:813.86px;font-size:9.5px;line-height:12px;color:#fff;font-weight:normal;letter-spacing:-0.15px;">22 Jan 18:00</div>
<div class="t" style="left:964px;top:813.86px;font-size:9.5px;line-height:12px;color:#fff;font-weight:normal;letter-spacing:-0.15px;">24 Jan 02:00</div>
<div class="t" style="left:1028px;top:813.86px;font-size:9.5px;line-height:12px;color:#fff;font-weight:normal;letter-spacing:-0.15px;">27 Jan 10:00</div>
<div class="t" style="left:1092px;top:813.86px;font-size:9.5px;line-height:12px;color:#fff;font-weight:normal;letter-spacing:-0.15px;">28 Jan 18:00</div>
<div class="t" style="left:1156px;top:813.86px;font-size:9.5px;line-height:12px;color:#fff;font-weight:normal;letter-spacing:-0.15px;">30 Jan 02:00</div>
<div class="t" style="left:1220px;top:813.86px;font-size:9.5px;line-height:12px;color:#fff;font-weight:normal;letter-spacing:-0.15px;">31 Jan 10:00</div>
<div class="t" style="left:1284px;top:813.86px;font-size:9.5px;line-height:12px;color:#fff;font-weight:normal;letter-spacing:-0.15px;">3 Feb 18:00</div>
<div class="t" style="left:1348px;top:813.86px;font-size:9.5px;line-height:12px;color:#fff;font-weight:normal;letter-spacing:-0.15px;">5 Feb 02:00</div>
<div class="t" style="left:1412px;top:813.86px;font-size:9.5px;line-height:12px;color:#fff;font-weight:normal;letter-spacing:-0.15px;">6 Feb 10:00</div>
<div class="t" style="left:1476px;top:813.86px;font-size:9.5px;line-height:12px;color:#fff;font-weight:normal;letter-spacing:-0.15px;">7 Feb 18:00</div>
<svg class="r" style="left:9px;top:78px" width="8" height="6"><polygon points="0,6 4,1 8,6" fill="#fff"/></svg>
<div class="t" style="left:20px;top:75.86px;font-size:9.5px;line-height:12px;color:#fff;font-weight:normal;letter-spacing:-0.11px;">EURUSD,M30&nbsp; 1.03055 1.03072 1.02992 1.03017</div>
<div class="t" style="left:13px;top:74.53px;font-size:9px;line-height:11px;color:#c8c8c8;font-weight:normal;">#699368808 sell 0.10</div>
<div class="t" style="left:203px;top:112.86px;font-size:9.5px;line-height:12px;color:#fff;font-weight:normal;">9 100068.52</div>
<div class="r" style="left:8px;top:92px;width:45px;height:22px;background:linear-gradient(#5a5aff,#3a3ae6);"></div>
<div class="r" style="left:156px;top:92px;width:45px;height:22px;background:linear-gradient(#5a5aff,#3a3ae6);"></div>
<div class="r" style="left:12px;top:113px;width:38px;height:1px;background:#7a7aff;"></div>
<div class="r" style="left:160px;top:113px;width:38px;height:1px;background:#7a7aff;"></div>
<div class="r" style="left:8px;top:114px;width:96px;height:34px;background:linear-gradient(#3d3de6,#0c0cb4);"></div>
<div class="r" style="left:106px;top:114px;width:95px;height:34px;background:linear-gradient(#3d3de6,#0c0cb4);"></div>
<div class="r" style="left:53px;top:92px;width:103px;height:22px;background:#000;"></div>
<div class="r" style="left:56px;top:92px;width:19px;height:20px;background:#e6e6e6;"></div>
<div class="r" style="left:134px;top:92px;width:19px;height:20px;background:#e6e6e6;"></div>
<div class="r" style="left:76px;top:92px;width:57px;height:20px;background:#ffffff;"></div>
<svg class="r" style="left:63px;top:100px" width="6" height="4"><polygon points="0,0 6,0 3,3" fill="#000"/></svg>
<svg class="r" style="left:141px;top:100px" width="6" height="4"><polygon points="0,3 6,3 3,0" fill="#000"/></svg>
<div class="t" style="left:87px;top:95.53px;font-size:12px;line-height:15px;color:#000;font-weight:normal;width:42px;text-align:right;left:87px;">0.10</div>
<div class="t" style="left:18px;top:95.53px;font-size:12px;line-height:15px;color:#fff;font-weight:normal;transform:scaleX(0.8);transform-origin:0 0;">SELL</div>
<div class="t" style="left:166px;top:95.53px;font-size:12px;line-height:15px;color:#fff;font-weight:normal;transform:scaleX(0.86);transform-origin:0 0;">BUY</div>
<div class="t" style="left:22px;top:130.53px;font-size:12px;line-height:15px;color:#fff;font-weight:bold;">1.03</div>
<div class="t" style="left:50px;top:111.42px;font-size:32px;line-height:40px;color:#fff;font-weight:normal;transform:scaleX(0.84);transform-origin:0 0;">01</div>
<div class="t" style="left:87px;top:115.53px;font-size:12px;line-height:15px;color:#fff;font-weight:normal;">7</div>
<div class="t" style="left:121px;top:130.53px;font-size:12px;line-height:15px;color:#fff;font-weight:bold;">1.03</div>
<div class="t" style="left:147px;top:111.42px;font-size:32px;line-height:40px;color:#fff;font-weight:normal;transform:scaleX(0.85);transform-origin:0 0;">03</div>
<div class="t" style="left:184px;top:115.53px;font-size:12px;line-height:15px;color:#fff;font-weight:normal;">5</div>
<div class="r" style="left:0px;top:831px;width:1920px;height:2px;background:#ffffff;"></div>
<div class="r" style="left:0px;top:833px;width:1920px;height:24px;background:#f0f0f0;"></div>
<div class="r" style="left:0px;top:833px;width:1920px;height:1px;background:#000;"></div>
<div class="r" style="left:0px;top:833px;width:2px;height:20px;background:#a0a0a0;"></div>
<div class="r" style="left:6px;top:833px;width:92px;height:19px;background:#ffffff;border:1px solid #000;border-top:none;box-sizing:border-box;"></div>
<div class="t" style="left:17px;top:835.53px;font-size:12px;line-height:15px;color:#000;font-weight:normal;transform:scaleX(0.895);transform-origin:left 0;">EURUSD,M30</div>
<div class="t" style="left:109px;top:835.53px;font-size:12px;line-height:15px;color:#6d6d6d;font-weight:normal;transform:scaleX(0.893);transform-origin:left 0;">US500,H1</div>
<div class="r" style="left:170px;top:837px;width:1px;height:12px;background:#8c8c8c;"></div>
<div class="t" style="left:181px;top:835.53px;font-size:12px;line-height:15px;color:#6d6d6d;font-weight:normal;transform:scaleX(0.927);transform-origin:left 0;">USDInd,H1</div>
<div class="r" style="left:250px;top:837px;width:1px;height:12px;background:#8c8c8c;"></div>
<svg class="r" style="left:1886px;top:838px" width="30" height="9"><polygon points="5,0 5,8 1,4" fill="#a0a0a0"/><polygon points="21,0 21,8 25,4" fill="#a0a0a0"/></svg>
<div class="r" style="left:0px;top:852px;width:1920px;height:5px;background:#f0f0f0;"></div>
<div class="r" style="left:0px;top:853px;width:1920px;height:164px;background:#f0f0f0;"></div>
<div class="t" style="left:3px;top:855.53px;font-size:12px;line-height:15px;color:#000;font-weight:bold;">×</div>
<div class="r" style="left:2px;top:871px;width:12px;height:143px;background:#d5e1ee;"></div>
<div class="t" style="left:1px;top:1012px;width:140px;height:13px;font-size:11px;line-height:13px;color:#000;transform:rotate(-90deg);transform-origin:0 0;">Терминал</div>
<div class="r" style="left:15px;top:857px;width:1902px;height:135px;background:#ffffff;box-shadow: inset 1px 1px 0 #a0a0a0;"></div>
<div class="r" style="left:16px;top:882px;width:1900px;height:1px;background:#d9d9d9;"></div>
<div class="r" style="left:16px;top:902px;width:1900px;height:1px;background:#d9d9d9;"></div>
<div class="r" style="left:16px;top:903px;width:1900px;height:19px;background:#ebebeb;"></div>
<div class="r" style="left:16px;top:922px;width:1900px;height:20px;background:#0078d7;"></div>
<div class="r" style="left:16px;top:942px;width:1900px;height:20px;background:#c8c8c8;"></div>
<div class="r" style="left:203px;top:858px;width:1px;height:24px;background:#e5e5e5;"></div>
<div class="r" style="left:202px;top:883px;width:1px;height:59px;background:#d0d0d0;"></div>
<div class="r" style="left:464px;top:858px;width:1px;height:24px;background:#e5e5e5;"></div>
<div class="r" style="left:463px;top:883px;width:1px;height:59px;background:#d0d0d0;"></div>
<div class="r" style="left:594px;top:858px;width:1px;height:24px;background:#e5e5e5;"></div>
<div class="r" style="left:593px;top:883px;width:1px;height:59px;background:#d0d0d0;"></div>
<div class="r" style="left:695px;top:858px;width:1px;height:24px;background:#e5e5e5;"></div>
<div class="r" style="left:694px;top:883px;width:1px;height:59px;background:#d0d0d0;"></div>
<div class="r" style="left:826px;top:858px;width:1px;height:24px;background:#e5e5e5;"></div>
<div class="r" style="left:825px;top:883px;width:1px;height:59px;background:#d0d0d0;"></div>
<div class="r" style="left:971px;top:858px;width:1px;height:24px;background:#e5e5e5;"></div>
<div class="r" style="left:970px;top:883px;width:1px;height:59px;background:#d0d0d0;"></div>
<div class="r" style="left:1115px;top:858px;width:1px;height:24px;background:#e5e5e5;"></div>
<div class="r" style="left:1114px;top:883px;width:1px;height:59px;background:#d0d0d0;"></div>
<div class="r" style="left:1260px;top:858px;width:1px;height:24px;background:#e5e5e5;"></div>
<div class="r" style="left:1259px;top:883px;width:1px;height:59px;background:#d0d0d0;"></div>
<div class="r" style="left:1405px;top:858px;width:1px;height:24px;background:#e5e5e5;"></div>
<div class="r" style="left:1404px;top:883px;width:1px;height:59px;background:#d0d0d0;"></div>
<div class="r" style="left:1550px;top:858px;width:1px;height:24px;background:#e5e5e5;"></div>
<div class="r" style="left:1549px;top:883px;width:1px;height:59px;background:#d0d0d0;"></div>
<div class="r" style="left:1695px;top:858px;width:1px;height:24px;background:#e5e5e5;"></div>
<div class="r" style="left:1694px;top:883px;width:1px;height:59px;background:#d0d0d0;"></div>
<div class="t" style="left:22px;top:862.53px;font-size:12px;line-height:15px;color:#000;font-weight:normal;">Ордер</div>
<div class="t" style="left:69px;top:865.53px;font-size:9px;line-height:11px;color:#888;font-weight:normal;">/</div>
<div class="t" style="left:-141px;width:600px;text-align:right;top:862.53px;font-size:12px;line-height:15px;color:#000;font-weight:normal;">Время</div>
<div class="t" style="left:-11px;width:600px;text-align:right;top:862.53px;font-size:12px;line-height:15px;color:#000;font-weight:normal;">Тип</div>
<div class="t" style="left:90px;width:600px;text-align:right;top:862.53px;font-size:12px;line-height:15px;color:#000;font-weight:normal;">Объем</div>
<div class="t" style="left:220px;width:600px;text-align:right;top:862.53px;font-size:12px;line-height:15px;color:#000;font-weight:normal;">Символ</div>
<div class="t" style="left:365px;width:600px;text-align:right;top:862.53px;font-size:12px;line-height:15px;color:#000;font-weight:normal;">Цена</div>
<div class="t" style="left:510px;width:600px;text-align:right;top:862.53px;font-size:12px;line-height:15px;color:#000;font-weight:normal;">S / L</div>
<div class="t" style="left:655px;width:600px;text-align:right;top:862.53px;font-size:12px;line-height:15px;color:#000;font-weight:normal;">T / P</div>
<div class="t" style="left:800px;width:600px;text-align:right;top:862.53px;font-size:12px;line-height:15px;color:#000;font-weight:normal;">Цена</div>
<div class="t" style="left:945px;width:600px;text-align:right;top:862.53px;font-size:12px;line-height:15px;color:#000;font-weight:normal;">Комиссия</div>
<div class="t" style="left:1090px;width:600px;text-align:right;top:862.53px;font-size:12px;line-height:15px;color:#000;font-weight:normal;">Своп</div>
<div class="t" style="left:1310px;width:600px;text-align:right;top:862.53px;font-size:12px;line-height:15px;color:#000;font-weight:normal;">Прибыль</div>
<svg class="r" style="left:19px;top:884px" width="16" height="16" viewBox="0 0 16 16"><path d="M1.5,1.5h7l3,3v10h-10z" fill="#fff" stroke="#666"/><path d="M8.5,1.5v3h3" fill="none" stroke="#888"/><circle cx="11" cy="11.5" r="3.3" fill="#2a8ad8" stroke="#fff" stroke-width="0.6"/></svg>
<div class="t" style="left:38px;top:884.53px;font-size:12px;line-height:15px;color:#000;font-weight:normal;transform:scaleX(0.889);transform-origin:left 0;">699368798</div>
<div class="t" style="left:-139px;width:600px;text-align:right;top:884.53px;font-size:12px;line-height:15px;color:#000;font-weight:normal;transform:scaleX(0.9);transform-origin:right 0;">2025.01.07 11:41:18</div>
<div class="t" style="left:-9px;width:600px;text-align:right;top:884.53px;font-size:12px;line-height:15px;color:#000;font-weight:normal;">buy</div>
<div class="t" style="left:92px;width:600px;text-align:right;top:884.53px;font-size:12px;line-height:15px;color:#000;font-weight:normal;transform:scaleX(0.9);transform-origin:right 0;">0.20</div>
<div class="t" style="left:222px;width:600px;text-align:right;top:884.53px;font-size:12px;line-height:15px;color:#000;font-weight:normal;transform:scaleX(0.9);transform-origin:right 0;">us500</div>
<div class="t" style="left:367px;width:600px;text-align:right;top:884.53px;font-size:12px;line-height:15px;color:#000;font-weight:normal;transform:scaleX(0.9);transform-origin:right 0;">5984.5</div>
<div class="t" style="left:512px;width:600px;text-align:right;top:884.53px;font-size:12px;line-height:15px;color:#000;font-weight:normal;transform:scaleX(0.9);transform-origin:right 0;">0.0</div>
<div class="t" style="left:657px;width:600px;text-align:right;top:884.53px;font-size:12px;line-height:15px;color:#000;font-weight:normal;transform:scaleX(0.9);transform-origin:right 0;">0.0</div>
<div class="t" style="left:802px;width:600px;text-align:right;top:884.53px;font-size:12px;line-height:15px;color:#000;font-weight:normal;transform:scaleX(0.9);transform-origin:right 0;">6044.0</div>
<div class="t" style="left:947px;width:600px;text-align:right;top:884.53px;font-size:12px;line-height:15px;color:#000;font-weight:normal;transform:scaleX(0.9);transform-origin:right 0;">0.00</div>
<div class="t" style="left:1092px;width:600px;text-align:right;top:884.53px;font-size:12px;line-height:15px;color:#000;font-weight:normal;transform:scaleX(0.9);transform-origin:right 0;">-7.77</div>
<div class="t" style="left:1292px;width:600px;text-align:right;top:884.53px;font-size:12px;line-height:15px;color:#000;font-weight:normal;transform:scaleX(0.9);transform-origin:right 0;">11.90</div>
<svg class="r" style="left:1901px;top:888px" width="9" height="9"><path d="M1,1L8,8M8,1L1,8" stroke="#8c8c8c" stroke-width="1.8"/></svg>
<svg class="r" style="left:19px;top:904px" width="16" height="16" viewBox="0 0 16 16"><path d="M1.5,1.5h7l3,3v10h-10z" fill="#fff" stroke="#666"/><path d="M8.5,1.5v3h3" fill="none" stroke="#888"/><circle cx="11" cy="11.5" r="3.3" fill="#2a8ad8" stroke="#fff" stroke-width="0.6"/></svg>
<div class="t" style="left:38px;top:904.53px;font-size:12px;line-height:15px;color:#000;font-weight:normal;transform:scaleX(0.889);transform-origin:left 0;">699368803</div>
<div class="t" style="left:-139px;width:600px;text-align:right;top:904.53px;font-size:12px;line-height:15px;color:#000;font-weight:normal;transform:scaleX(0.9);transform-origin:right 0;">2025.01.07 11:41:30</div>
<div class="t" style="left:-9px;width:600px;text-align:right;top:904.53px;font-size:12px;line-height:15px;color:#000;font-weight:normal;">buy</div>
<div class="t" style="left:92px;width:600px;text-align:right;top:904.53px;font-size:12px;line-height:15px;color:#000;font-weight:normal;transform:scaleX(0.9);transform-origin:right 0;">0.20</div>
<div class="t" style="left:222px;width:600px;text-align:right;top:904.53px;font-size:12px;line-height:15px;color:#000;font-weight:normal;">usdind</div>
<div class="t" style="left:367px;width:600px;text-align:right;top:904.53px;font-size:12px;line-height:15px;color:#000;font-weight:normal;transform:scaleX(0.9);transform-origin:right 0;">108.058</div>
<div class="t" style="left:512px;width:600px;text-align:right;top:904.53px;font-size:12px;line-height:15px;color:#000;font-weight:normal;transform:scaleX(0.9);transform-origin:right 0;">0.000</div>
<div class="t" style="left:657px;width:600px;text-align:right;top:904.53px;font-size:12px;line-height:15px;color:#000;font-weight:normal;transform:scaleX(0.9);transform-origin:right 0;">0.000</div>
<div class="t" style="left:802px;width:600px;text-align:right;top:904.53px;font-size:12px;line-height:15px;color:#000;font-weight:normal;transform:scaleX(0.9);transform-origin:right 0;">108.407</div>
<div class="t" style="left:947px;width:600px;text-align:right;top:904.53px;font-size:12px;line-height:15px;color:#000;font-weight:normal;transform:scaleX(0.9);transform-origin:right 0;">0.00</div>
<div class="t" style="left:1092px;width:600px;text-align:right;top:904.53px;font-size:12px;line-height:15px;color:#000;font-weight:normal;transform:scaleX(0.9);transform-origin:right 0;">-6.80</div>
<div class="t" style="left:1292px;width:600px;text-align:right;top:904.53px;font-size:12px;line-height:15px;color:#000;font-weight:normal;transform:scaleX(0.9);transform-origin:right 0;">69.80</div>
<svg class="r" style="left:1901px;top:908px" width="9" height="9"><path d="M1,1L8,8M8,1L1,8" stroke="#8c8c8c" stroke-width="1.8"/></svg>
<svg class="r" style="left:19px;top:924px" width="16" height="16" viewBox="0 0 16 16"><path d="M1.5,1.5h7l3,3v10h-10z" fill="#fff" stroke="#666"/><path d="M8.5,1.5v3h3" fill="none" stroke="#888"/><circle cx="11" cy="11.5" r="3.3" fill="#e04020" stroke="#fff" stroke-width="0.6"/></svg>
<div class="t" style="left:38px;top:924.53px;font-size:12px;line-height:15px;color:#fff;font-weight:normal;transform:scaleX(0.889);transform-origin:left 0;">699368808</div>
<div class="t" style="left:-139px;width:600px;text-align:right;top:924.53px;font-size:12px;line-height:15px;color:#fff;font-weight:normal;transform:scaleX(0.9);transform-origin:right 0;">2025.01.07 11:41:45</div>
<div class="t" style="left:-9px;width:600px;text-align:right;top:924.53px;font-size:12px;line-height:15px;color:#fff;font-weight:normal;">sell</div>
<div class="t" style="left:92px;width:600px;text-align:right;top:924.53px;font-size:12px;line-height:15px;color:#fff;font-weight:normal;transform:scaleX(0.9);transform-origin:right 0;">0.10</div>
<div class="t" style="left:222px;width:600px;text-align:right;top:924.53px;font-size:12px;line-height:15px;color:#fff;font-weight:normal;">eurusd</div>
<div class="t" style="left:367px;width:600px;text-align:right;top:924.53px;font-size:12px;line-height:15px;color:#fff;font-weight:normal;transform:scaleX(0.9);transform-origin:right 0;">1.04272</div>
<div class="t" style="left:512px;width:600px;text-align:right;top:924.53px;font-size:12px;line-height:15px;color:#fff;font-weight:normal;transform:scaleX(0.9);transform-origin:right 0;">0.00000</div>
<div class="t" style="left:657px;width:600px;text-align:right;top:924.53px;font-size:12px;line-height:15px;color:#fff;font-weight:normal;transform:scaleX(0.9);transform-origin:right 0;">0.00000</div>
<div class="t" style="left:802px;width:600px;text-align:right;top:924.53px;font-size:12px;line-height:15px;color:#fff;font-weight:normal;transform:scaleX(0.9);transform-origin:right 0;">1.03035</div>
<div class="t" style="left:947px;width:600px;text-align:right;top:924.53px;font-size:12px;line-height:15px;color:#fff;font-weight:normal;transform:scaleX(0.9);transform-origin:right 0;">0.00</div>
<div class="t" style="left:1092px;width:600px;text-align:right;top:924.53px;font-size:12px;line-height:15px;color:#fff;font-weight:normal;transform:scaleX(0.9);transform-origin:right 0;">7.97</div>
<div class="t" style="left:1292px;width:600px;text-align:right;top:924.53px;font-size:12px;line-height:15px;color:#fff;font-weight:normal;transform:scaleX(0.9);transform-origin:right 0;">123.70</div>
<svg class="r" style="left:1901px;top:928px" width="9" height="9"><path d="M1,1L8,8M8,1L1,8" stroke="#8c8c8c" stroke-width="1.8"/></svg>
<svg class="r" style="left:19px;top:945px" width="14" height="16" viewBox="0 0 14 16"><rect x="0.5" y="0.5" width="11" height="13" rx="1.5" fill="#fff" stroke="#777"/><path d="M6,3.5l-3.5,3.5h2v3.5h3v-3.5h2z" fill="#22b022" stroke="#106010" stroke-width="0.6"/></svg>
<div class="t" style="left:38px;top:944.53px;font-size:12px;line-height:15px;color:#000;font-weight:bold;letter-spacing:-0.15px;">Баланс: 100 001.09 USD&nbsp; Средства: 100 199.89&nbsp; Маржа: 131.31&nbsp; Свободная маржа: 100 068.58&nbsp; Уровень: 76310.10%</div>
<div class="t" style="left:1292px;width:600px;text-align:right;top:944.53px;font-size:12px;line-height:15px;color:#000;font-weight:bold;letter-spacing:-0.4px;">198.80</div>
<div class="r" style="left:15px;top:991px;width:1902px;height:1px;background:#000;"></div>
<div class="r" style="left:15px;top:992px;width:1902px;height:24px;background:#f0f0f0;"></div>
<div class="r" style="left:18px;top:991px;width:71px;height:20px;background:#ffffff;border:1px solid #000;border-top:none;box-sizing:border-box;"></div>
<div class="t" style="left:28px;top:994.53px;font-size:12px;line-height:15px;color:#000;font-weight:normal;">Торговля</div>
<div class="t" style="left:99px;top:994.53px;font-size:12px;line-height:15px;color:#6d6d6d;font-weight:normal;">Активы</div>
<div class="r" style="left:150px;top:995px;width:1px;height:13px;background:#8c8c8c;"></div>
<div class="t" style="left:160px;top:994.53px;font-size:12px;line-height:15px;color:#6d6d6d;font-weight:normal;">История Счета</div>
<div class="r" style="left:252px;top:995px;width:1px;height:13px;background:#8c8c8c;"></div>
<div class="t" style="left:262px;top:994.53px;font-size:12px;line-height:15px;color:#6d6d6d;font-weight:normal;">Новости</div>
<div class="r" style="left:331px;top:995px;width:1px;height:13px;background:#8c8c8c;"></div>
<div class="t" style="left:341px;top:994.53px;font-size:12px;line-height:15px;color:#6d6d6d;font-weight:normal;">Алерты</div>
<div class="r" style="left:393px;top:995px;width:1px;height:13px;background:#8c8c8c;"></div>
<div class="t" style="left:403px;top:994.53px;font-size:12px;line-height:15px;color:#6d6d6d;font-weight:normal;">Почта</div>
<div class="r" style="left:454px;top:995px;width:1px;height:13px;background:#8c8c8c;"></div>
<div class="t" style="left:464px;top:994.53px;font-size:12px;line-height:15px;color:#6d6d6d;font-weight:normal;">Маркет</div>
<div class="r" style="left:532px;top:995px;width:1px;height:13px;background:#8c8c8c;"></div>
<div class="t" style="left:542px;top:994.53px;font-size:12px;line-height:15px;color:#6d6d6d;font-weight:normal;">Статьи</div>
<div class="r" style="left:589px;top:995px;width:1px;height:13px;background:#8c8c8c;"></div>
<div class="t" style="left:599px;top:994.53px;font-size:12px;line-height:15px;color:#6d6d6d;font-weight:normal;">Библиотека</div>
<div class="r" style="left:674px;top:995px;width:1px;height:13px;background:#8c8c8c;"></div>
<div class="t" style="left:684px;top:994.53px;font-size:12px;line-height:15px;color:#6d6d6d;font-weight:normal;">Эксперты</div>
<div class="r" style="left:747px;top:995px;width:1px;height:13px;background:#8c8c8c;"></div>
<div class="t" style="left:757px;top:994.53px;font-size:12px;line-height:15px;color:#6d6d6d;font-weight:normal;">Журнал</div>
<div class="r" style="left:812px;top:995px;width:1px;height:13px;background:#8c8c8c;"></div>
<div class="t" style="left:311px;top:1000.53px;font-size:9px;line-height:11px;color:#e02020;font-weight:bold;">12</div>
<div class="t" style="left:439px;top:1000.53px;font-size:9px;line-height:11px;color:#e02020;font-weight:bold;">6</div>
<div class="t" style="left:507px;top:1000.53px;font-size:9px;line-height:11px;color:#e02020;font-weight:bold;">118</div>
<div class="r" style="left:1916px;top:857px;width:1px;height:160px;background:#d0d0d0;"></div>
<div class="r" style="left:0px;top:1016px;width:1920px;height:1px;background:#b4b4b4;"></div>
<div class="r" style="left:0px;top:1016px;width:1920px;height:24px;background:#f0f0f0;"></div>
<div class="t" style="left:2px;top:1022.53px;font-size:12px;line-height:15px;color:#000;font-weight:normal;letter-spacing:-0.15px;">Для вызова справки нажмите F1</div>
<div class="r" style="left:1226px;top:1019px;width:1px;height:18px;background:#c8c8c8;"></div>
<div class="r" style="left:1342px;top:1019px;width:1px;height:18px;background:#c8c8c8;"></div>
<div class="r" style="left:1444px;top:1019px;width:1px;height:18px;background:#c8c8c8;"></div>
<div class="r" style="left:1515px;top:1019px;width:1px;height:18px;background:#c8c8c8;"></div>
<div class="r" style="left:1586px;top:1019px;width:1px;height:18px;background:#c8c8c8;"></div>
<div class="r" style="left:1654px;top:1019px;width:1px;height:18px;background:#c8c8c8;"></div>
<div class="r" style="left:1724px;top:1019px;width:1px;height:18px;background:#c8c8c8;"></div>
<div class="r" style="left:1790px;top:1019px;width:1px;height:18px;background:#c8c8c8;"></div>
<div class="t" style="left:1232px;top:1022.53px;font-size:12px;line-height:15px;color:#000;font-weight:normal;">Default</div>
<svg class="r" style="left:1796px;top:1022px" width="23" height="13"><rect x="0" y="1" width="1" height="12" fill="#2a8a2a"/><rect x="2" y="1" width="1" height="12" fill="#2a8a2a"/><rect x="4" y="1" width="1" height="12" fill="#2a8a2a"/><rect x="6" y="1" width="1" height="12" fill="#2a8a2a"/><rect x="8" y="1" width="1" height="12" fill="#2a8a2a"/><rect x="10" y="1" width="1" height="12" fill="#2a8a2a"/><rect x="12" y="1" width="1" height="12" fill="#2a8a2a"/><rect x="14" y="3" width="1" height="10" fill="#1a3a6a"/><rect x="16" y="3" width="1" height="10" fill="#1a3a6a"/><rect x="18" y="3" width="1" height="10" fill="#1a3a6a"/><rect x="20" y="3" width="1" height="10" fill="#1a3a6a"/><rect x="22" y="3" width="1" height="10" fill="#1a3a6a"/></svg>
<div class="t" style="left:1823px;top:1022.53px;font-size:12px;line-height:15px;color:#000;font-weight:normal;letter-spacing:-0.33px;">37294/303 kb</div>
</body></html>
